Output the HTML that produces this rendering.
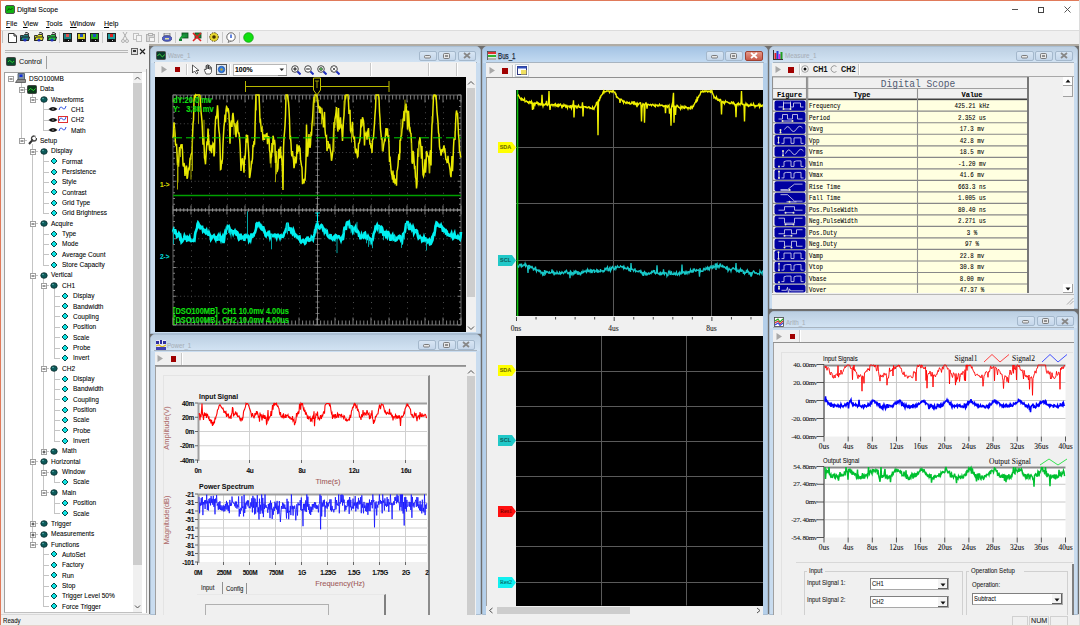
<!DOCTYPE html><html><head><meta charset="utf-8"><style>
html,body{margin:0;padding:0;width:1080px;height:626px;overflow:hidden;background:#f0f0f0}
body{position:relative;font-family:"Liberation Sans",sans-serif}
div{position:absolute}
.t{white-space:nowrap;-webkit-text-stroke:0.08px currentColor}
</style></head><body>
<div style="left:0px;top:0px;width:1080px;height:626px;background:#f0f0f0"></div>
<div style="left:0px;top:0px;width:1080px;height:30px;background:#ffffff"></div>
<div style="left:0px;top:0px;width:1080px;height:1px;background:#e07a5a"></div>
<div style="left:0px;top:0px;width:1px;height:626px;background:#e07a5a"></div>
<div style="left:1079px;top:0px;width:1px;height:626px;background:#dcdcdc"></div>
<div style="left:0px;top:625px;width:1080px;height:1px;background:#e8cfc8"></div>
<svg style="position:absolute;left:5px;top:4.5px;" width="10" height="9" viewBox="0 0 10 9"><rect x="0.5" y="0.5" width="9" height="8" rx="1.5" fill="#10b010" stroke="#505050" stroke-width="1"/><path d="M2.5 5.5L4 3.5L5.5 5L7.5 3" fill="none" stroke="#0a3a0a" stroke-width="0.9"/></svg>
<div class="t" style="left:17px;top:1.50px;height:16px;line-height:16px;font-size:8px;transform:scaleX(0.87);transform-origin:0 50%;color:#000">Digital Scope</div>
<div style="left:1011.5px;top:9px;width:6px;height:1px;background:#555"></div>
<div style="left:1037.5px;top:6.5px;width:6px;height:6px;border:1px solid #444;box-sizing:border-box"></div>
<svg style="position:absolute;left:1063.5px;top:6px;" width="7" height="7" viewBox="0 0 7 7"><path d="M0.5 0.5L6.5 6.5M6.5 0.5L0.5 6.5" stroke="#444" stroke-width="0.9"/></svg>
<div class="t" style="left:6px;top:16.00px;height:16px;line-height:16px;font-size:8px;transform:scaleX(0.88);transform-origin:0 50%;color:#000"><u>F</u>ile</div>
<div class="t" style="left:23px;top:16.00px;height:16px;line-height:16px;font-size:8px;transform:scaleX(0.88);transform-origin:0 50%;color:#000"><u>V</u>iew</div>
<div class="t" style="left:46px;top:16.00px;height:16px;line-height:16px;font-size:8px;transform:scaleX(0.88);transform-origin:0 50%;color:#000"><u>T</u>ools</div>
<div class="t" style="left:70px;top:16.00px;height:16px;line-height:16px;font-size:8px;transform:scaleX(0.88);transform-origin:0 50%;color:#000"><u>W</u>indow</div>
<div class="t" style="left:104px;top:16.00px;height:16px;line-height:16px;font-size:8px;transform:scaleX(0.88);transform-origin:0 50%;color:#000"><u>H</u>elp</div>
<div style="left:1px;top:30px;width:1078px;height:14px;background:#f0f0f0;border-top:1px solid #dcdcdc;box-sizing:border-box"></div>
<div style="left:149px;top:44px;width:930px;height:571px;background:#6e6e6e"></div>
<div style="left:149px;top:44px;width:930px;height:1.5px;background:#b0aca4"></div>
<div style="left:1px;top:44px;width:148px;height:570px;background:#f0f0f0"></div>
<div style="left:1px;top:614px;width:1078px;height:11px;background:#f0f0f0;border-top:1px solid #d8d8d8;box-sizing:border-box"></div>
<div class="t" style="left:3px;top:612.90px;height:15.2px;line-height:15.2px;font-size:7.6px;transform:scaleX(0.8);transform-origin:0 50%;color:#111">Ready</div>
<div style="left:150px;top:46px;width:331px;height:288px;background:#c9dcef;border:1px solid #aabed2;box-sizing:border-box;border-radius:5px 5px 0 0"></div>
<div style="left:151px;top:47px;width:329px;height:15.5px;background:linear-gradient(#bccfe2,#d3e4f4);border-radius:4px 4px 0 0"></div>
<div style="left:154px;top:62.2px;width:323px;height:0.8px;background:#a8b4c0"></div>
<div style="left:150px;top:334px;width:331px;height:281px;background:#c9dcef;border:1px solid #aabed2;box-sizing:border-box;border-radius:5px 5px 0 0"></div>
<div style="left:151px;top:335px;width:329px;height:15.5px;background:linear-gradient(#bccfe2,#d3e4f4);border-radius:4px 4px 0 0"></div>
<div style="left:154px;top:350.2px;width:323px;height:0.8px;background:#a8b4c0"></div>
<div style="left:482px;top:46px;width:286px;height:569px;background:#b4cfea;border:1px solid #aabed2;box-sizing:border-box;border-radius:5px 5px 0 0"></div>
<div style="left:483px;top:47px;width:284px;height:15.5px;background:linear-gradient(#a4c3e4,#c4dbf2);border-radius:4px 4px 0 0"></div>
<div style="left:486px;top:62.2px;width:278px;height:0.8px;background:#a8b4c0"></div>
<div style="left:769px;top:46px;width:309px;height:263px;background:#c9dcef;border:1px solid #aabed2;box-sizing:border-box;border-radius:5px 5px 0 0"></div>
<div style="left:770px;top:47px;width:307px;height:15.5px;background:linear-gradient(#bccfe2,#d3e4f4);border-radius:4px 4px 0 0"></div>
<div style="left:773px;top:62.2px;width:301px;height:0.8px;background:#a8b4c0"></div>
<div style="left:769px;top:311px;width:309px;height:304px;background:#c9dcef;border:1px solid #aabed2;box-sizing:border-box;border-radius:5px 5px 0 0"></div>
<div style="left:770px;top:312px;width:307px;height:15.5px;background:linear-gradient(#bccfe2,#d3e4f4);border-radius:4px 4px 0 0"></div>
<div style="left:773px;top:327.2px;width:301px;height:0.8px;background:#a8b4c0"></div>
<div style="left:155px;top:62px;width:321px;height:15px;background:#f0f0f0"></div>
<div style="left:155px;top:77px;width:311px;height:255px;background:#000"></div>
<div style="left:466px;top:77px;width:10px;height:255px;background:#f0f0f0"></div>
<div style="left:155px;top:352px;width:321px;height:14px;background:#f0f0f0"></div>
<div style="left:155px;top:366px;width:321px;height:249px;background:#f0f0f0;border-top:1px solid #a0a0a0;border-left:1px solid #a0a0a0;box-sizing:border-box"></div>
<div style="left:486px;top:63px;width:277px;height:14px;background:#f0f0f0"></div>
<div style="left:486px;top:77px;width:277px;height:538px;background:#f0f0f0;border-top:1px solid #a0a0a0;border-left:1px solid #a0a0a0;box-sizing:border-box"></div>
<div style="left:516px;top:90px;width:247px;height:226px;background:#000"></div>
<div style="left:516px;top:336px;width:247px;height:270px;background:#000"></div>
<div style="left:772px;top:63px;width:302px;height:13px;background:#f0f0f0"></div>
<div style="left:772px;top:76px;width:302px;height:233px;background:#f0f0f0"></div>
<div style="left:773px;top:330px;width:301px;height:12px;background:#f0f0f0"></div>
<div style="left:773px;top:342px;width:301px;height:273px;background:#f0f0f0;border-top:1px solid #a0a0a0;border-left:1px solid #a0a0a0;box-sizing:border-box"></div>
<svg style="position:absolute;left:8px;top:33px;" width="9" height="10" viewBox="0 0 9 10"><path d="M0.5 0.5H6L8.5 3V9.5H0.5Z" fill="#fff" stroke="#333" stroke-width="1"/><path d="M6 0.5V3H8.5" fill="none" stroke="#333"/></svg>
<svg style="position:absolute;left:20px;top:32px;" width="10" height="10" viewBox="0 0 10 10"><path d="M0.5 3.5H3.5L4.5 2.5H8.5V8.5H0.5Z" fill="#208080" stroke="#333"/><path d="M0.5 8.5L2 5H9.5L8.5 8.5Z" fill="#208080" stroke="#222"/><path d="M5 1Q7 -0.5 9 2" fill="none" stroke="#222"/><circle cx="5" cy="8" r="1.6" fill="#2030c0"/></svg>
<svg style="position:absolute;left:34px;top:32px;" width="10" height="10" viewBox="0 0 10 10"><path d="M0.5 3.5H3.5L4.5 2.5H8.5V8.5H0.5Z" fill="#e0e020" stroke="#333"/><path d="M0.5 8.5L2 5H9.5L8.5 8.5Z" fill="#e0e020" stroke="#222"/><path d="M5 1Q7 -0.5 9 2" fill="none" stroke="#222"/><circle cx="5" cy="8" r="1.6" fill="#2030c0"/></svg>
<svg style="position:absolute;left:47px;top:32px;" width="10" height="10" viewBox="0 0 10 10"><path d="M0.5 3.5H3.5L4.5 2.5H8.5V8.5H0.5Z" fill="#20c040" stroke="#333"/><path d="M0.5 8.5L2 5H9.5L8.5 8.5Z" fill="#20c040" stroke="#222"/><path d="M5 1Q7 -0.5 9 2" fill="none" stroke="#222"/><circle cx="5" cy="8" r="1.6" fill="#2030c0"/></svg>
<div style="left:59px;top:32px;width:1px;height:11px;background:#c8c8c8"></div>
<svg style="position:absolute;left:63px;top:33px;" width="9" height="9" viewBox="0 0 9 9"><rect x="0" y="0" width="9" height="9" fill="#222"/><rect x="1" y="1" width="7" height="5" fill="#208080"/><rect x="3" y="1" width="3" height="3" fill="#e05050"/><rect x="2" y="6" width="5" height="3" fill="#111"/><rect x="5" y="7" width="1" height="1" fill="#ddd"/></svg>
<svg style="position:absolute;left:77px;top:33px;" width="9" height="9" viewBox="0 0 9 9"><rect x="0" y="0" width="9" height="9" fill="#222"/><rect x="1" y="1" width="7" height="5" fill="#d0d020"/><rect x="3" y="1" width="3" height="3" fill="#2050c0"/><rect x="2" y="6" width="5" height="3" fill="#111"/><rect x="5" y="7" width="1" height="1" fill="#ddd"/></svg>
<svg style="position:absolute;left:90px;top:33px;" width="9" height="9" viewBox="0 0 9 9"><rect x="0" y="0" width="9" height="9" fill="#222"/><rect x="1" y="1" width="7" height="5" fill="#20b020"/><rect x="3" y="1" width="3" height="3" fill="#2050c0"/><rect x="2" y="6" width="5" height="3" fill="#111"/><rect x="5" y="7" width="1" height="1" fill="#ddd"/></svg>
<div style="left:102px;top:32px;width:1px;height:11px;background:#c8c8c8"></div>
<svg style="position:absolute;left:107px;top:33px;" width="9" height="9" viewBox="0 0 9 9"><rect x="0" y="0" width="9" height="9" fill="#222"/><rect x="1" y="1" width="7" height="5" fill="#20a0a0"/><rect x="3" y="1" width="3" height="3" fill="#e02020"/><rect x="2" y="6" width="5" height="3" fill="#111"/><rect x="5" y="7" width="1" height="1" fill="#ddd"/></svg>
<svg style="position:absolute;left:121px;top:32px;" width="8" height="11" viewBox="0 0 8 11"><path d="M2 0L6 7M6 0L2 7" stroke="#b0b0b0" stroke-width="1"/><circle cx="2" cy="9" r="1.5" fill="none" stroke="#b0b0b0"/><circle cx="6" cy="9" r="1.5" fill="none" stroke="#b0b0b0"/></svg>
<svg style="position:absolute;left:133px;top:33px;" width="10" height="9" viewBox="0 0 10 9"><rect x="0.5" y="0.5" width="5" height="6" fill="#f4f4f4" stroke="#c0c0c0"/><rect x="3.5" y="2.5" width="5" height="6" fill="#f4f4f4" stroke="#c0c0c0"/></svg>
<svg style="position:absolute;left:146px;top:33px;" width="10" height="9" viewBox="0 0 10 9"><rect x="0.5" y="1.5" width="8" height="7" fill="#d8d8d8" stroke="#b0b0b0"/><rect x="2.5" y="0.5" width="4" height="2" fill="#eee" stroke="#b0b0b0"/><rect x="3.5" y="4.5" width="5" height="4" fill="#f4f4f4" stroke="#b8b8b8"/></svg>
<div style="left:158px;top:32px;width:1px;height:11px;background:#c8c8c8"></div>
<svg style="position:absolute;left:162px;top:33px;" width="10" height="9" viewBox="0 0 10 9"><rect x="2" y="0" width="6" height="3" fill="#ddd" stroke="#555" stroke-width="0.6"/><ellipse cx="5" cy="5.5" rx="4.7" ry="2.8" fill="#5060c8" stroke="#303880" stroke-width="0.8"/><rect x="3" y="5" width="4" height="1.5" fill="#e0e0a0"/></svg>
<div style="left:175px;top:32px;width:1px;height:11px;background:#c8c8c8"></div>
<svg style="position:absolute;left:179px;top:32px;" width="10" height="10" viewBox="0 0 10 10"><rect x="3" y="1" width="6" height="5" fill="#1a8a3a" stroke="#0a4a1a" stroke-width="0.8"/><path d="M1 8Q2 4 6 4" fill="none" stroke="#1aa03a" stroke-width="2"/><rect x="0" y="7" width="3" height="2" fill="#108030"/></svg>
<svg style="position:absolute;left:192px;top:32px;" width="10" height="10" viewBox="0 0 10 10"><rect x="3" y="1" width="6" height="5" fill="#1a8a3a" stroke="#0a4a1a" stroke-width="0.8"/><path d="M1 1L9 9M9 1L1 9" stroke="#e02020" stroke-width="1.6"/></svg>
<div style="left:207px;top:32px;width:1px;height:11px;background:#c8c8c8"></div>
<svg style="position:absolute;left:209px;top:32px;" width="10" height="10" viewBox="0 0 10 10"><circle cx="5" cy="5" r="4.3" fill="#e8d830" stroke="#403000" stroke-width="0.9" stroke-dasharray="1.5 1"/><circle cx="5" cy="5" r="1.8" fill="#403000"/></svg>
<div style="left:222px;top:32px;width:1px;height:11px;background:#c8c8c8"></div>
<svg style="position:absolute;left:226px;top:32px;" width="10" height="11" viewBox="0 0 10 11"><circle cx="5" cy="5" r="4.2" fill="#fff" stroke="#444" stroke-width="0.8"/><path d="M5 2.5V6" stroke="#2050d0" stroke-width="1.4"/><path d="M3 8.5L2 10.5L5 9" fill="#fff" stroke="#444" stroke-width="0.6"/></svg>
<div style="left:239px;top:32px;width:1px;height:11px;background:#c8c8c8"></div>
<svg style="position:absolute;left:243px;top:32px;" width="11" height="11" viewBox="0 0 11 11"><circle cx="5.5" cy="5.5" r="4.8" fill="#10e010" stroke="#10a010" stroke-width="0.8"/></svg>
<div style="left:2px;top:31px;width:1px;height:12px;background:#c0c0c0"></div>
<div style="left:5px;top:50px;width:123px;height:1px;background:#b8b8b8"></div>
<div style="left:5px;top:52px;width:123px;height:1px;background:#b8b8b8"></div>
<svg style="position:absolute;left:131px;top:48px;" width="7" height="7" viewBox="0 0 7 7"><rect x="0.5" y="0.5" width="6" height="6" fill="#ddd" stroke="#666"/><rect x="2" y="2" width="3" height="2" fill="#333"/></svg>
<svg style="position:absolute;left:139px;top:48px;" width="7" height="7" viewBox="0 0 7 7"><path d="M1 1L6 6M6 1L1 6" stroke="#222" stroke-width="1.2"/></svg>
<div style="left:5px;top:56px;width:41px;height:14px;background:#f0f0f0"></div>
<div style="left:46px;top:56px;width:1px;height:13px;background:#a0a0a0"></div>
<svg style="position:absolute;left:6px;top:57px;" width="10" height="9" viewBox="0 0 10 9"><rect x="0.5" y="0.5" width="9" height="8" rx="1" fill="#0a4a2a" stroke="#444"/><path d="M2 5Q3.5 2 5 4.5T8 4" fill="none" stroke="#2fe02f" stroke-width="0.9"/></svg>
<div class="t" style="left:19px;top:54.00px;height:16px;line-height:16px;font-size:8px;transform:scaleX(0.89);transform-origin:0 50%;color:#222">Control</div>
<div style="left:4px;top:72px;width:142px;height:541px;background:#fff;border-top:1px solid #a0a0a0;border-left:1px solid #a0a0a0;border-bottom:1px solid #c0c0c0;box-sizing:border-box"></div>
<div style="left:133px;top:73px;width:9px;height:539px;background:#f0f0f0"></div>
<div style="left:133px;top:83px;width:9px;height:482px;background:#cdcdcd"></div>
<svg style="position:absolute;left:134px;top:75px;" width="7" height="6" viewBox="0 0 7 6"><path d="M1 4.5L3.5 2L6 4.5" fill="none" stroke="#505050" stroke-width="1"/></svg>
<svg style="position:absolute;left:134px;top:604px;" width="7" height="6" viewBox="0 0 7 6"><path d="M1 1.5L3.5 4L6 1.5" fill="none" stroke="#505050" stroke-width="1"/></svg>
<div style="left:142px;top:72px;width:4px;height:541px;background:#fff"></div>
<div style="left:146px;top:69px;width:1px;height:544px;background:#a8a8a8"></div>
<div style="left:21px;top:81.4px;width:1px;height:59.099999999999994px;background:#c4c4c4"></div>
<div style="left:32px;top:91.75px;width:1px;height:7.3500000000000085px;background:#c4c4c4"></div>
<div style="left:43px;top:102.10000000000001px;width:1px;height:28.049999999999997px;background:#c4c4c4"></div>
<div style="left:32px;top:143.5px;width:1px;height:400.65px;background:#c4c4c4"></div>
<div style="left:43px;top:153.85000000000002px;width:1px;height:59.099999999999966px;background:#c4c4c4"></div>
<div style="left:43px;top:226.3px;width:1px;height:38.39999999999998px;background:#c4c4c4"></div>
<div style="left:43px;top:278.05px;width:1px;height:172.95px;background:#c4c4c4"></div>
<div style="left:54px;top:288.4px;width:1px;height:69.45000000000005px;background:#c4c4c4"></div>
<div style="left:54px;top:371.20000000000005px;width:1px;height:69.44999999999993px;background:#c4c4c4"></div>
<div style="left:43px;top:464.35px;width:1px;height:28.049999999999955px;background:#c4c4c4"></div>
<div style="left:54px;top:474.70000000000005px;width:1px;height:7.349999999999909px;background:#c4c4c4"></div>
<div style="left:54px;top:495.4px;width:1px;height:17.700000000000045px;background:#c4c4c4"></div>
<div style="left:43px;top:547.15px;width:1px;height:59.10000000000002px;background:#c4c4c4"></div>
<svg style="position:absolute;left:8px;top:76px;" width="6" height="6" viewBox="0 0 6 6"><rect x="0.5" y="0.5" width="5" height="5" fill="#fff" stroke="#a0a0a0"/><path d="M1.5 3H4.5" stroke="#333" stroke-width="1"/></svg>
<svg style="position:absolute;left:15px;top:73px;" width="11" height="10" viewBox="0 0 11 10"><path d="M3 0.5H9.5V7.5H3Z" fill="#8090a0" stroke="#405060" stroke-width="0.8"/><rect x="4.5" y="1.5" width="3" height="2.5" fill="#1030e0"/><path d="M0.5 9.5L2.5 6.5H10.5V9.5Z" fill="#909090" stroke="#505050" stroke-width="0.8"/></svg>
<div class="t" style="left:29.0px;top:70.80px;height:15.2px;line-height:15.2px;font-size:7.6px;transform:scaleX(0.86);transform-origin:0 50%;color:#000">DSO100MB</div>
<div style="left:21px;top:89px;width:6px;height:1px;background:#c4c4c4"></div>
<svg style="position:absolute;left:19px;top:87px;" width="6" height="6" viewBox="0 0 6 6"><rect x="0.5" y="0.5" width="5" height="5" fill="#fff" stroke="#a0a0a0"/><path d="M1.5 3H4.5" stroke="#333" stroke-width="1"/></svg>
<svg style="position:absolute;left:27px;top:84.5px;" width="10" height="9" viewBox="0 0 10 9"><rect x="0.5" y="0.5" width="9" height="8" rx="1" fill="#0a3a1a" stroke="#444"/><path d="M1.5 5.5Q3.5 2 5 4.5T8.5 3.5" fill="none" stroke="#30e030" stroke-width="0.9"/></svg>
<div class="t" style="left:39.9px;top:81.15px;height:15.2px;line-height:15.2px;font-size:7.6px;transform:scaleX(0.86);transform-origin:0 50%;color:#000">Data</div>
<div style="left:32px;top:99px;width:6px;height:1px;background:#c4c4c4"></div>
<svg style="position:absolute;left:30px;top:97px;" width="6" height="6" viewBox="0 0 6 6"><rect x="0.5" y="0.5" width="5" height="5" fill="#fff" stroke="#a0a0a0"/><path d="M1.5 3H4.5" stroke="#333" stroke-width="1"/></svg>
<svg style="position:absolute;left:40px;top:96px;" width="8" height="7" viewBox="0 0 8 7"><ellipse cx="4" cy="3.5" rx="3.2" ry="2.8" fill="#0d5a5a" stroke="#082a2a" stroke-width="0.8"/><circle cx="3" cy="2.5" r="0.8" fill="#5fb0b0"/></svg>
<div class="t" style="left:50.8px;top:91.50px;height:15.2px;line-height:15.2px;font-size:7.6px;transform:scaleX(0.86);transform-origin:0 50%;color:#000">Waveforms</div>
<div style="left:43px;top:109px;width:6px;height:1px;background:#c4c4c4"></div>
<svg style="position:absolute;left:48px;top:106px;" width="10" height="6" viewBox="0 0 10 6"><path d="M0.5 3Q5 -1 9.5 3Q5 7 0.5 3Z" fill="#111"/><circle cx="5" cy="3" r="1.2" fill="#555"/></svg>
<svg style="position:absolute;left:58px;top:105px;" width="10" height="7" viewBox="0 0 10 7"><path d="M1 5Q2.5 0 4.5 3T8 1" fill="none" stroke="#3050e0" stroke-width="1"/></svg>
<div class="t" style="left:71px;top:101.85px;height:15.2px;line-height:15.2px;font-size:7.6px;transform:scaleX(0.86);transform-origin:0 50%;color:#000">CH1</div>
<div style="left:43px;top:120px;width:6px;height:1px;background:#c4c4c4"></div>
<svg style="position:absolute;left:48px;top:117px;" width="10" height="6" viewBox="0 0 10 6"><path d="M0.5 3Q5 -1 9.5 3Q5 7 0.5 3Z" fill="#111"/><circle cx="5" cy="3" r="1.2" fill="#555"/></svg>
<svg style="position:absolute;left:58px;top:116px;" width="10" height="7" viewBox="0 0 10 7"><rect x="0.5" y="0.5" width="9" height="6" fill="#fff" stroke="#e03030"/><path d="M1 5Q2.5 0 4.5 3T8 1" fill="none" stroke="#3050e0" stroke-width="1"/></svg>
<div class="t" style="left:71px;top:112.20px;height:15.2px;line-height:15.2px;font-size:7.6px;transform:scaleX(0.86);transform-origin:0 50%;color:#000">CH2</div>
<div style="left:43px;top:130px;width:6px;height:1px;background:#c4c4c4"></div>
<svg style="position:absolute;left:48px;top:127px;" width="10" height="6" viewBox="0 0 10 6"><path d="M0.5 3Q5 -1 9.5 3Q5 7 0.5 3Z" fill="#111"/><circle cx="5" cy="3" r="1.2" fill="#555"/></svg>
<svg style="position:absolute;left:58px;top:126px;" width="10" height="7" viewBox="0 0 10 7"><path d="M1 5Q2.5 0 4.5 3T8 1" fill="none" stroke="#3050e0" stroke-width="1"/></svg>
<div class="t" style="left:71px;top:122.55px;height:15.2px;line-height:15.2px;font-size:7.6px;transform:scaleX(0.86);transform-origin:0 50%;color:#000">Math</div>
<div style="left:21px;top:140px;width:6px;height:1px;background:#c4c4c4"></div>
<svg style="position:absolute;left:19px;top:138px;" width="6" height="6" viewBox="0 0 6 6"><rect x="0.5" y="0.5" width="5" height="5" fill="#fff" stroke="#a0a0a0"/><path d="M1.5 3H4.5" stroke="#333" stroke-width="1"/></svg>
<svg style="position:absolute;left:27px;top:135px;" width="10" height="11" viewBox="0 0 10 11"><path d="M2 9L6 4.5" stroke="#333" stroke-width="2"/><circle cx="7" cy="3.5" r="2.5" fill="none" stroke="#444" stroke-width="1.3"/><path d="M7.5 1L9.5 1L9.5 3" stroke="#fff" stroke-width="1.2" fill="none"/></svg>
<div class="t" style="left:39.9px;top:132.90px;height:15.2px;line-height:15.2px;font-size:7.6px;transform:scaleX(0.86);transform-origin:0 50%;color:#000">Setup</div>
<div style="left:32px;top:151px;width:6px;height:1px;background:#c4c4c4"></div>
<svg style="position:absolute;left:30px;top:149px;" width="6" height="6" viewBox="0 0 6 6"><rect x="0.5" y="0.5" width="5" height="5" fill="#fff" stroke="#a0a0a0"/><path d="M1.5 3H4.5" stroke="#333" stroke-width="1"/></svg>
<svg style="position:absolute;left:40px;top:148px;" width="8" height="7" viewBox="0 0 8 7"><ellipse cx="4" cy="3.5" rx="3.2" ry="2.8" fill="#0d5a5a" stroke="#082a2a" stroke-width="0.8"/><circle cx="3" cy="2.5" r="0.8" fill="#5fb0b0"/></svg>
<div class="t" style="left:50.8px;top:143.25px;height:15.2px;line-height:15.2px;font-size:7.6px;transform:scaleX(0.86);transform-origin:0 50%;color:#000">Display</div>
<div style="left:43px;top:161px;width:6px;height:1px;background:#c4c4c4"></div>
<svg style="position:absolute;left:50px;top:157px;" width="8" height="8" viewBox="0 0 8 8"><path d="M4 1L7 4L4 7L1 4Z" fill="#10e0e0" stroke="#0a4a4a" stroke-width="1"/></svg>
<div class="t" style="left:61.7px;top:153.60px;height:15.2px;line-height:15.2px;font-size:7.6px;transform:scaleX(0.86);transform-origin:0 50%;color:#000">Format</div>
<div style="left:43px;top:172px;width:6px;height:1px;background:#c4c4c4"></div>
<svg style="position:absolute;left:50px;top:168px;" width="8" height="8" viewBox="0 0 8 8"><path d="M4 1L7 4L4 7L1 4Z" fill="#10e0e0" stroke="#0a4a4a" stroke-width="1"/></svg>
<div class="t" style="left:61.7px;top:163.95px;height:15.2px;line-height:15.2px;font-size:7.6px;transform:scaleX(0.86);transform-origin:0 50%;color:#000">Persistence</div>
<div style="left:43px;top:182px;width:6px;height:1px;background:#c4c4c4"></div>
<svg style="position:absolute;left:50px;top:178px;" width="8" height="8" viewBox="0 0 8 8"><path d="M4 1L7 4L4 7L1 4Z" fill="#10e0e0" stroke="#0a4a4a" stroke-width="1"/></svg>
<div class="t" style="left:61.7px;top:174.30px;height:15.2px;line-height:15.2px;font-size:7.6px;transform:scaleX(0.86);transform-origin:0 50%;color:#000">Style</div>
<div style="left:43px;top:192px;width:6px;height:1px;background:#c4c4c4"></div>
<svg style="position:absolute;left:50px;top:188px;" width="8" height="8" viewBox="0 0 8 8"><path d="M4 1L7 4L4 7L1 4Z" fill="#10e0e0" stroke="#0a4a4a" stroke-width="1"/></svg>
<div class="t" style="left:61.7px;top:184.65px;height:15.2px;line-height:15.2px;font-size:7.6px;transform:scaleX(0.86);transform-origin:0 50%;color:#000">Contrast</div>
<div style="left:43px;top:203px;width:6px;height:1px;background:#c4c4c4"></div>
<svg style="position:absolute;left:50px;top:199px;" width="8" height="8" viewBox="0 0 8 8"><path d="M4 1L7 4L4 7L1 4Z" fill="#10e0e0" stroke="#0a4a4a" stroke-width="1"/></svg>
<div class="t" style="left:61.7px;top:195.00px;height:15.2px;line-height:15.2px;font-size:7.6px;transform:scaleX(0.86);transform-origin:0 50%;color:#000">Grid Type</div>
<div style="left:43px;top:213px;width:6px;height:1px;background:#c4c4c4"></div>
<svg style="position:absolute;left:50px;top:209px;" width="8" height="8" viewBox="0 0 8 8"><path d="M4 1L7 4L4 7L1 4Z" fill="#10e0e0" stroke="#0a4a4a" stroke-width="1"/></svg>
<div class="t" style="left:61.7px;top:205.35px;height:15.2px;line-height:15.2px;font-size:7.6px;transform:scaleX(0.86);transform-origin:0 50%;color:#000">Grid Brightness</div>
<div style="left:32px;top:223px;width:6px;height:1px;background:#c4c4c4"></div>
<svg style="position:absolute;left:30px;top:221px;" width="6" height="6" viewBox="0 0 6 6"><rect x="0.5" y="0.5" width="5" height="5" fill="#fff" stroke="#a0a0a0"/><path d="M1.5 3H4.5" stroke="#333" stroke-width="1"/></svg>
<svg style="position:absolute;left:40px;top:220px;" width="8" height="7" viewBox="0 0 8 7"><ellipse cx="4" cy="3.5" rx="3.2" ry="2.8" fill="#0d5a5a" stroke="#082a2a" stroke-width="0.8"/><circle cx="3" cy="2.5" r="0.8" fill="#5fb0b0"/></svg>
<div class="t" style="left:50.8px;top:215.70px;height:15.2px;line-height:15.2px;font-size:7.6px;transform:scaleX(0.86);transform-origin:0 50%;color:#000">Acquire</div>
<div style="left:43px;top:234px;width:6px;height:1px;background:#c4c4c4"></div>
<svg style="position:absolute;left:50px;top:230px;" width="8" height="8" viewBox="0 0 8 8"><path d="M4 1L7 4L4 7L1 4Z" fill="#10e0e0" stroke="#0a4a4a" stroke-width="1"/></svg>
<div class="t" style="left:61.7px;top:226.05px;height:15.2px;line-height:15.2px;font-size:7.6px;transform:scaleX(0.86);transform-origin:0 50%;color:#000">Type</div>
<div style="left:43px;top:244px;width:6px;height:1px;background:#c4c4c4"></div>
<svg style="position:absolute;left:50px;top:240px;" width="8" height="8" viewBox="0 0 8 8"><path d="M4 1L7 4L4 7L1 4Z" fill="#10e0e0" stroke="#0a4a4a" stroke-width="1"/></svg>
<div class="t" style="left:61.7px;top:236.40px;height:15.2px;line-height:15.2px;font-size:7.6px;transform:scaleX(0.86);transform-origin:0 50%;color:#000">Mode</div>
<div style="left:43px;top:254px;width:6px;height:1px;background:#c4c4c4"></div>
<svg style="position:absolute;left:50px;top:250px;" width="8" height="8" viewBox="0 0 8 8"><path d="M4 1L7 4L4 7L1 4Z" fill="#10e0e0" stroke="#0a4a4a" stroke-width="1"/></svg>
<div class="t" style="left:61.7px;top:246.75px;height:15.2px;line-height:15.2px;font-size:7.6px;transform:scaleX(0.86);transform-origin:0 50%;color:#000">Average Count</div>
<div style="left:43px;top:265px;width:6px;height:1px;background:#c4c4c4"></div>
<svg style="position:absolute;left:50px;top:261px;" width="8" height="8" viewBox="0 0 8 8"><path d="M4 1L7 4L4 7L1 4Z" fill="#10e0e0" stroke="#0a4a4a" stroke-width="1"/></svg>
<div class="t" style="left:61.7px;top:257.10px;height:15.2px;line-height:15.2px;font-size:7.6px;transform:scaleX(0.86);transform-origin:0 50%;color:#000">Store Capacity</div>
<div style="left:32px;top:275px;width:6px;height:1px;background:#c4c4c4"></div>
<svg style="position:absolute;left:30px;top:273px;" width="6" height="6" viewBox="0 0 6 6"><rect x="0.5" y="0.5" width="5" height="5" fill="#fff" stroke="#a0a0a0"/><path d="M1.5 3H4.5" stroke="#333" stroke-width="1"/></svg>
<svg style="position:absolute;left:40px;top:272px;" width="8" height="7" viewBox="0 0 8 7"><ellipse cx="4" cy="3.5" rx="3.2" ry="2.8" fill="#0d5a5a" stroke="#082a2a" stroke-width="0.8"/><circle cx="3" cy="2.5" r="0.8" fill="#5fb0b0"/></svg>
<div class="t" style="left:50.8px;top:267.45px;height:15.2px;line-height:15.2px;font-size:7.6px;transform:scaleX(0.86);transform-origin:0 50%;color:#000">Vertical</div>
<div style="left:43px;top:285px;width:6px;height:1px;background:#c4c4c4"></div>
<svg style="position:absolute;left:41px;top:283px;" width="6" height="6" viewBox="0 0 6 6"><rect x="0.5" y="0.5" width="5" height="5" fill="#fff" stroke="#a0a0a0"/><path d="M1.5 3H4.5" stroke="#333" stroke-width="1"/></svg>
<svg style="position:absolute;left:50px;top:282px;" width="8" height="7" viewBox="0 0 8 7"><ellipse cx="4" cy="3.5" rx="3.2" ry="2.8" fill="#0d5a5a" stroke="#082a2a" stroke-width="0.8"/><circle cx="3" cy="2.5" r="0.8" fill="#5fb0b0"/></svg>
<div class="t" style="left:61.7px;top:277.80px;height:15.2px;line-height:15.2px;font-size:7.6px;transform:scaleX(0.86);transform-origin:0 50%;color:#000">CH1</div>
<div style="left:54px;top:296px;width:6px;height:1px;background:#c4c4c4"></div>
<svg style="position:absolute;left:61px;top:292px;" width="8" height="8" viewBox="0 0 8 8"><path d="M4 1L7 4L4 7L1 4Z" fill="#10e0e0" stroke="#0a4a4a" stroke-width="1"/></svg>
<div class="t" style="left:72.6px;top:288.15px;height:15.2px;line-height:15.2px;font-size:7.6px;transform:scaleX(0.86);transform-origin:0 50%;color:#000">Display</div>
<div style="left:54px;top:306px;width:6px;height:1px;background:#c4c4c4"></div>
<svg style="position:absolute;left:61px;top:302px;" width="8" height="8" viewBox="0 0 8 8"><path d="M4 1L7 4L4 7L1 4Z" fill="#10e0e0" stroke="#0a4a4a" stroke-width="1"/></svg>
<div class="t" style="left:72.6px;top:298.50px;height:15.2px;line-height:15.2px;font-size:7.6px;transform:scaleX(0.86);transform-origin:0 50%;color:#000">Bandwidth</div>
<div style="left:54px;top:316px;width:6px;height:1px;background:#c4c4c4"></div>
<svg style="position:absolute;left:61px;top:312px;" width="8" height="8" viewBox="0 0 8 8"><path d="M4 1L7 4L4 7L1 4Z" fill="#10e0e0" stroke="#0a4a4a" stroke-width="1"/></svg>
<div class="t" style="left:72.6px;top:308.85px;height:15.2px;line-height:15.2px;font-size:7.6px;transform:scaleX(0.86);transform-origin:0 50%;color:#000">Coupling</div>
<div style="left:54px;top:327px;width:6px;height:1px;background:#c4c4c4"></div>
<svg style="position:absolute;left:61px;top:323px;" width="8" height="8" viewBox="0 0 8 8"><path d="M4 1L7 4L4 7L1 4Z" fill="#10e0e0" stroke="#0a4a4a" stroke-width="1"/></svg>
<div class="t" style="left:72.6px;top:319.20px;height:15.2px;line-height:15.2px;font-size:7.6px;transform:scaleX(0.86);transform-origin:0 50%;color:#000">Position</div>
<div style="left:54px;top:337px;width:6px;height:1px;background:#c4c4c4"></div>
<svg style="position:absolute;left:61px;top:333px;" width="8" height="8" viewBox="0 0 8 8"><path d="M4 1L7 4L4 7L1 4Z" fill="#10e0e0" stroke="#0a4a4a" stroke-width="1"/></svg>
<div class="t" style="left:72.6px;top:329.55px;height:15.2px;line-height:15.2px;font-size:7.6px;transform:scaleX(0.86);transform-origin:0 50%;color:#000">Scale</div>
<div style="left:54px;top:348px;width:6px;height:1px;background:#c4c4c4"></div>
<svg style="position:absolute;left:61px;top:344px;" width="8" height="8" viewBox="0 0 8 8"><path d="M4 1L7 4L4 7L1 4Z" fill="#10e0e0" stroke="#0a4a4a" stroke-width="1"/></svg>
<div class="t" style="left:72.6px;top:339.90px;height:15.2px;line-height:15.2px;font-size:7.6px;transform:scaleX(0.86);transform-origin:0 50%;color:#000">Probe</div>
<div style="left:54px;top:358px;width:6px;height:1px;background:#c4c4c4"></div>
<svg style="position:absolute;left:61px;top:354px;" width="8" height="8" viewBox="0 0 8 8"><path d="M4 1L7 4L4 7L1 4Z" fill="#10e0e0" stroke="#0a4a4a" stroke-width="1"/></svg>
<div class="t" style="left:72.6px;top:350.25px;height:15.2px;line-height:15.2px;font-size:7.6px;transform:scaleX(0.86);transform-origin:0 50%;color:#000">Invert</div>
<div style="left:43px;top:368px;width:6px;height:1px;background:#c4c4c4"></div>
<svg style="position:absolute;left:41px;top:366px;" width="6" height="6" viewBox="0 0 6 6"><rect x="0.5" y="0.5" width="5" height="5" fill="#fff" stroke="#a0a0a0"/><path d="M1.5 3H4.5" stroke="#333" stroke-width="1"/></svg>
<svg style="position:absolute;left:50px;top:365px;" width="8" height="7" viewBox="0 0 8 7"><ellipse cx="4" cy="3.5" rx="3.2" ry="2.8" fill="#0d5a5a" stroke="#082a2a" stroke-width="0.8"/><circle cx="3" cy="2.5" r="0.8" fill="#5fb0b0"/></svg>
<div class="t" style="left:61.7px;top:360.60px;height:15.2px;line-height:15.2px;font-size:7.6px;transform:scaleX(0.86);transform-origin:0 50%;color:#000">CH2</div>
<div style="left:54px;top:379px;width:6px;height:1px;background:#c4c4c4"></div>
<svg style="position:absolute;left:61px;top:375px;" width="8" height="8" viewBox="0 0 8 8"><path d="M4 1L7 4L4 7L1 4Z" fill="#10e0e0" stroke="#0a4a4a" stroke-width="1"/></svg>
<div class="t" style="left:72.6px;top:370.95px;height:15.2px;line-height:15.2px;font-size:7.6px;transform:scaleX(0.86);transform-origin:0 50%;color:#000">Display</div>
<div style="left:54px;top:389px;width:6px;height:1px;background:#c4c4c4"></div>
<svg style="position:absolute;left:61px;top:385px;" width="8" height="8" viewBox="0 0 8 8"><path d="M4 1L7 4L4 7L1 4Z" fill="#10e0e0" stroke="#0a4a4a" stroke-width="1"/></svg>
<div class="t" style="left:72.6px;top:381.30px;height:15.2px;line-height:15.2px;font-size:7.6px;transform:scaleX(0.86);transform-origin:0 50%;color:#000">Bandwidth</div>
<div style="left:54px;top:399px;width:6px;height:1px;background:#c4c4c4"></div>
<svg style="position:absolute;left:61px;top:395px;" width="8" height="8" viewBox="0 0 8 8"><path d="M4 1L7 4L4 7L1 4Z" fill="#10e0e0" stroke="#0a4a4a" stroke-width="1"/></svg>
<div class="t" style="left:72.6px;top:391.65px;height:15.2px;line-height:15.2px;font-size:7.6px;transform:scaleX(0.86);transform-origin:0 50%;color:#000">Coupling</div>
<div style="left:54px;top:410px;width:6px;height:1px;background:#c4c4c4"></div>
<svg style="position:absolute;left:61px;top:406px;" width="8" height="8" viewBox="0 0 8 8"><path d="M4 1L7 4L4 7L1 4Z" fill="#10e0e0" stroke="#0a4a4a" stroke-width="1"/></svg>
<div class="t" style="left:72.6px;top:402.00px;height:15.2px;line-height:15.2px;font-size:7.6px;transform:scaleX(0.86);transform-origin:0 50%;color:#000">Position</div>
<div style="left:54px;top:420px;width:6px;height:1px;background:#c4c4c4"></div>
<svg style="position:absolute;left:61px;top:416px;" width="8" height="8" viewBox="0 0 8 8"><path d="M4 1L7 4L4 7L1 4Z" fill="#10e0e0" stroke="#0a4a4a" stroke-width="1"/></svg>
<div class="t" style="left:72.6px;top:412.35px;height:15.2px;line-height:15.2px;font-size:7.6px;transform:scaleX(0.86);transform-origin:0 50%;color:#000">Scale</div>
<div style="left:54px;top:430px;width:6px;height:1px;background:#c4c4c4"></div>
<svg style="position:absolute;left:61px;top:426px;" width="8" height="8" viewBox="0 0 8 8"><path d="M4 1L7 4L4 7L1 4Z" fill="#10e0e0" stroke="#0a4a4a" stroke-width="1"/></svg>
<div class="t" style="left:72.6px;top:422.70px;height:15.2px;line-height:15.2px;font-size:7.6px;transform:scaleX(0.86);transform-origin:0 50%;color:#000">Probe</div>
<div style="left:54px;top:441px;width:6px;height:1px;background:#c4c4c4"></div>
<svg style="position:absolute;left:61px;top:437px;" width="8" height="8" viewBox="0 0 8 8"><path d="M4 1L7 4L4 7L1 4Z" fill="#10e0e0" stroke="#0a4a4a" stroke-width="1"/></svg>
<div class="t" style="left:72.6px;top:433.05px;height:15.2px;line-height:15.2px;font-size:7.6px;transform:scaleX(0.86);transform-origin:0 50%;color:#000">Invert</div>
<div style="left:43px;top:451px;width:6px;height:1px;background:#c4c4c4"></div>
<svg style="position:absolute;left:41px;top:449px;" width="6" height="6" viewBox="0 0 6 6"><rect x="0.5" y="0.5" width="5" height="5" fill="#fff" stroke="#a0a0a0"/><path d="M1.5 3H4.5" stroke="#333" stroke-width="1"/><path d="M3 1.5V4.5" stroke="#333" stroke-width="1"/></svg>
<svg style="position:absolute;left:50px;top:448px;" width="8" height="7" viewBox="0 0 8 7"><ellipse cx="4" cy="3.5" rx="3.2" ry="2.8" fill="#0d5a5a" stroke="#082a2a" stroke-width="0.8"/><circle cx="3" cy="2.5" r="0.8" fill="#5fb0b0"/></svg>
<div class="t" style="left:61.7px;top:443.40px;height:15.2px;line-height:15.2px;font-size:7.6px;transform:scaleX(0.86);transform-origin:0 50%;color:#000">Math</div>
<div style="left:32px;top:461px;width:6px;height:1px;background:#c4c4c4"></div>
<svg style="position:absolute;left:30px;top:459px;" width="6" height="6" viewBox="0 0 6 6"><rect x="0.5" y="0.5" width="5" height="5" fill="#fff" stroke="#a0a0a0"/><path d="M1.5 3H4.5" stroke="#333" stroke-width="1"/></svg>
<svg style="position:absolute;left:40px;top:458px;" width="8" height="7" viewBox="0 0 8 7"><ellipse cx="4" cy="3.5" rx="3.2" ry="2.8" fill="#0d5a5a" stroke="#082a2a" stroke-width="0.8"/><circle cx="3" cy="2.5" r="0.8" fill="#5fb0b0"/></svg>
<div class="t" style="left:50.8px;top:453.75px;height:15.2px;line-height:15.2px;font-size:7.6px;transform:scaleX(0.86);transform-origin:0 50%;color:#000">Horizontal</div>
<div style="left:43px;top:472px;width:6px;height:1px;background:#c4c4c4"></div>
<svg style="position:absolute;left:41px;top:470px;" width="6" height="6" viewBox="0 0 6 6"><rect x="0.5" y="0.5" width="5" height="5" fill="#fff" stroke="#a0a0a0"/><path d="M1.5 3H4.5" stroke="#333" stroke-width="1"/></svg>
<svg style="position:absolute;left:50px;top:469px;" width="8" height="7" viewBox="0 0 8 7"><ellipse cx="4" cy="3.5" rx="3.2" ry="2.8" fill="#0d5a5a" stroke="#082a2a" stroke-width="0.8"/><circle cx="3" cy="2.5" r="0.8" fill="#5fb0b0"/></svg>
<div class="t" style="left:61.7px;top:464.10px;height:15.2px;line-height:15.2px;font-size:7.6px;transform:scaleX(0.86);transform-origin:0 50%;color:#000">Window</div>
<div style="left:54px;top:482px;width:6px;height:1px;background:#c4c4c4"></div>
<svg style="position:absolute;left:61px;top:478px;" width="8" height="8" viewBox="0 0 8 8"><path d="M4 1L7 4L4 7L1 4Z" fill="#10e0e0" stroke="#0a4a4a" stroke-width="1"/></svg>
<div class="t" style="left:72.6px;top:474.45px;height:15.2px;line-height:15.2px;font-size:7.6px;transform:scaleX(0.86);transform-origin:0 50%;color:#000">Scale</div>
<div style="left:43px;top:492px;width:6px;height:1px;background:#c4c4c4"></div>
<svg style="position:absolute;left:41px;top:490px;" width="6" height="6" viewBox="0 0 6 6"><rect x="0.5" y="0.5" width="5" height="5" fill="#fff" stroke="#a0a0a0"/><path d="M1.5 3H4.5" stroke="#333" stroke-width="1"/></svg>
<svg style="position:absolute;left:50px;top:489px;" width="8" height="7" viewBox="0 0 8 7"><ellipse cx="4" cy="3.5" rx="3.2" ry="2.8" fill="#0d5a5a" stroke="#082a2a" stroke-width="0.8"/><circle cx="3" cy="2.5" r="0.8" fill="#5fb0b0"/></svg>
<div class="t" style="left:61.7px;top:484.80px;height:15.2px;line-height:15.2px;font-size:7.6px;transform:scaleX(0.86);transform-origin:0 50%;color:#000">Main</div>
<div style="left:54px;top:503px;width:6px;height:1px;background:#c4c4c4"></div>
<svg style="position:absolute;left:61px;top:499px;" width="8" height="8" viewBox="0 0 8 8"><path d="M4 1L7 4L4 7L1 4Z" fill="#10e0e0" stroke="#0a4a4a" stroke-width="1"/></svg>
<div class="t" style="left:72.6px;top:495.15px;height:15.2px;line-height:15.2px;font-size:7.6px;transform:scaleX(0.86);transform-origin:0 50%;color:#000">Position</div>
<div style="left:54px;top:513px;width:6px;height:1px;background:#c4c4c4"></div>
<svg style="position:absolute;left:61px;top:509px;" width="8" height="8" viewBox="0 0 8 8"><path d="M4 1L7 4L4 7L1 4Z" fill="#10e0e0" stroke="#0a4a4a" stroke-width="1"/></svg>
<div class="t" style="left:72.6px;top:505.50px;height:15.2px;line-height:15.2px;font-size:7.6px;transform:scaleX(0.86);transform-origin:0 50%;color:#000">Scale</div>
<div style="left:32px;top:523px;width:6px;height:1px;background:#c4c4c4"></div>
<svg style="position:absolute;left:30px;top:521px;" width="6" height="6" viewBox="0 0 6 6"><rect x="0.5" y="0.5" width="5" height="5" fill="#fff" stroke="#a0a0a0"/><path d="M1.5 3H4.5" stroke="#333" stroke-width="1"/><path d="M3 1.5V4.5" stroke="#333" stroke-width="1"/></svg>
<svg style="position:absolute;left:40px;top:520px;" width="8" height="7" viewBox="0 0 8 7"><ellipse cx="4" cy="3.5" rx="3.2" ry="2.8" fill="#0d5a5a" stroke="#082a2a" stroke-width="0.8"/><circle cx="3" cy="2.5" r="0.8" fill="#5fb0b0"/></svg>
<div class="t" style="left:50.8px;top:515.85px;height:15.2px;line-height:15.2px;font-size:7.6px;transform:scaleX(0.86);transform-origin:0 50%;color:#000">Trigger</div>
<div style="left:32px;top:534px;width:6px;height:1px;background:#c4c4c4"></div>
<svg style="position:absolute;left:30px;top:532px;" width="6" height="6" viewBox="0 0 6 6"><rect x="0.5" y="0.5" width="5" height="5" fill="#fff" stroke="#a0a0a0"/><path d="M1.5 3H4.5" stroke="#333" stroke-width="1"/><path d="M3 1.5V4.5" stroke="#333" stroke-width="1"/></svg>
<svg style="position:absolute;left:40px;top:531px;" width="8" height="7" viewBox="0 0 8 7"><ellipse cx="4" cy="3.5" rx="3.2" ry="2.8" fill="#0d5a5a" stroke="#082a2a" stroke-width="0.8"/><circle cx="3" cy="2.5" r="0.8" fill="#5fb0b0"/></svg>
<div class="t" style="left:50.8px;top:526.20px;height:15.2px;line-height:15.2px;font-size:7.6px;transform:scaleX(0.86);transform-origin:0 50%;color:#000">Measurements</div>
<div style="left:32px;top:544px;width:6px;height:1px;background:#c4c4c4"></div>
<svg style="position:absolute;left:30px;top:542px;" width="6" height="6" viewBox="0 0 6 6"><rect x="0.5" y="0.5" width="5" height="5" fill="#fff" stroke="#a0a0a0"/><path d="M1.5 3H4.5" stroke="#333" stroke-width="1"/></svg>
<svg style="position:absolute;left:40px;top:541px;" width="8" height="7" viewBox="0 0 8 7"><ellipse cx="4" cy="3.5" rx="3.2" ry="2.8" fill="#0d5a5a" stroke="#082a2a" stroke-width="0.8"/><circle cx="3" cy="2.5" r="0.8" fill="#5fb0b0"/></svg>
<div class="t" style="left:50.8px;top:536.55px;height:15.2px;line-height:15.2px;font-size:7.6px;transform:scaleX(0.86);transform-origin:0 50%;color:#000">Functions</div>
<div style="left:43px;top:554px;width:6px;height:1px;background:#c4c4c4"></div>
<svg style="position:absolute;left:50px;top:550px;" width="8" height="8" viewBox="0 0 8 8"><path d="M4 1L7 4L4 7L1 4Z" fill="#10e0e0" stroke="#0a4a4a" stroke-width="1"/></svg>
<div class="t" style="left:61.7px;top:546.90px;height:15.2px;line-height:15.2px;font-size:7.6px;transform:scaleX(0.86);transform-origin:0 50%;color:#000">AutoSet</div>
<div style="left:43px;top:565px;width:6px;height:1px;background:#c4c4c4"></div>
<svg style="position:absolute;left:50px;top:561px;" width="8" height="8" viewBox="0 0 8 8"><path d="M4 1L7 4L4 7L1 4Z" fill="#10e0e0" stroke="#0a4a4a" stroke-width="1"/></svg>
<div class="t" style="left:61.7px;top:557.25px;height:15.2px;line-height:15.2px;font-size:7.6px;transform:scaleX(0.86);transform-origin:0 50%;color:#000">Factory</div>
<div style="left:43px;top:575px;width:6px;height:1px;background:#c4c4c4"></div>
<svg style="position:absolute;left:50px;top:571px;" width="8" height="8" viewBox="0 0 8 8"><path d="M4 1L7 4L4 7L1 4Z" fill="#10e0e0" stroke="#0a4a4a" stroke-width="1"/></svg>
<div class="t" style="left:61.7px;top:567.60px;height:15.2px;line-height:15.2px;font-size:7.6px;transform:scaleX(0.86);transform-origin:0 50%;color:#000">Run</div>
<div style="left:43px;top:586px;width:6px;height:1px;background:#c4c4c4"></div>
<svg style="position:absolute;left:50px;top:582px;" width="8" height="8" viewBox="0 0 8 8"><path d="M4 1L7 4L4 7L1 4Z" fill="#10e0e0" stroke="#0a4a4a" stroke-width="1"/></svg>
<div class="t" style="left:61.7px;top:577.95px;height:15.2px;line-height:15.2px;font-size:7.6px;transform:scaleX(0.86);transform-origin:0 50%;color:#000">Stop</div>
<div style="left:43px;top:596px;width:6px;height:1px;background:#c4c4c4"></div>
<svg style="position:absolute;left:50px;top:592px;" width="8" height="8" viewBox="0 0 8 8"><path d="M4 1L7 4L4 7L1 4Z" fill="#10e0e0" stroke="#0a4a4a" stroke-width="1"/></svg>
<div class="t" style="left:61.7px;top:588.30px;height:15.2px;line-height:15.2px;font-size:7.6px;transform:scaleX(0.86);transform-origin:0 50%;color:#000">Trigger Level 50%</div>
<div style="left:43px;top:606px;width:6px;height:1px;background:#c4c4c4"></div>
<svg style="position:absolute;left:50px;top:602px;" width="8" height="8" viewBox="0 0 8 8"><path d="M4 1L7 4L4 7L1 4Z" fill="#10e0e0" stroke="#0a4a4a" stroke-width="1"/></svg>
<div class="t" style="left:61.7px;top:598.65px;height:15.2px;line-height:15.2px;font-size:7.6px;transform:scaleX(0.86);transform-origin:0 50%;color:#000">Force Trigger</div>
<svg style="position:absolute;left:156px;top:51px;" width="10" height="9" viewBox="0 0 10 9"><rect x="0.5" y="0.5" width="9" height="8" rx="1" fill="#0a3a2a" stroke="#555"/><path d="M1.5 5Q3.5 1.5 5 4.5T8.5 3.5" fill="none" stroke="#40e040" stroke-width="0.9"/></svg>
<div style="left:418.5px;top:50.5px;width:18px;height:10px;background:linear-gradient(#d8e6f4,#c4d6ea);border:1px solid #a4b8cc;border-radius:2px;box-sizing:border-box"></div>
<div style="left:438.0px;top:50.5px;width:18px;height:10px;background:linear-gradient(#d8e6f4,#c4d6ea);border:1px solid #a4b8cc;border-radius:2px;box-sizing:border-box"></div>
<div style="left:457.5px;top:50.5px;width:18px;height:10px;background:linear-gradient(#d8e6f4,#c4d6ea);border:1px solid #a4b8cc;border-radius:2px;box-sizing:border-box"></div>
<svg style="position:absolute;left:423.5px;top:54.5px;" width="8" height="4" viewBox="0 0 8 4"><rect x="0.5" y="0.5" width="6" height="2.5" rx="1" fill="#e8e8e8" stroke="#707070" stroke-width="0.9"/></svg>
<svg style="position:absolute;left:443.0px;top:52.5px;" width="8" height="6" viewBox="0 0 8 6"><rect x="0.5" y="0.5" width="6" height="5" rx="1" fill="#e8e8e8" stroke="#707070" stroke-width="0.9"/><rect x="2" y="2" width="3" height="2" fill="#909090"/></svg>
<svg style="position:absolute;left:462.5px;top:52.0px;" width="8" height="7" viewBox="0 0 8 7"><path d="M1 1L7 6M7 1L1 6" stroke="#888" stroke-width="1.8"/></svg>
<svg style="position:absolute;left:160px;top:64.5px;" width="8" height="9" viewBox="0 0 8 9"><path d="M1.5 1L7 4.5L1.5 8Z" fill="#a8a8a8"/></svg>
<div style="left:174.5px;top:66.5px;width:5.5px;height:5.5px;background:#a00000"></div>
<div style="left:186px;top:64px;width:1px;height:11px;background:#c8c8c8"></div>
<div style="left:187px;top:64px;width:1px;height:11px;background:#fff"></div>
<svg style="position:absolute;left:191px;top:64px;" width="9" height="11" viewBox="0 0 9 11"><path d="M1.5 1L1.5 9L3.5 7L5.5 10L7 9L5 6.5L8 6.5Z" fill="#fff" stroke="#333" stroke-width="0.8"/></svg>
<svg style="position:absolute;left:203px;top:64px;" width="11" height="11" viewBox="0 0 11 11"><path d="M3 10L1.5 6.5Q1 5 2 5L3 6V2Q3 1 4 1.5V5V1Q5 0.5 5.5 1V5V1.5Q6.5 1 7 2V5.5V3Q8 2.5 8.5 3.5V7Q8.5 9 7 10Z" fill="#fff" stroke="#222" stroke-width="0.7"/></svg>
<svg style="position:absolute;left:216px;top:64px;" width="11" height="11" viewBox="0 0 11 11"><rect x="0.5" y="0.5" width="10" height="10" fill="#e0e8f0" stroke="#555"/><circle cx="5.5" cy="5.5" r="3.2" fill="#3080e0" stroke="#1040a0" stroke-width="0.7"/><circle cx="5.5" cy="5.5" r="1.2" fill="#c0a030"/></svg>
<div style="left:229px;top:64px;width:1px;height:11px;background:#c8c8c8"></div>
<div style="left:230px;top:64px;width:1px;height:11px;background:#fff"></div>
<div style="left:233px;top:64px;width:54px;height:12px;background:#fff;border:1px solid #b8b8b8;box-sizing:border-box"></div>
<div class="t" style="left:235px;top:62.00px;height:16px;line-height:16px;font-size:8px;transform:scaleX(0.86);transform-origin:0 50%;color:#000;font-weight:bold">100%</div>
<svg style="position:absolute;left:279px;top:68px;" width="6" height="4" viewBox="0 0 6 4"><path d="M0.5 0.5H5L2.75 3Z" fill="#222"/></svg>
<div style="left:278px;top:75px;width:9px;height:1px;background:#888"></div>
<svg style="position:absolute;left:291px;top:65px;" width="10" height="10" viewBox="0 0 10 10"><circle cx="4" cy="4" r="3.3" fill="#fff" stroke="#333" stroke-width="0.9"/><path d="M6.5 6.5L9.5 9.5" stroke="#2030c0" stroke-width="2"/><path d="M2.2 4H5.8" stroke="#111" stroke-width="1"/><path d="M4 2.2V5.8" stroke="#111" stroke-width="1"/></svg>
<svg style="position:absolute;left:304px;top:65px;" width="10" height="10" viewBox="0 0 10 10"><circle cx="4" cy="4" r="3.3" fill="#fff" stroke="#333" stroke-width="0.9"/><path d="M6.5 6.5L9.5 9.5" stroke="#2030c0" stroke-width="2"/><path d="M2.2 4H5.8" stroke="#111" stroke-width="1"/></svg>
<svg style="position:absolute;left:317px;top:65px;" width="10" height="10" viewBox="0 0 10 10"><circle cx="4" cy="4" r="3.3" fill="#fff" stroke="#333" stroke-width="0.9"/><path d="M6.5 6.5L9.5 9.5" stroke="#2030c0" stroke-width="2"/><circle cx="4" cy="4" r="1.6" fill="#5a5" stroke="#222" stroke-width="0.5"/></svg>
<svg style="position:absolute;left:330px;top:65px;" width="10" height="10" viewBox="0 0 10 10"><circle cx="4" cy="4" r="3.3" fill="#fff" stroke="#333" stroke-width="0.9"/><path d="M6.5 6.5L9.5 9.5" stroke="#2030c0" stroke-width="2"/><path d="M2.5 2.5L5.5 5.5M5.5 2.5L2.5 5.5" stroke="#555" stroke-width="0.9"/></svg>
<div style="left:370px;top:63px;width:1px;height:13px;background:#c8c8c8"></div>
<div style="left:371px;top:63px;width:1px;height:13px;background:#fff"></div>
<div style="left:428px;top:63px;width:1px;height:13px;background:#c8c8c8"></div>
<div style="left:429px;top:63px;width:1px;height:13px;background:#fff"></div>
<div style="left:456px;top:63px;width:1px;height:13px;background:#c8c8c8"></div>
<div style="left:457px;top:63px;width:1px;height:13px;background:#fff"></div>
<div style="left:466px;top:77px;width:10px;height:255px;background:#f0f0f0"></div>
<div style="left:467px;top:88px;width:8px;height:209px;background:#cdcdcd"></div>
<svg style="position:absolute;left:467px;top:80px;" width="8" height="6" viewBox="0 0 8 6"><path d="M1 4.5L4 1.5L7 4.5" fill="none" stroke="#505050" stroke-width="1"/></svg>
<svg style="position:absolute;left:467px;top:325px;" width="8" height="6" viewBox="0 0 8 6"><path d="M1 1.5L4 4.5L7 1.5" fill="none" stroke="#505050" stroke-width="1"/></svg>
<svg style="position:absolute;left:155px;top:77px;" width="311" height="255" viewBox="0 0 311 255"><g transform="translate(-155,-77)"><path d="M191.5 95 V325" stroke="#4a4a4a" stroke-width="1" stroke-dasharray="1 4.75"/><path d="M209.5 95 V325" stroke="#4a4a4a" stroke-width="1" stroke-dasharray="1 4.75"/><path d="M227.5 95 V325" stroke="#4a4a4a" stroke-width="1" stroke-dasharray="1 4.75"/><path d="M245.5 95 V325" stroke="#4a4a4a" stroke-width="1" stroke-dasharray="1 4.75"/><path d="M263.5 95 V325" stroke="#4a4a4a" stroke-width="1" stroke-dasharray="1 4.75"/><path d="M281.5 95 V325" stroke="#4a4a4a" stroke-width="1" stroke-dasharray="1 4.75"/><path d="M299.5 95 V325" stroke="#4a4a4a" stroke-width="1" stroke-dasharray="1 4.75"/><path d="M335.5 95 V325" stroke="#4a4a4a" stroke-width="1" stroke-dasharray="1 4.75"/><path d="M353.5 95 V325" stroke="#4a4a4a" stroke-width="1" stroke-dasharray="1 4.75"/><path d="M371.5 95 V325" stroke="#4a4a4a" stroke-width="1" stroke-dasharray="1 4.75"/><path d="M389.5 95 V325" stroke="#4a4a4a" stroke-width="1" stroke-dasharray="1 4.75"/><path d="M407.5 95 V325" stroke="#4a4a4a" stroke-width="1" stroke-dasharray="1 4.75"/><path d="M425.5 95 V325" stroke="#4a4a4a" stroke-width="1" stroke-dasharray="1 4.75"/><path d="M443.5 95 V325" stroke="#4a4a4a" stroke-width="1" stroke-dasharray="1 4.75"/><path d="M173 123.75 H461" stroke="#4a4a4a" stroke-width="1" stroke-dasharray="1 2.6"/><path d="M173 152.50 H461" stroke="#4a4a4a" stroke-width="1" stroke-dasharray="1 2.6"/><path d="M173 181.25 H461" stroke="#4a4a4a" stroke-width="1" stroke-dasharray="1 2.6"/><path d="M173 238.75 H461" stroke="#4a4a4a" stroke-width="1" stroke-dasharray="1 2.6"/><path d="M173 267.50 H461" stroke="#4a4a4a" stroke-width="1" stroke-dasharray="1 2.6"/><path d="M173 296.25 H461" stroke="#4a4a4a" stroke-width="1" stroke-dasharray="1 2.6"/><path d="M173 210 H461" stroke="#a8a8a8" stroke-width="1"/><path d="M317.5 95 V325" stroke="#8a8a8a" stroke-width="0.9"/><path d="M173.00 205.5 V214.5" stroke="#a8a8a8" stroke-width="0.8"/><path d="M173.00 95 V102.5" stroke="#a0a0a0" stroke-width="0.8"/><path d="M173.00 325 V317.5" stroke="#a0a0a0" stroke-width="0.8"/><path d="M176.60 208.2 V211.8" stroke="#a8a8a8" stroke-width="0.8"/><path d="M176.60 95 V99.5" stroke="#a0a0a0" stroke-width="0.8"/><path d="M176.60 325 V320.5" stroke="#a0a0a0" stroke-width="0.8"/><path d="M180.20 208.2 V211.8" stroke="#a8a8a8" stroke-width="0.8"/><path d="M180.20 95 V99.5" stroke="#a0a0a0" stroke-width="0.8"/><path d="M180.20 325 V320.5" stroke="#a0a0a0" stroke-width="0.8"/><path d="M183.80 208.2 V211.8" stroke="#a8a8a8" stroke-width="0.8"/><path d="M183.80 95 V99.5" stroke="#a0a0a0" stroke-width="0.8"/><path d="M183.80 325 V320.5" stroke="#a0a0a0" stroke-width="0.8"/><path d="M187.40 208.2 V211.8" stroke="#a8a8a8" stroke-width="0.8"/><path d="M187.40 95 V99.5" stroke="#a0a0a0" stroke-width="0.8"/><path d="M187.40 325 V320.5" stroke="#a0a0a0" stroke-width="0.8"/><path d="M191.00 205.5 V214.5" stroke="#a8a8a8" stroke-width="0.8"/><path d="M191.00 95 V102.5" stroke="#a0a0a0" stroke-width="0.8"/><path d="M191.00 325 V317.5" stroke="#a0a0a0" stroke-width="0.8"/><path d="M194.60 208.2 V211.8" stroke="#a8a8a8" stroke-width="0.8"/><path d="M194.60 95 V99.5" stroke="#a0a0a0" stroke-width="0.8"/><path d="M194.60 325 V320.5" stroke="#a0a0a0" stroke-width="0.8"/><path d="M198.20 208.2 V211.8" stroke="#a8a8a8" stroke-width="0.8"/><path d="M198.20 95 V99.5" stroke="#a0a0a0" stroke-width="0.8"/><path d="M198.20 325 V320.5" stroke="#a0a0a0" stroke-width="0.8"/><path d="M201.80 208.2 V211.8" stroke="#a8a8a8" stroke-width="0.8"/><path d="M201.80 95 V99.5" stroke="#a0a0a0" stroke-width="0.8"/><path d="M201.80 325 V320.5" stroke="#a0a0a0" stroke-width="0.8"/><path d="M205.40 208.2 V211.8" stroke="#a8a8a8" stroke-width="0.8"/><path d="M205.40 95 V99.5" stroke="#a0a0a0" stroke-width="0.8"/><path d="M205.40 325 V320.5" stroke="#a0a0a0" stroke-width="0.8"/><path d="M209.00 205.5 V214.5" stroke="#a8a8a8" stroke-width="0.8"/><path d="M209.00 95 V102.5" stroke="#a0a0a0" stroke-width="0.8"/><path d="M209.00 325 V317.5" stroke="#a0a0a0" stroke-width="0.8"/><path d="M212.60 208.2 V211.8" stroke="#a8a8a8" stroke-width="0.8"/><path d="M212.60 95 V99.5" stroke="#a0a0a0" stroke-width="0.8"/><path d="M212.60 325 V320.5" stroke="#a0a0a0" stroke-width="0.8"/><path d="M216.20 208.2 V211.8" stroke="#a8a8a8" stroke-width="0.8"/><path d="M216.20 95 V99.5" stroke="#a0a0a0" stroke-width="0.8"/><path d="M216.20 325 V320.5" stroke="#a0a0a0" stroke-width="0.8"/><path d="M219.80 208.2 V211.8" stroke="#a8a8a8" stroke-width="0.8"/><path d="M219.80 95 V99.5" stroke="#a0a0a0" stroke-width="0.8"/><path d="M219.80 325 V320.5" stroke="#a0a0a0" stroke-width="0.8"/><path d="M223.40 208.2 V211.8" stroke="#a8a8a8" stroke-width="0.8"/><path d="M223.40 95 V99.5" stroke="#a0a0a0" stroke-width="0.8"/><path d="M223.40 325 V320.5" stroke="#a0a0a0" stroke-width="0.8"/><path d="M227.00 205.5 V214.5" stroke="#a8a8a8" stroke-width="0.8"/><path d="M227.00 95 V102.5" stroke="#a0a0a0" stroke-width="0.8"/><path d="M227.00 325 V317.5" stroke="#a0a0a0" stroke-width="0.8"/><path d="M230.60 208.2 V211.8" stroke="#a8a8a8" stroke-width="0.8"/><path d="M230.60 95 V99.5" stroke="#a0a0a0" stroke-width="0.8"/><path d="M230.60 325 V320.5" stroke="#a0a0a0" stroke-width="0.8"/><path d="M234.20 208.2 V211.8" stroke="#a8a8a8" stroke-width="0.8"/><path d="M234.20 95 V99.5" stroke="#a0a0a0" stroke-width="0.8"/><path d="M234.20 325 V320.5" stroke="#a0a0a0" stroke-width="0.8"/><path d="M237.80 208.2 V211.8" stroke="#a8a8a8" stroke-width="0.8"/><path d="M237.80 95 V99.5" stroke="#a0a0a0" stroke-width="0.8"/><path d="M237.80 325 V320.5" stroke="#a0a0a0" stroke-width="0.8"/><path d="M241.40 208.2 V211.8" stroke="#a8a8a8" stroke-width="0.8"/><path d="M241.40 95 V99.5" stroke="#a0a0a0" stroke-width="0.8"/><path d="M241.40 325 V320.5" stroke="#a0a0a0" stroke-width="0.8"/><path d="M245.00 205.5 V214.5" stroke="#a8a8a8" stroke-width="0.8"/><path d="M245.00 95 V102.5" stroke="#a0a0a0" stroke-width="0.8"/><path d="M245.00 325 V317.5" stroke="#a0a0a0" stroke-width="0.8"/><path d="M248.60 208.2 V211.8" stroke="#a8a8a8" stroke-width="0.8"/><path d="M248.60 95 V99.5" stroke="#a0a0a0" stroke-width="0.8"/><path d="M248.60 325 V320.5" stroke="#a0a0a0" stroke-width="0.8"/><path d="M252.20 208.2 V211.8" stroke="#a8a8a8" stroke-width="0.8"/><path d="M252.20 95 V99.5" stroke="#a0a0a0" stroke-width="0.8"/><path d="M252.20 325 V320.5" stroke="#a0a0a0" stroke-width="0.8"/><path d="M255.80 208.2 V211.8" stroke="#a8a8a8" stroke-width="0.8"/><path d="M255.80 95 V99.5" stroke="#a0a0a0" stroke-width="0.8"/><path d="M255.80 325 V320.5" stroke="#a0a0a0" stroke-width="0.8"/><path d="M259.40 208.2 V211.8" stroke="#a8a8a8" stroke-width="0.8"/><path d="M259.40 95 V99.5" stroke="#a0a0a0" stroke-width="0.8"/><path d="M259.40 325 V320.5" stroke="#a0a0a0" stroke-width="0.8"/><path d="M263.00 205.5 V214.5" stroke="#a8a8a8" stroke-width="0.8"/><path d="M263.00 95 V102.5" stroke="#a0a0a0" stroke-width="0.8"/><path d="M263.00 325 V317.5" stroke="#a0a0a0" stroke-width="0.8"/><path d="M266.60 208.2 V211.8" stroke="#a8a8a8" stroke-width="0.8"/><path d="M266.60 95 V99.5" stroke="#a0a0a0" stroke-width="0.8"/><path d="M266.60 325 V320.5" stroke="#a0a0a0" stroke-width="0.8"/><path d="M270.20 208.2 V211.8" stroke="#a8a8a8" stroke-width="0.8"/><path d="M270.20 95 V99.5" stroke="#a0a0a0" stroke-width="0.8"/><path d="M270.20 325 V320.5" stroke="#a0a0a0" stroke-width="0.8"/><path d="M273.80 208.2 V211.8" stroke="#a8a8a8" stroke-width="0.8"/><path d="M273.80 95 V99.5" stroke="#a0a0a0" stroke-width="0.8"/><path d="M273.80 325 V320.5" stroke="#a0a0a0" stroke-width="0.8"/><path d="M277.40 208.2 V211.8" stroke="#a8a8a8" stroke-width="0.8"/><path d="M277.40 95 V99.5" stroke="#a0a0a0" stroke-width="0.8"/><path d="M277.40 325 V320.5" stroke="#a0a0a0" stroke-width="0.8"/><path d="M281.00 205.5 V214.5" stroke="#a8a8a8" stroke-width="0.8"/><path d="M281.00 95 V102.5" stroke="#a0a0a0" stroke-width="0.8"/><path d="M281.00 325 V317.5" stroke="#a0a0a0" stroke-width="0.8"/><path d="M284.60 208.2 V211.8" stroke="#a8a8a8" stroke-width="0.8"/><path d="M284.60 95 V99.5" stroke="#a0a0a0" stroke-width="0.8"/><path d="M284.60 325 V320.5" stroke="#a0a0a0" stroke-width="0.8"/><path d="M288.20 208.2 V211.8" stroke="#a8a8a8" stroke-width="0.8"/><path d="M288.20 95 V99.5" stroke="#a0a0a0" stroke-width="0.8"/><path d="M288.20 325 V320.5" stroke="#a0a0a0" stroke-width="0.8"/><path d="M291.80 208.2 V211.8" stroke="#a8a8a8" stroke-width="0.8"/><path d="M291.80 95 V99.5" stroke="#a0a0a0" stroke-width="0.8"/><path d="M291.80 325 V320.5" stroke="#a0a0a0" stroke-width="0.8"/><path d="M295.40 208.2 V211.8" stroke="#a8a8a8" stroke-width="0.8"/><path d="M295.40 95 V99.5" stroke="#a0a0a0" stroke-width="0.8"/><path d="M295.40 325 V320.5" stroke="#a0a0a0" stroke-width="0.8"/><path d="M299.00 205.5 V214.5" stroke="#a8a8a8" stroke-width="0.8"/><path d="M299.00 95 V102.5" stroke="#a0a0a0" stroke-width="0.8"/><path d="M299.00 325 V317.5" stroke="#a0a0a0" stroke-width="0.8"/><path d="M302.60 208.2 V211.8" stroke="#a8a8a8" stroke-width="0.8"/><path d="M302.60 95 V99.5" stroke="#a0a0a0" stroke-width="0.8"/><path d="M302.60 325 V320.5" stroke="#a0a0a0" stroke-width="0.8"/><path d="M306.20 208.2 V211.8" stroke="#a8a8a8" stroke-width="0.8"/><path d="M306.20 95 V99.5" stroke="#a0a0a0" stroke-width="0.8"/><path d="M306.20 325 V320.5" stroke="#a0a0a0" stroke-width="0.8"/><path d="M309.80 208.2 V211.8" stroke="#a8a8a8" stroke-width="0.8"/><path d="M309.80 95 V99.5" stroke="#a0a0a0" stroke-width="0.8"/><path d="M309.80 325 V320.5" stroke="#a0a0a0" stroke-width="0.8"/><path d="M313.40 208.2 V211.8" stroke="#a8a8a8" stroke-width="0.8"/><path d="M313.40 95 V99.5" stroke="#a0a0a0" stroke-width="0.8"/><path d="M313.40 325 V320.5" stroke="#a0a0a0" stroke-width="0.8"/><path d="M317.00 205.5 V214.5" stroke="#a8a8a8" stroke-width="0.8"/><path d="M317.00 95 V102.5" stroke="#a0a0a0" stroke-width="0.8"/><path d="M317.00 325 V317.5" stroke="#a0a0a0" stroke-width="0.8"/><path d="M320.60 208.2 V211.8" stroke="#a8a8a8" stroke-width="0.8"/><path d="M320.60 95 V99.5" stroke="#a0a0a0" stroke-width="0.8"/><path d="M320.60 325 V320.5" stroke="#a0a0a0" stroke-width="0.8"/><path d="M324.20 208.2 V211.8" stroke="#a8a8a8" stroke-width="0.8"/><path d="M324.20 95 V99.5" stroke="#a0a0a0" stroke-width="0.8"/><path d="M324.20 325 V320.5" stroke="#a0a0a0" stroke-width="0.8"/><path d="M327.80 208.2 V211.8" stroke="#a8a8a8" stroke-width="0.8"/><path d="M327.80 95 V99.5" stroke="#a0a0a0" stroke-width="0.8"/><path d="M327.80 325 V320.5" stroke="#a0a0a0" stroke-width="0.8"/><path d="M331.40 208.2 V211.8" stroke="#a8a8a8" stroke-width="0.8"/><path d="M331.40 95 V99.5" stroke="#a0a0a0" stroke-width="0.8"/><path d="M331.40 325 V320.5" stroke="#a0a0a0" stroke-width="0.8"/><path d="M335.00 205.5 V214.5" stroke="#a8a8a8" stroke-width="0.8"/><path d="M335.00 95 V102.5" stroke="#a0a0a0" stroke-width="0.8"/><path d="M335.00 325 V317.5" stroke="#a0a0a0" stroke-width="0.8"/><path d="M338.60 208.2 V211.8" stroke="#a8a8a8" stroke-width="0.8"/><path d="M338.60 95 V99.5" stroke="#a0a0a0" stroke-width="0.8"/><path d="M338.60 325 V320.5" stroke="#a0a0a0" stroke-width="0.8"/><path d="M342.20 208.2 V211.8" stroke="#a8a8a8" stroke-width="0.8"/><path d="M342.20 95 V99.5" stroke="#a0a0a0" stroke-width="0.8"/><path d="M342.20 325 V320.5" stroke="#a0a0a0" stroke-width="0.8"/><path d="M345.80 208.2 V211.8" stroke="#a8a8a8" stroke-width="0.8"/><path d="M345.80 95 V99.5" stroke="#a0a0a0" stroke-width="0.8"/><path d="M345.80 325 V320.5" stroke="#a0a0a0" stroke-width="0.8"/><path d="M349.40 208.2 V211.8" stroke="#a8a8a8" stroke-width="0.8"/><path d="M349.40 95 V99.5" stroke="#a0a0a0" stroke-width="0.8"/><path d="M349.40 325 V320.5" stroke="#a0a0a0" stroke-width="0.8"/><path d="M353.00 205.5 V214.5" stroke="#a8a8a8" stroke-width="0.8"/><path d="M353.00 95 V102.5" stroke="#a0a0a0" stroke-width="0.8"/><path d="M353.00 325 V317.5" stroke="#a0a0a0" stroke-width="0.8"/><path d="M356.60 208.2 V211.8" stroke="#a8a8a8" stroke-width="0.8"/><path d="M356.60 95 V99.5" stroke="#a0a0a0" stroke-width="0.8"/><path d="M356.60 325 V320.5" stroke="#a0a0a0" stroke-width="0.8"/><path d="M360.20 208.2 V211.8" stroke="#a8a8a8" stroke-width="0.8"/><path d="M360.20 95 V99.5" stroke="#a0a0a0" stroke-width="0.8"/><path d="M360.20 325 V320.5" stroke="#a0a0a0" stroke-width="0.8"/><path d="M363.80 208.2 V211.8" stroke="#a8a8a8" stroke-width="0.8"/><path d="M363.80 95 V99.5" stroke="#a0a0a0" stroke-width="0.8"/><path d="M363.80 325 V320.5" stroke="#a0a0a0" stroke-width="0.8"/><path d="M367.40 208.2 V211.8" stroke="#a8a8a8" stroke-width="0.8"/><path d="M367.40 95 V99.5" stroke="#a0a0a0" stroke-width="0.8"/><path d="M367.40 325 V320.5" stroke="#a0a0a0" stroke-width="0.8"/><path d="M371.00 205.5 V214.5" stroke="#a8a8a8" stroke-width="0.8"/><path d="M371.00 95 V102.5" stroke="#a0a0a0" stroke-width="0.8"/><path d="M371.00 325 V317.5" stroke="#a0a0a0" stroke-width="0.8"/><path d="M374.60 208.2 V211.8" stroke="#a8a8a8" stroke-width="0.8"/><path d="M374.60 95 V99.5" stroke="#a0a0a0" stroke-width="0.8"/><path d="M374.60 325 V320.5" stroke="#a0a0a0" stroke-width="0.8"/><path d="M378.20 208.2 V211.8" stroke="#a8a8a8" stroke-width="0.8"/><path d="M378.20 95 V99.5" stroke="#a0a0a0" stroke-width="0.8"/><path d="M378.20 325 V320.5" stroke="#a0a0a0" stroke-width="0.8"/><path d="M381.80 208.2 V211.8" stroke="#a8a8a8" stroke-width="0.8"/><path d="M381.80 95 V99.5" stroke="#a0a0a0" stroke-width="0.8"/><path d="M381.80 325 V320.5" stroke="#a0a0a0" stroke-width="0.8"/><path d="M385.40 208.2 V211.8" stroke="#a8a8a8" stroke-width="0.8"/><path d="M385.40 95 V99.5" stroke="#a0a0a0" stroke-width="0.8"/><path d="M385.40 325 V320.5" stroke="#a0a0a0" stroke-width="0.8"/><path d="M389.00 205.5 V214.5" stroke="#a8a8a8" stroke-width="0.8"/><path d="M389.00 95 V102.5" stroke="#a0a0a0" stroke-width="0.8"/><path d="M389.00 325 V317.5" stroke="#a0a0a0" stroke-width="0.8"/><path d="M392.60 208.2 V211.8" stroke="#a8a8a8" stroke-width="0.8"/><path d="M392.60 95 V99.5" stroke="#a0a0a0" stroke-width="0.8"/><path d="M392.60 325 V320.5" stroke="#a0a0a0" stroke-width="0.8"/><path d="M396.20 208.2 V211.8" stroke="#a8a8a8" stroke-width="0.8"/><path d="M396.20 95 V99.5" stroke="#a0a0a0" stroke-width="0.8"/><path d="M396.20 325 V320.5" stroke="#a0a0a0" stroke-width="0.8"/><path d="M399.80 208.2 V211.8" stroke="#a8a8a8" stroke-width="0.8"/><path d="M399.80 95 V99.5" stroke="#a0a0a0" stroke-width="0.8"/><path d="M399.80 325 V320.5" stroke="#a0a0a0" stroke-width="0.8"/><path d="M403.40 208.2 V211.8" stroke="#a8a8a8" stroke-width="0.8"/><path d="M403.40 95 V99.5" stroke="#a0a0a0" stroke-width="0.8"/><path d="M403.40 325 V320.5" stroke="#a0a0a0" stroke-width="0.8"/><path d="M407.00 205.5 V214.5" stroke="#a8a8a8" stroke-width="0.8"/><path d="M407.00 95 V102.5" stroke="#a0a0a0" stroke-width="0.8"/><path d="M407.00 325 V317.5" stroke="#a0a0a0" stroke-width="0.8"/><path d="M410.60 208.2 V211.8" stroke="#a8a8a8" stroke-width="0.8"/><path d="M410.60 95 V99.5" stroke="#a0a0a0" stroke-width="0.8"/><path d="M410.60 325 V320.5" stroke="#a0a0a0" stroke-width="0.8"/><path d="M414.20 208.2 V211.8" stroke="#a8a8a8" stroke-width="0.8"/><path d="M414.20 95 V99.5" stroke="#a0a0a0" stroke-width="0.8"/><path d="M414.20 325 V320.5" stroke="#a0a0a0" stroke-width="0.8"/><path d="M417.80 208.2 V211.8" stroke="#a8a8a8" stroke-width="0.8"/><path d="M417.80 95 V99.5" stroke="#a0a0a0" stroke-width="0.8"/><path d="M417.80 325 V320.5" stroke="#a0a0a0" stroke-width="0.8"/><path d="M421.40 208.2 V211.8" stroke="#a8a8a8" stroke-width="0.8"/><path d="M421.40 95 V99.5" stroke="#a0a0a0" stroke-width="0.8"/><path d="M421.40 325 V320.5" stroke="#a0a0a0" stroke-width="0.8"/><path d="M425.00 205.5 V214.5" stroke="#a8a8a8" stroke-width="0.8"/><path d="M425.00 95 V102.5" stroke="#a0a0a0" stroke-width="0.8"/><path d="M425.00 325 V317.5" stroke="#a0a0a0" stroke-width="0.8"/><path d="M428.60 208.2 V211.8" stroke="#a8a8a8" stroke-width="0.8"/><path d="M428.60 95 V99.5" stroke="#a0a0a0" stroke-width="0.8"/><path d="M428.60 325 V320.5" stroke="#a0a0a0" stroke-width="0.8"/><path d="M432.20 208.2 V211.8" stroke="#a8a8a8" stroke-width="0.8"/><path d="M432.20 95 V99.5" stroke="#a0a0a0" stroke-width="0.8"/><path d="M432.20 325 V320.5" stroke="#a0a0a0" stroke-width="0.8"/><path d="M435.80 208.2 V211.8" stroke="#a8a8a8" stroke-width="0.8"/><path d="M435.80 95 V99.5" stroke="#a0a0a0" stroke-width="0.8"/><path d="M435.80 325 V320.5" stroke="#a0a0a0" stroke-width="0.8"/><path d="M439.40 208.2 V211.8" stroke="#a8a8a8" stroke-width="0.8"/><path d="M439.40 95 V99.5" stroke="#a0a0a0" stroke-width="0.8"/><path d="M439.40 325 V320.5" stroke="#a0a0a0" stroke-width="0.8"/><path d="M443.00 205.5 V214.5" stroke="#a8a8a8" stroke-width="0.8"/><path d="M443.00 95 V102.5" stroke="#a0a0a0" stroke-width="0.8"/><path d="M443.00 325 V317.5" stroke="#a0a0a0" stroke-width="0.8"/><path d="M446.60 208.2 V211.8" stroke="#a8a8a8" stroke-width="0.8"/><path d="M446.60 95 V99.5" stroke="#a0a0a0" stroke-width="0.8"/><path d="M446.60 325 V320.5" stroke="#a0a0a0" stroke-width="0.8"/><path d="M450.20 208.2 V211.8" stroke="#a8a8a8" stroke-width="0.8"/><path d="M450.20 95 V99.5" stroke="#a0a0a0" stroke-width="0.8"/><path d="M450.20 325 V320.5" stroke="#a0a0a0" stroke-width="0.8"/><path d="M453.80 208.2 V211.8" stroke="#a8a8a8" stroke-width="0.8"/><path d="M453.80 95 V99.5" stroke="#a0a0a0" stroke-width="0.8"/><path d="M453.80 325 V320.5" stroke="#a0a0a0" stroke-width="0.8"/><path d="M457.40 208.2 V211.8" stroke="#a8a8a8" stroke-width="0.8"/><path d="M457.40 95 V99.5" stroke="#a0a0a0" stroke-width="0.8"/><path d="M457.40 325 V320.5" stroke="#a0a0a0" stroke-width="0.8"/><path d="M461.00 205.5 V214.5" stroke="#a8a8a8" stroke-width="0.8"/><path d="M461.00 95 V102.5" stroke="#a0a0a0" stroke-width="0.8"/><path d="M461.00 325 V317.5" stroke="#a0a0a0" stroke-width="0.8"/><path d="M173 95.00 H176.2" stroke="#a0a0a0" stroke-width="0.8"/><path d="M461 95.00 H457.8" stroke="#a0a0a0" stroke-width="0.8"/><path d="M314.3 95.00 H320.7" stroke="#a0a0a0" stroke-width="0.6"/><path d="M173 100.75 H175" stroke="#a0a0a0" stroke-width="0.8"/><path d="M461 100.75 H459" stroke="#a0a0a0" stroke-width="0.8"/><path d="M315.5 100.75 H319.5" stroke="#a0a0a0" stroke-width="0.6"/><path d="M173 106.50 H175" stroke="#a0a0a0" stroke-width="0.8"/><path d="M461 106.50 H459" stroke="#a0a0a0" stroke-width="0.8"/><path d="M315.5 106.50 H319.5" stroke="#a0a0a0" stroke-width="0.6"/><path d="M173 112.25 H175" stroke="#a0a0a0" stroke-width="0.8"/><path d="M461 112.25 H459" stroke="#a0a0a0" stroke-width="0.8"/><path d="M315.5 112.25 H319.5" stroke="#a0a0a0" stroke-width="0.6"/><path d="M173 118.00 H175" stroke="#a0a0a0" stroke-width="0.8"/><path d="M461 118.00 H459" stroke="#a0a0a0" stroke-width="0.8"/><path d="M315.5 118.00 H319.5" stroke="#a0a0a0" stroke-width="0.6"/><path d="M173 123.75 H176.2" stroke="#a0a0a0" stroke-width="0.8"/><path d="M461 123.75 H457.8" stroke="#a0a0a0" stroke-width="0.8"/><path d="M314.3 123.75 H320.7" stroke="#a0a0a0" stroke-width="0.6"/><path d="M173 129.50 H175" stroke="#a0a0a0" stroke-width="0.8"/><path d="M461 129.50 H459" stroke="#a0a0a0" stroke-width="0.8"/><path d="M315.5 129.50 H319.5" stroke="#a0a0a0" stroke-width="0.6"/><path d="M173 135.25 H175" stroke="#a0a0a0" stroke-width="0.8"/><path d="M461 135.25 H459" stroke="#a0a0a0" stroke-width="0.8"/><path d="M315.5 135.25 H319.5" stroke="#a0a0a0" stroke-width="0.6"/><path d="M173 141.00 H175" stroke="#a0a0a0" stroke-width="0.8"/><path d="M461 141.00 H459" stroke="#a0a0a0" stroke-width="0.8"/><path d="M315.5 141.00 H319.5" stroke="#a0a0a0" stroke-width="0.6"/><path d="M173 146.75 H175" stroke="#a0a0a0" stroke-width="0.8"/><path d="M461 146.75 H459" stroke="#a0a0a0" stroke-width="0.8"/><path d="M315.5 146.75 H319.5" stroke="#a0a0a0" stroke-width="0.6"/><path d="M173 152.50 H176.2" stroke="#a0a0a0" stroke-width="0.8"/><path d="M461 152.50 H457.8" stroke="#a0a0a0" stroke-width="0.8"/><path d="M314.3 152.50 H320.7" stroke="#a0a0a0" stroke-width="0.6"/><path d="M173 158.25 H175" stroke="#a0a0a0" stroke-width="0.8"/><path d="M461 158.25 H459" stroke="#a0a0a0" stroke-width="0.8"/><path d="M315.5 158.25 H319.5" stroke="#a0a0a0" stroke-width="0.6"/><path d="M173 164.00 H175" stroke="#a0a0a0" stroke-width="0.8"/><path d="M461 164.00 H459" stroke="#a0a0a0" stroke-width="0.8"/><path d="M315.5 164.00 H319.5" stroke="#a0a0a0" stroke-width="0.6"/><path d="M173 169.75 H175" stroke="#a0a0a0" stroke-width="0.8"/><path d="M461 169.75 H459" stroke="#a0a0a0" stroke-width="0.8"/><path d="M315.5 169.75 H319.5" stroke="#a0a0a0" stroke-width="0.6"/><path d="M173 175.50 H175" stroke="#a0a0a0" stroke-width="0.8"/><path d="M461 175.50 H459" stroke="#a0a0a0" stroke-width="0.8"/><path d="M315.5 175.50 H319.5" stroke="#a0a0a0" stroke-width="0.6"/><path d="M173 181.25 H176.2" stroke="#a0a0a0" stroke-width="0.8"/><path d="M461 181.25 H457.8" stroke="#a0a0a0" stroke-width="0.8"/><path d="M314.3 181.25 H320.7" stroke="#a0a0a0" stroke-width="0.6"/><path d="M173 187.00 H175" stroke="#a0a0a0" stroke-width="0.8"/><path d="M461 187.00 H459" stroke="#a0a0a0" stroke-width="0.8"/><path d="M315.5 187.00 H319.5" stroke="#a0a0a0" stroke-width="0.6"/><path d="M173 192.75 H175" stroke="#a0a0a0" stroke-width="0.8"/><path d="M461 192.75 H459" stroke="#a0a0a0" stroke-width="0.8"/><path d="M315.5 192.75 H319.5" stroke="#a0a0a0" stroke-width="0.6"/><path d="M173 198.50 H175" stroke="#a0a0a0" stroke-width="0.8"/><path d="M461 198.50 H459" stroke="#a0a0a0" stroke-width="0.8"/><path d="M315.5 198.50 H319.5" stroke="#a0a0a0" stroke-width="0.6"/><path d="M173 204.25 H175" stroke="#a0a0a0" stroke-width="0.8"/><path d="M461 204.25 H459" stroke="#a0a0a0" stroke-width="0.8"/><path d="M315.5 204.25 H319.5" stroke="#a0a0a0" stroke-width="0.6"/><path d="M173 210.00 H176.2" stroke="#a0a0a0" stroke-width="0.8"/><path d="M461 210.00 H457.8" stroke="#a0a0a0" stroke-width="0.8"/><path d="M314.3 210.00 H320.7" stroke="#a0a0a0" stroke-width="0.6"/><path d="M173 215.75 H175" stroke="#a0a0a0" stroke-width="0.8"/><path d="M461 215.75 H459" stroke="#a0a0a0" stroke-width="0.8"/><path d="M315.5 215.75 H319.5" stroke="#a0a0a0" stroke-width="0.6"/><path d="M173 221.50 H175" stroke="#a0a0a0" stroke-width="0.8"/><path d="M461 221.50 H459" stroke="#a0a0a0" stroke-width="0.8"/><path d="M315.5 221.50 H319.5" stroke="#a0a0a0" stroke-width="0.6"/><path d="M173 227.25 H175" stroke="#a0a0a0" stroke-width="0.8"/><path d="M461 227.25 H459" stroke="#a0a0a0" stroke-width="0.8"/><path d="M315.5 227.25 H319.5" stroke="#a0a0a0" stroke-width="0.6"/><path d="M173 233.00 H175" stroke="#a0a0a0" stroke-width="0.8"/><path d="M461 233.00 H459" stroke="#a0a0a0" stroke-width="0.8"/><path d="M315.5 233.00 H319.5" stroke="#a0a0a0" stroke-width="0.6"/><path d="M173 238.75 H176.2" stroke="#a0a0a0" stroke-width="0.8"/><path d="M461 238.75 H457.8" stroke="#a0a0a0" stroke-width="0.8"/><path d="M314.3 238.75 H320.7" stroke="#a0a0a0" stroke-width="0.6"/><path d="M173 244.50 H175" stroke="#a0a0a0" stroke-width="0.8"/><path d="M461 244.50 H459" stroke="#a0a0a0" stroke-width="0.8"/><path d="M315.5 244.50 H319.5" stroke="#a0a0a0" stroke-width="0.6"/><path d="M173 250.25 H175" stroke="#a0a0a0" stroke-width="0.8"/><path d="M461 250.25 H459" stroke="#a0a0a0" stroke-width="0.8"/><path d="M315.5 250.25 H319.5" stroke="#a0a0a0" stroke-width="0.6"/><path d="M173 256.00 H175" stroke="#a0a0a0" stroke-width="0.8"/><path d="M461 256.00 H459" stroke="#a0a0a0" stroke-width="0.8"/><path d="M315.5 256.00 H319.5" stroke="#a0a0a0" stroke-width="0.6"/><path d="M173 261.75 H175" stroke="#a0a0a0" stroke-width="0.8"/><path d="M461 261.75 H459" stroke="#a0a0a0" stroke-width="0.8"/><path d="M315.5 261.75 H319.5" stroke="#a0a0a0" stroke-width="0.6"/><path d="M173 267.50 H176.2" stroke="#a0a0a0" stroke-width="0.8"/><path d="M461 267.50 H457.8" stroke="#a0a0a0" stroke-width="0.8"/><path d="M314.3 267.50 H320.7" stroke="#a0a0a0" stroke-width="0.6"/><path d="M173 273.25 H175" stroke="#a0a0a0" stroke-width="0.8"/><path d="M461 273.25 H459" stroke="#a0a0a0" stroke-width="0.8"/><path d="M315.5 273.25 H319.5" stroke="#a0a0a0" stroke-width="0.6"/><path d="M173 279.00 H175" stroke="#a0a0a0" stroke-width="0.8"/><path d="M461 279.00 H459" stroke="#a0a0a0" stroke-width="0.8"/><path d="M315.5 279.00 H319.5" stroke="#a0a0a0" stroke-width="0.6"/><path d="M173 284.75 H175" stroke="#a0a0a0" stroke-width="0.8"/><path d="M461 284.75 H459" stroke="#a0a0a0" stroke-width="0.8"/><path d="M315.5 284.75 H319.5" stroke="#a0a0a0" stroke-width="0.6"/><path d="M173 290.50 H175" stroke="#a0a0a0" stroke-width="0.8"/><path d="M461 290.50 H459" stroke="#a0a0a0" stroke-width="0.8"/><path d="M315.5 290.50 H319.5" stroke="#a0a0a0" stroke-width="0.6"/><path d="M173 296.25 H176.2" stroke="#a0a0a0" stroke-width="0.8"/><path d="M461 296.25 H457.8" stroke="#a0a0a0" stroke-width="0.8"/><path d="M314.3 296.25 H320.7" stroke="#a0a0a0" stroke-width="0.6"/><path d="M173 302.00 H175" stroke="#a0a0a0" stroke-width="0.8"/><path d="M461 302.00 H459" stroke="#a0a0a0" stroke-width="0.8"/><path d="M315.5 302.00 H319.5" stroke="#a0a0a0" stroke-width="0.6"/><path d="M173 307.75 H175" stroke="#a0a0a0" stroke-width="0.8"/><path d="M461 307.75 H459" stroke="#a0a0a0" stroke-width="0.8"/><path d="M315.5 307.75 H319.5" stroke="#a0a0a0" stroke-width="0.6"/><path d="M173 313.50 H175" stroke="#a0a0a0" stroke-width="0.8"/><path d="M461 313.50 H459" stroke="#a0a0a0" stroke-width="0.8"/><path d="M315.5 313.50 H319.5" stroke="#a0a0a0" stroke-width="0.6"/><path d="M173 319.25 H175" stroke="#a0a0a0" stroke-width="0.8"/><path d="M461 319.25 H459" stroke="#a0a0a0" stroke-width="0.8"/><path d="M315.5 319.25 H319.5" stroke="#a0a0a0" stroke-width="0.6"/><path d="M173 325.00 H176.2" stroke="#a0a0a0" stroke-width="0.8"/><path d="M461 325.00 H457.8" stroke="#a0a0a0" stroke-width="0.8"/><path d="M314.3 325.00 H320.7" stroke="#a0a0a0" stroke-width="0.6"/><rect x="173" y="95" width="288" height="230" fill="none" stroke="#808080" stroke-width="0.8"/><polyline points="173.0,137.9 173.5,133.6 174.0,122.4 174.5,127.9 175.0,133.3 175.5,144.5 176.0,145.4 176.5,143.7 177.0,153.2 177.5,165.2 178.0,162.7 178.5,166.6 179.0,155.8 179.5,147.1 180.0,150.8 180.5,147.9 181.0,144.4 181.5,148.5 182.0,144.0 182.5,150.9 183.0,164.8 183.5,166.6 184.0,163.0 184.5,165.9 185.0,175.9 185.5,171.0 186.0,168.4 186.5,165.6 187.0,178.8 187.5,177.4 188.0,172.8 188.5,167.6 189.0,170.5 189.5,165.9 190.0,158.7 190.5,159.0 191.0,154.9 191.5,153.5 192.0,152.7 192.5,137.1 193.0,123.9 193.5,120.3 194.0,100.5 194.5,95.0 195.0,97.8 195.5,95.0 196.0,95.6 196.5,95.0 197.0,95.0 197.5,95.0 198.0,95.0 198.5,95.0 199.0,95.0 199.5,95.0 200.0,95.5 200.5,103.3 201.0,111.5 201.5,116.1 202.0,121.7 202.5,131.4 203.0,144.7 203.5,136.6 204.0,142.8 204.5,157.8 205.0,159.9 205.5,164.3 206.0,155.7 206.5,147.6 207.0,141.3 207.5,145.2 208.0,128.6 208.5,135.5 209.0,143.3 209.5,149.8 210.0,150.5 210.5,149.7 211.0,144.9 211.5,153.2 212.0,147.3 212.5,147.0 213.0,143.3 213.5,144.2 214.0,156.4 214.5,152.9 215.0,129.7 215.5,120.1 216.0,115.8 216.5,118.6 217.0,112.5 217.5,105.3 218.0,111.5 218.5,125.2 219.0,131.0 219.5,134.3 220.0,145.3 220.5,169.5 221.0,169.1 221.5,161.8 222.0,162.4 222.5,158.6 223.0,143.7 223.5,134.5 224.0,126.3 224.5,122.5 225.0,114.6 225.5,122.3 226.0,110.3 226.5,106.8 227.0,107.6 227.5,111.6 228.0,108.3 228.5,110.1 229.0,114.5 229.5,124.9 230.0,143.8 230.5,125.6 231.0,122.9 231.5,120.5 232.0,126.9 232.5,115.8 233.0,112.8 233.5,118.1 234.0,124.1 234.5,125.3 235.0,123.2 235.5,131.0 236.0,137.2 236.5,129.5 237.0,122.8 237.5,121.9 238.0,131.7 238.5,133.3 239.0,133.2 239.5,137.3 240.0,144.5 240.5,156.6 241.0,170.9 241.5,160.4 242.0,160.0 242.5,158.2 243.0,164.3 243.5,165.9 244.0,172.8 244.5,155.8 245.0,159.4 245.5,151.8 246.0,139.7 246.5,134.6 247.0,142.7 247.5,135.1 248.0,142.1 248.5,150.4 249.0,159.6 249.5,178.0 250.0,176.2 250.5,172.0 251.0,168.2 251.5,160.9 252.0,162.0 252.5,158.7 253.0,144.8 253.5,147.2 254.0,141.0 254.5,144.6 255.0,131.7 255.5,108.1 256.0,95.0 256.5,95.0 257.0,95.0 257.5,95.0 258.0,95.0 258.5,95.0 259.0,95.0 259.5,106.0 260.0,121.1 260.5,120.4 261.0,126.5 261.5,131.9 262.0,127.3 262.5,131.7 263.0,140.4 263.5,136.1 264.0,134.2 264.5,140.0 265.0,134.7 265.5,137.7 266.0,134.6 266.5,133.9 267.0,133.7 267.5,144.1 268.0,137.0 268.5,136.6 269.0,137.0 269.5,149.9 270.0,153.0 270.5,163.5 271.0,158.4 271.5,156.4 272.0,143.0 272.5,152.7 273.0,135.7 273.5,137.8 274.0,144.7 274.5,139.8 275.0,144.3 275.5,163.0 276.0,151.1 276.5,162.6 277.0,172.0 277.5,170.3 278.0,168.3 278.5,151.7 279.0,148.8 279.5,158.7 280.0,150.4 280.5,146.6 281.0,157.9 281.5,155.6 282.0,161.7 282.5,172.7 283.0,190.0 283.5,148.3 284.0,137.6 284.5,132.5 285.0,125.9 285.5,115.3 286.0,95.0 286.5,95.0 287.0,95.0 287.5,95.0 288.0,99.1 288.5,102.4 289.0,109.0 289.5,119.7 290.0,137.7 290.5,137.1 291.0,143.3 291.5,153.8 292.0,156.3 292.5,151.1 293.0,156.7 293.5,159.5 294.0,168.1 294.5,165.0 295.0,157.2 295.5,157.6 296.0,163.5 296.5,158.7 297.0,144.3 297.5,153.7 298.0,146.6 298.5,151.7 299.0,145.4 299.5,147.6 300.0,148.7 300.5,159.4 301.0,162.7 301.5,165.7 302.0,167.5 302.5,184.2 303.0,180.0 303.5,180.8 304.0,183.3 304.5,178.7 305.0,180.7 305.5,171.2 306.0,159.0 306.5,124.6 307.0,148.2 307.5,156.6 308.0,153.0 308.5,140.4 309.0,134.1 309.5,145.0 310.0,148.0 310.5,144.4 311.0,131.8 311.5,135.7 312.0,124.4 312.5,119.5 313.0,111.2 313.5,102.4 314.0,97.1 314.5,102.8 315.0,95.0 315.5,95.0 316.0,95.0 316.5,95.0 317.0,96.5 317.5,98.2 318.0,102.5 318.5,108.5 319.0,105.7 319.5,112.9 320.0,106.7 320.5,108.6 321.0,113.7 321.5,107.9 322.0,109.8 322.5,118.7 323.0,119.0 323.5,127.4 324.0,118.4 324.5,111.9 325.0,129.7 325.5,135.0 326.0,136.6 326.5,136.1 327.0,151.1 327.5,147.3 328.0,141.0 328.5,145.4 329.0,148.4 329.5,143.8 330.0,147.5 330.5,150.6 331.0,154.0 331.5,160.8 332.0,158.0 332.5,153.7 333.0,150.1 333.5,136.3 334.0,122.3 334.5,128.0 335.0,118.6 335.5,116.5 336.0,112.4 336.5,107.0 337.0,120.6 337.5,128.0 338.0,131.6 338.5,108.1 339.0,126.7 339.5,128.5 340.0,127.7 340.5,117.3 341.0,127.5 341.5,124.4 342.0,132.5 342.5,141.0 343.0,129.8 343.5,120.4 344.0,115.5 344.5,107.6 345.0,99.5 345.5,98.0 346.0,95.0 346.5,95.0 347.0,95.0 347.5,95.0 348.0,95.0 348.5,102.2 349.0,114.0 349.5,111.4 350.0,109.8 350.5,130.7 351.0,132.1 351.5,131.0 352.0,127.4 352.5,121.7 353.0,136.0 353.5,137.5 354.0,138.8 354.5,137.9 355.0,146.4 355.5,153.3 356.0,150.8 356.5,149.9 357.0,153.1 357.5,157.0 358.0,156.3 358.5,143.9 359.0,143.4 359.5,141.7 360.0,139.2 360.5,133.8 361.0,119.2 361.5,126.5 362.0,125.6 362.5,117.2 363.0,119.0 363.5,120.9 364.0,127.4 364.5,145.4 365.0,133.9 365.5,134.5 366.0,132.8 366.5,134.3 367.0,139.8 367.5,132.7 368.0,130.1 368.5,128.1 369.0,138.1 369.5,138.9 370.0,144.8 370.5,143.0 371.0,148.4 371.5,145.2 372.0,152.9 372.5,140.1 373.0,139.2 373.5,137.3 374.0,130.2 374.5,123.4 375.0,114.6 375.5,108.2 376.0,95.0 376.5,95.0 377.0,95.0 377.5,95.0 378.0,95.0 378.5,95.0 379.0,97.7 379.5,111.9 380.0,118.6 380.5,129.1 381.0,133.9 381.5,139.8 382.0,137.6 382.5,150.7 383.0,150.8 383.5,146.4 384.0,143.1 384.5,140.4 385.0,141.5 385.5,134.1 386.0,128.0 386.5,135.5 387.0,133.7 387.5,128.3 388.0,137.1 388.5,135.3 389.0,144.6 389.5,161.9 390.0,156.5 390.5,163.5 391.0,169.4 391.5,173.6 392.0,175.4 392.5,179.7 393.0,170.6 393.5,182.8 394.0,174.8 394.5,181.6 395.0,183.2 395.5,182.6 396.0,178.6 396.5,185.6 397.0,171.4 397.5,169.4 398.0,165.8 398.5,157.3 399.0,153.8 399.5,160.0 400.0,139.8 400.5,141.0 401.0,136.2 401.5,135.7 402.0,129.1 402.5,126.8 403.0,119.1 403.5,118.2 404.0,110.9 404.5,121.1 405.0,109.9 405.5,105.4 406.0,103.6 406.5,111.6 407.0,111.4 407.5,129.6 408.0,123.7 408.5,110.7 409.0,118.8 409.5,129.6 410.0,128.8 410.5,132.9 411.0,133.5 411.5,143.0 412.0,161.8 412.5,163.7 413.0,150.9 413.5,153.1 414.0,160.3 414.5,167.7 415.0,167.2 415.5,177.4 416.0,178.8 416.5,188.5 417.0,183.9 417.5,161.5 418.0,148.4 418.5,156.8 419.0,141.9 419.5,140.1 420.0,137.2 420.5,143.5 421.0,148.0 421.5,158.6 422.0,145.9 422.5,162.6 423.0,174.7 423.5,176.2 424.0,173.9 424.5,168.2 425.0,159.2 425.5,172.6 426.0,165.9 426.5,151.0 427.0,152.8 427.5,155.0 428.0,156.5 428.5,156.5 429.0,162.5 429.5,173.2 430.0,154.1 430.5,150.1 431.0,165.5 431.5,137.9 432.0,124.6 432.5,122.2 433.0,108.0 433.5,96.4 434.0,95.0 434.5,95.0 435.0,95.0 435.5,97.0 436.0,95.0 436.5,102.6 437.0,111.5 437.5,116.7 438.0,122.6 438.5,132.6 439.0,134.5 439.5,146.7 440.0,149.4 440.5,150.5 441.0,155.7 441.5,152.9 442.0,149.1 442.5,152.2 443.0,149.3 443.5,147.6 444.0,145.3 444.5,150.9 445.0,150.1 445.5,155.5 446.0,160.2 446.5,158.8 447.0,162.4 447.5,162.2 448.0,155.8 448.5,162.7 449.0,163.5 449.5,166.6 450.0,169.5 450.5,174.7 451.0,177.2 451.5,167.3 452.0,156.0 452.5,171.1 453.0,161.0 453.5,147.3 454.0,138.4 454.5,139.7 455.0,139.4 455.5,125.6 456.0,114.5 456.5,110.5 457.0,113.3 457.5,113.5 458.0,122.8 458.5,134.6 459.0,139.3 459.5,151.3 460.0,152.0 460.5,156.3 461.0,157.5" fill="none" stroke="#e8e800" stroke-width="1.5"/><path d="M174.5 127.9V136.6M177.5 165.2V189.5M178.0 162.7V182.5M180.5 147.9V157.1M191.0 154.9V179.6M192.5 137.1V171.0M198.5 95.0V123.9M204.0 142.8V119.8M229.0 114.5V120.0M234.0 124.1V134.8M255.0 131.7V121.3M256.5 95.0V110.4M262.5 131.7V125.7M271.0 158.4V167.6M275.0 144.3V155.9M275.5 163.0V182.2M276.5 162.6V174.3M314.0 97.1V126.2M317.0 96.5V101.1M321.5 107.9V124.3M327.5 147.3V142.0M334.0 122.3V151.9M344.0 115.5V100.7M344.5 107.6V95.0M351.5 131.0V142.5M382.5 150.7V140.8M400.5 141.0V153.2M401.0 136.2V119.3M405.0 109.9V99.7M411.5 143.0V159.8M418.5 156.8V143.9M429.5 173.2V163.7M432.0 124.6V116.2M439.0 134.5V138.5M455.0 139.4V131.1" stroke="#b8b800" stroke-width="0.9"/><polyline points="173.0,231.6 173.5,230.3 174.0,232.2 174.5,232.6 175.0,229.3 175.5,230.8 176.0,233.0 176.5,234.0 177.0,236.8 177.5,236.5 178.0,234.8 178.5,234.7 179.0,233.3 179.5,234.1 180.0,237.5 180.5,236.6 181.0,239.3 181.5,242.2 182.0,241.7 182.5,241.0 183.0,240.0 183.5,239.4 184.0,237.8 184.5,235.8 185.0,236.9 185.5,238.6 186.0,239.0 186.5,238.1 187.0,240.4 187.5,240.2 188.0,238.3 188.5,239.3 189.0,238.6 189.5,237.4 190.0,240.0 190.5,240.8 191.0,241.1 191.5,241.0 192.0,240.6 192.5,240.7 193.0,240.3 193.5,240.7 194.0,239.6 194.5,240.0 195.0,235.0 195.5,232.2 196.0,231.2 196.5,229.5 197.0,228.4 197.5,224.0 198.0,222.7 198.5,223.5 199.0,225.6 199.5,226.9 200.0,226.5 200.5,228.2 201.0,227.9 201.5,227.1 202.0,225.6 202.5,228.6 203.0,231.1 203.5,230.4 204.0,229.8 204.5,229.9 205.0,232.0 205.5,232.7 206.0,231.7 206.5,230.6 207.0,232.7 207.5,233.9 208.0,234.6 208.5,234.7 209.0,232.8 209.5,234.2 210.0,235.0 210.5,235.9 211.0,239.4 211.5,238.6 212.0,237.4 212.5,236.5 213.0,236.1 213.5,236.2 214.0,235.5 214.5,236.5 215.0,238.4 215.5,239.4 216.0,236.1 216.5,238.0 217.0,240.9 217.5,237.1 218.0,236.1 218.5,239.0 219.0,239.2 219.5,237.7 220.0,236.0 220.5,238.1 221.0,239.8 221.5,238.0 222.0,238.2 222.5,237.0 223.0,239.7 223.5,243.0 224.0,240.6 224.5,235.5 225.0,233.2 225.5,234.6 226.0,230.3 226.5,229.3 227.0,228.6 227.5,226.9 228.0,227.7 228.5,227.5 229.0,226.7 229.5,228.0 230.0,230.9 230.5,232.6 231.0,231.7 231.5,230.5 232.0,230.8 232.5,232.0 233.0,233.3 233.5,231.2 234.0,231.3 234.5,231.9 235.0,230.9 235.5,232.1 236.0,234.4 236.5,234.7 237.0,232.1 237.5,232.5 238.0,234.8 238.5,238.1 239.0,239.5 239.5,239.0 240.0,235.7 240.5,233.7 241.0,236.1 241.5,237.6 242.0,236.9 242.5,237.4 243.0,236.7 243.5,236.6 244.0,239.7 244.5,239.8 245.0,235.4 245.5,235.5 246.0,236.8 246.5,237.2 247.0,237.2 247.5,235.2 248.0,235.7 248.5,237.6 249.0,240.8 249.5,239.9 250.0,238.4 250.5,239.7 251.0,237.0 251.5,233.4 252.0,236.8 252.5,236.8 253.0,234.3 253.5,236.6 254.0,233.9 254.5,232.9 255.0,232.5 255.5,230.7 256.0,228.8 256.5,223.9 257.0,223.3 257.5,223.7 258.0,225.0 258.5,223.7 259.0,223.1 259.5,223.8 260.0,225.5 260.5,227.6 261.0,228.3 261.5,227.2 262.0,229.2 262.5,229.6 263.0,226.5 263.5,227.9 264.0,231.0 264.5,230.7 265.0,232.2 265.5,235.7 266.0,236.2 266.5,235.1 267.0,233.4 267.5,233.5 268.0,234.1 268.5,231.8 269.0,231.7 269.5,235.3 270.0,237.4 270.5,235.8 271.0,234.7 271.5,234.7 272.0,235.9 272.5,236.0 273.0,236.2 273.5,236.2 274.0,235.2 274.5,234.6 275.0,234.7 275.5,236.4 276.0,236.4 276.5,237.7 277.0,235.2 277.5,234.7 278.0,234.7 278.5,236.3 279.0,236.6 279.5,236.3 280.0,237.7 280.5,236.0 281.0,235.4 281.5,235.6 282.0,236.7 282.5,236.4 283.0,236.7 283.5,236.0 284.0,233.6 284.5,232.5 285.0,232.2 285.5,230.8 286.0,228.8 286.5,228.3 287.0,224.7 287.5,222.7 288.0,226.1 288.5,229.8 289.0,229.8 289.5,229.0 290.0,228.5 290.5,228.6 291.0,231.0 291.5,230.2 292.0,232.5 292.5,233.6 293.0,232.5 293.5,230.5 294.0,232.0 294.5,234.8 295.0,236.2 295.5,236.0 296.0,234.9 296.5,235.4 297.0,236.7 297.5,237.8 298.0,237.7 298.5,238.4 299.0,236.6 299.5,236.5 300.0,240.1 300.5,241.9 301.0,242.5 301.5,241.9 302.0,241.1 302.5,240.5 303.0,241.0 303.5,240.2 304.0,240.7 304.5,242.5 305.0,243.6 305.5,243.1 306.0,240.0 306.5,240.4 307.0,239.9 307.5,236.8 308.0,238.2 308.5,240.5 309.0,240.8 309.5,240.5 310.0,239.6 310.5,239.9 311.0,239.3 311.5,237.2 312.0,238.0 312.5,238.8 313.0,239.6 313.5,236.7 314.0,236.1 314.5,233.8 315.0,230.8 315.5,231.0 316.0,226.9 316.5,225.3 317.0,225.7 317.5,223.9 318.0,225.5 318.5,227.4 319.0,228.1 319.5,228.4 320.0,227.5 320.5,227.1 321.0,225.5 321.5,225.0 322.0,225.4 322.5,227.1 323.0,229.2 323.5,228.4 324.0,229.2 324.5,231.8 325.0,230.6 325.5,230.2 326.0,232.5 326.5,233.1 327.0,232.3 327.5,235.3 328.0,236.2 328.5,236.9 329.0,237.4 329.5,237.8 330.0,235.9 330.5,234.1 331.0,237.1 331.5,238.1 332.0,238.8 332.5,239.4 333.0,237.7 333.5,237.2 334.0,238.6 334.5,239.2 335.0,236.1 335.5,235.2 336.0,235.3 336.5,237.5 337.0,237.8 337.5,236.7 338.0,236.8 338.5,236.2 339.0,236.3 339.5,237.3 340.0,238.2 340.5,238.9 341.0,240.3 341.5,238.7 342.0,237.6 342.5,239.2 343.0,239.0 343.5,235.8 344.0,230.7 344.5,227.6 345.0,227.4 345.5,228.6 346.0,228.7 346.5,224.5 347.0,222.4 347.5,222.2 348.0,223.7 348.5,223.3 349.0,222.5 349.5,225.1 350.0,228.4 350.5,226.2 351.0,226.2 351.5,227.8 352.0,225.8 352.5,228.5 353.0,231.4 353.5,230.3 354.0,230.0 354.5,229.8 355.0,228.0 355.5,227.0 356.0,230.0 356.5,229.4 357.0,230.4 357.5,233.1 358.0,231.5 358.5,232.3 359.0,235.6 359.5,235.6 360.0,235.9 360.5,239.2 361.0,236.7 361.5,234.9 362.0,236.5 362.5,236.2 363.0,237.2 363.5,237.7 364.0,237.2 364.5,233.0 365.0,232.7 365.5,234.9 366.0,237.7 366.5,238.6 367.0,238.8 367.5,237.5 368.0,236.3 368.5,237.5 369.0,237.6 369.5,238.1 370.0,239.4 370.5,239.1 371.0,239.7 371.5,241.9 372.0,241.0 372.5,240.4 373.0,237.8 373.5,234.4 374.0,232.9 374.5,231.9 375.0,230.4 375.5,227.0 376.0,227.3 376.5,226.4 377.0,225.3 377.5,227.7 378.0,226.3 378.5,226.7 379.0,226.0 379.5,226.4 380.0,230.4 380.5,233.1 381.0,227.7 381.5,227.1 382.0,227.7 382.5,229.7 383.0,232.9 383.5,235.8 384.0,233.7 384.5,231.0 385.0,233.7 385.5,235.2 386.0,233.7 386.5,236.2 387.0,237.0 387.5,233.2 388.0,231.1 388.5,233.0 389.0,234.2 389.5,234.7 390.0,238.5 390.5,240.6 391.0,238.5 391.5,236.7 392.0,235.8 392.5,234.9 393.0,237.4 393.5,239.5 394.0,239.2 394.5,237.5 395.0,238.7 395.5,240.4 396.0,240.2 396.5,236.6 397.0,238.0 397.5,238.7 398.0,238.0 398.5,236.5 399.0,236.2 399.5,235.8 400.0,236.1 400.5,239.2 401.0,240.0 401.5,241.6 402.0,242.2 402.5,238.0 403.0,234.9 403.5,235.2 404.0,232.9 404.5,232.4 405.0,231.6 405.5,227.7 406.0,224.2 406.5,224.2 407.0,223.5 407.5,221.1 408.0,223.6 408.5,225.4 409.0,227.0 409.5,230.0 410.0,228.2 410.5,225.6 411.0,226.5 411.5,227.5 412.0,229.4 412.5,228.4 413.0,226.9 413.5,228.4 414.0,232.9 414.5,231.8 415.0,230.2 415.5,230.3 416.0,231.2 416.5,230.4 417.0,230.8 417.5,234.1 418.0,236.8 418.5,238.4 419.0,237.9 419.5,237.6 420.0,236.6 420.5,237.6 421.0,237.8 421.5,237.8 422.0,240.3 422.5,239.5 423.0,240.3 423.5,239.6 424.0,237.6 424.5,239.4 425.0,238.5 425.5,238.4 426.0,240.1 426.5,241.3 427.0,242.6 427.5,242.1 428.0,240.3 428.5,240.6 429.0,240.0 429.5,242.7 430.0,244.3 430.5,244.1 431.0,241.2 431.5,239.5 432.0,241.2 432.5,240.1 433.0,236.7 433.5,234.1 434.0,233.2 434.5,233.8 435.0,230.6 435.5,226.0 436.0,224.4 436.5,222.5 437.0,222.8 437.5,225.1 438.0,224.8 438.5,224.7 439.0,226.2 439.5,226.6 440.0,226.7 440.5,226.4 441.0,225.3 441.5,226.8 442.0,226.8 442.5,228.9 443.0,231.8 443.5,228.5 444.0,228.9 444.5,232.5 445.0,231.0 445.5,229.0 446.0,233.1 446.5,232.8 447.0,232.4 447.5,234.8 448.0,234.5 448.5,234.4 449.0,235.5 449.5,235.7 450.0,235.8 450.5,236.0 451.0,234.7 451.5,233.4 452.0,235.5 452.5,237.4 453.0,238.5 453.5,237.9 454.0,234.6 454.5,233.4 455.0,236.5 455.5,236.7 456.0,237.6 456.5,237.7 457.0,236.9 457.5,237.5 458.0,236.3 458.5,237.3 459.0,237.7 459.5,238.9 460.0,239.5 460.5,237.4 461.0,232.0" fill="none" stroke="#00f0f0" stroke-width="2.6"/><path d="M173.5 230.3V244.1M192.0 240.6V238.2M219.0 239.2V236.3M226.0 230.3V226.4M228.5 227.5V233.1M231.0 231.7V237.7M247.5 235.2V211.3M271.5 234.7V249.3M287.0 224.7V232.8M287.5 222.7V234.3M312.0 238.0V241.3M337.0 237.8V253.1M344.0 230.7V232.9M351.0 226.2V233.3M354.0 230.0V234.8M357.0 230.4V221.9M366.5 238.6V243.3M368.5 237.5V246.9M370.0 239.4V244.7M372.5 240.4V248.2M379.0 226.0V233.9M383.5 235.8V240.2M395.0 238.7V235.2M401.5 241.6V247.9M404.5 232.4V239.5M406.5 224.2V227.5M407.0 223.5V228.8M426.5 241.3V250.5" stroke="#00b8b8" stroke-width="0.9"/><path d="M317.5 213V222" stroke="#00ffff" stroke-width="1"/><path d="M315 213H320" stroke="#00ffff" stroke-width="0.8"/><path d="M173 137.8H461" stroke="#00d000" stroke-width="1" stroke-dasharray="9 4"/><path d="M173 195.5H461" stroke="#00a000" stroke-width="1.6"/><path d="M245.5 81V92M245.5 86.5H389M389 81V92" fill="none" stroke="#b8b800" stroke-width="1"/><path d="M313.5 78H320.5V90L317 95L313.5 90Z" fill="#000" stroke="#c0c000" stroke-width="1"/><path d="M315 81H319M317 81V88" stroke="#c0c000" stroke-width="0.8"/></g></svg>
<div class="t" style="left:173px;top:92.00px;height:17.0px;line-height:17.0px;font-size:8.5px;transform:scaleX(0.88);transform-origin:0 50%;color:#10e010;font-weight:bold">dY:20.0 mv</div>
<div class="t" style="left:173px;top:101.00px;height:17.0px;line-height:17.0px;font-size:8.5px;transform:scaleX(0.88);transform-origin:0 50%;color:#10e010;font-weight:bold">Y:&nbsp;&nbsp;&nbsp;3.80 mv</div>
<div class="t" style="left:160px;top:178.00px;height:13.0px;line-height:13.0px;font-size:6.5px;color:#d8d800;font-weight:bold">1-&gt;</div>
<div class="t" style="left:160px;top:249.50px;height:13.0px;line-height:13.0px;font-size:6.5px;color:#00d8d8;font-weight:bold">2-&gt;</div>
<div class="t" style="left:173px;top:302.50px;height:17.0px;line-height:17.0px;font-size:8.5px;transform:scaleX(0.87);transform-origin:0 50%;color:#10e010;font-weight:bold">[DSO100MB]. CH1 10.0mv 4.00us</div>
<div class="t" style="left:173px;top:312.00px;height:17.0px;line-height:17.0px;font-size:8.5px;transform:scaleX(0.87);transform-origin:0 50%;color:#10e010;font-weight:bold">[DSO100MB]. CH2 10.0mv 4.00us</div>
<svg style="position:absolute;left:156px;top:340px;" width="10" height="10" viewBox="0 0 10 10"><rect x="0" y="0" width="10" height="10" fill="#e8e8f8"/><rect x="0" y="1" width="3" height="3" fill="#3030a0"/><rect x="4" y="0" width="2" height="4" fill="#3030a0"/><rect x="7" y="1" width="3" height="3" fill="#3030a0"/><path d="M0 6L3 5L6 7L10 5" stroke="#e0c020" stroke-width="1.2" fill="none"/><rect x="0" y="7" width="10" height="3" fill="#4040b0"/></svg>
<div style="left:418px;top:339.5px;width:18px;height:10px;background:linear-gradient(#d8e6f4,#c4d6ea);border:1px solid #a4b8cc;border-radius:2px;box-sizing:border-box"></div>
<div style="left:437.5px;top:339.5px;width:18px;height:10px;background:linear-gradient(#d8e6f4,#c4d6ea);border:1px solid #a4b8cc;border-radius:2px;box-sizing:border-box"></div>
<div style="left:457px;top:339.5px;width:18px;height:10px;background:linear-gradient(#d8e6f4,#c4d6ea);border:1px solid #a4b8cc;border-radius:2px;box-sizing:border-box"></div>
<svg style="position:absolute;left:423px;top:343.5px;" width="8" height="4" viewBox="0 0 8 4"><rect x="0.5" y="0.5" width="6" height="2.5" rx="1" fill="#e8e8e8" stroke="#707070" stroke-width="0.9"/></svg>
<svg style="position:absolute;left:442.5px;top:341.5px;" width="8" height="6" viewBox="0 0 8 6"><rect x="0.5" y="0.5" width="6" height="5" rx="1" fill="#e8e8e8" stroke="#707070" stroke-width="0.9"/><rect x="2" y="2" width="3" height="2" fill="#909090"/></svg>
<svg style="position:absolute;left:462px;top:341.0px;" width="8" height="7" viewBox="0 0 8 7"><path d="M1 1L7 6M7 1L1 6" stroke="#888" stroke-width="1.8"/></svg>
<svg style="position:absolute;left:156.3px;top:354px;" width="8" height="9" viewBox="0 0 8 9"><path d="M1.5 1L7 4.5L1.5 8Z" fill="#a8a8a8"/></svg>
<div style="left:170.8px;top:356px;width:5.5px;height:5.5px;background:#a00000"></div>
<div style="left:181px;top:353px;width:1px;height:12px;background:#c8c8c8"></div>
<div style="left:182px;top:353px;width:1px;height:12px;background:#fff"></div>
<div style="left:155px;top:365px;width:311px;height:1px;background:#909090"></div>
<div style="left:466px;top:366px;width:10px;height:249px;background:#f0f0f0"></div>
<div style="left:467px;top:376px;width:8px;height:239px;background:#cdcdcd"></div>
<svg style="position:absolute;left:467px;top:369px;" width="8" height="6" viewBox="0 0 8 6"><path d="M1 4.5L4 1.5L7 4.5" fill="none" stroke="#505050" stroke-width="1"/></svg>
<div style="left:163px;top:375px;width:267px;height:240px;border-top:1px solid #e4e4e4;border-left:1px solid #e4e4e4;border-right:2px solid #8c8c8c;box-sizing:border-box"></div>
<svg style="position:absolute;left:155px;top:366px;" width="311" height="249" viewBox="0 0 311 249"><g transform="translate(-155,-366)"><rect x="198" y="403" width="229" height="57" fill="#fff"/><path d="M198 417.25H427" stroke="#d0d0d0" stroke-width="1"/><path d="M198 431.50H427" stroke="#d0d0d0" stroke-width="1"/><path d="M198 445.75H427" stroke="#d0d0d0" stroke-width="1"/><path d="M249.5 403V460" stroke="#d0d0d0" stroke-width="1"/><path d="M301.5 403V460" stroke="#d0d0d0" stroke-width="1"/><path d="M353.5 403V460" stroke="#d0d0d0" stroke-width="1"/><path d="M405.5 403V460" stroke="#d0d0d0" stroke-width="1"/><path d="M198 403.5H427M198.5 403V461" stroke="#a0a0a0" stroke-width="2"/><path d="M195 403.00H198" stroke="#444" stroke-width="0.8"/><path d="M197.5 460V463" stroke="#444" stroke-width="0.8"/><path d="M195 417.25H198" stroke="#444" stroke-width="0.8"/><path d="M249.5 460V463" stroke="#444" stroke-width="0.8"/><path d="M195 431.50H198" stroke="#444" stroke-width="0.8"/><path d="M301.5 460V463" stroke="#444" stroke-width="0.8"/><path d="M195 445.75H198" stroke="#444" stroke-width="0.8"/><path d="M353.5 460V463" stroke="#444" stroke-width="0.8"/><path d="M195 460.00H198" stroke="#444" stroke-width="0.8"/><path d="M405.5 460V463" stroke="#444" stroke-width="0.8"/><polyline points="199.0,414.4 199.5,413.3 200.0,420.3 200.5,414.3 201.0,417.0 201.5,411.0 202.0,403.6 202.5,414.1 203.0,415.5 203.5,419.9 204.0,414.5 204.5,412.5 205.0,415.8 205.5,414.1 206.0,413.6 206.5,418.0 207.0,414.1 207.5,414.2 208.0,416.2 208.5,418.2 209.0,417.4 209.5,421.0 210.0,419.7 210.5,419.8 211.0,423.4 211.5,419.8 212.0,422.9 212.5,425.8 213.0,422.2 213.5,423.6 214.0,421.7 214.5,422.4 215.0,417.5 215.5,419.4 216.0,416.5 216.5,415.4 217.0,413.3 217.5,409.8 218.0,409.3 218.5,408.4 219.0,406.0 219.5,405.2 220.0,404.7 220.5,405.9 221.0,406.2 221.5,407.8 222.0,407.8 222.5,408.7 223.0,408.3 223.5,410.0 224.0,413.0 224.5,411.2 225.0,411.2 225.5,412.9 226.0,412.0 226.5,417.0 227.0,413.9 227.5,414.3 228.0,415.6 228.5,414.6 229.0,418.5 229.5,417.1 230.0,417.3 230.5,416.4 231.0,418.9 231.5,414.2 232.0,413.1 232.5,407.1 233.0,408.5 233.5,416.4 234.0,414.1 234.5,414.8 235.0,414.5 235.5,411.5 236.0,413.0 236.5,414.3 237.0,412.6 237.5,416.4 238.0,416.7 238.5,416.2 239.0,415.9 239.5,417.5 240.0,419.4 240.5,417.9 241.0,421.3 241.5,419.0 242.0,418.4 242.5,419.5 243.0,417.5 243.5,412.0 244.0,410.3 244.5,409.7 245.0,408.2 245.5,406.7 246.0,403.5 246.5,404.1 247.0,403.5 247.5,403.5 248.0,404.2 248.5,405.1 249.0,406.6 249.5,408.3 250.0,409.5 250.5,411.2 251.0,412.9 251.5,416.4 252.0,415.8 252.5,413.2 253.0,415.5 253.5,416.9 254.0,417.7 254.5,416.5 255.0,413.1 255.5,414.7 256.0,413.9 256.5,411.2 257.0,413.6 257.5,412.5 258.0,414.5 258.5,417.7 259.0,415.8 259.5,421.8 260.0,412.6 260.5,416.5 261.0,414.1 261.5,416.1 262.0,420.5 262.5,416.2 263.0,415.0 263.5,418.1 264.0,415.1 264.5,418.9 265.0,415.3 265.5,419.0 266.0,416.9 266.5,424.0 267.0,423.2 267.5,417.9 268.0,410.1 268.5,419.7 269.0,418.7 269.5,416.9 270.0,416.8 270.5,415.7 271.0,411.0 271.5,415.9 272.0,410.6 272.5,405.0 273.0,409.7 273.5,404.2 274.0,403.5 274.5,404.9 275.0,403.5 275.5,403.5 276.0,404.5 276.5,403.5 277.0,405.2 277.5,406.3 278.0,406.1 278.5,407.7 279.0,408.6 279.5,413.0 280.0,415.0 280.5,412.1 281.0,416.4 281.5,416.4 282.0,417.4 282.5,415.9 283.0,417.6 283.5,413.4 284.0,417.7 284.5,416.7 285.0,417.0 285.5,414.3 286.0,417.9 286.5,415.4 287.0,415.4 287.5,415.7 288.0,414.7 288.5,417.1 289.0,416.7 289.5,418.0 290.0,417.2 290.5,417.8 291.0,419.1 291.5,418.8 292.0,419.3 292.5,416.1 293.0,421.0 293.5,420.2 294.0,419.3 294.5,425.2 295.0,423.1 295.5,422.6 296.0,419.6 296.5,413.0 297.0,416.7 297.5,413.0 298.0,412.2 298.5,414.2 299.0,412.1 299.5,404.2 300.0,404.1 300.5,409.7 301.0,403.5 301.5,404.5 302.0,403.5 302.5,403.5 303.0,406.7 303.5,409.5 304.0,408.5 304.5,412.0 305.0,409.8 305.5,414.7 306.0,412.0 306.5,414.1 307.0,415.2 307.5,418.8 308.0,415.7 308.5,419.3 309.0,417.3 309.5,417.2 310.0,416.7 310.5,421.6 311.0,418.2 311.5,420.5 312.0,421.2 312.5,417.1 313.0,416.0 313.5,419.0 314.0,411.2 314.5,426.3 315.0,418.6 315.5,417.9 316.0,414.1 316.5,414.7 317.0,415.1 317.5,411.5 318.0,418.4 318.5,417.5 319.0,418.7 319.5,420.3 320.0,417.8 320.5,415.1 321.0,418.2 321.5,418.4 322.0,414.5 322.5,416.7 323.0,414.4 323.5,412.0 324.0,411.5 324.5,413.7 325.0,405.6 325.5,404.7 326.0,404.2 326.5,403.5 327.0,403.5 327.5,403.5 328.0,403.5 328.5,403.5 329.0,403.5 329.5,405.4 330.0,404.3 330.5,406.3 331.0,410.7 331.5,413.5 332.0,412.7 332.5,419.0 333.0,414.8 333.5,417.4 334.0,414.8 334.5,415.0 335.0,418.7 335.5,414.0 336.0,416.8 336.5,417.5 337.0,417.1 337.5,413.2 338.0,414.0 338.5,417.6 339.0,414.8 339.5,414.4 340.0,414.6 340.5,415.4 341.0,416.7 341.5,413.8 342.0,416.2 342.5,416.4 343.0,416.8 343.5,418.2 344.0,415.6 344.5,416.0 345.0,418.4 345.5,420.3 346.0,420.4 346.5,418.5 347.0,421.1 347.5,420.7 348.0,419.8 348.5,419.9 349.0,418.8 349.5,420.5 350.0,414.9 350.5,417.9 351.0,415.7 351.5,410.7 352.0,410.3 352.5,407.8 353.0,406.9 353.5,407.1 354.0,404.0 354.5,403.5 355.0,405.7 355.5,403.5 356.0,407.7 356.5,406.9 357.0,405.8 357.5,410.8 358.0,408.9 358.5,411.7 359.0,411.9 359.5,417.0 360.0,417.0 360.5,417.3 361.0,420.0 361.5,414.8 362.0,415.2 362.5,417.1 363.0,410.0 363.5,414.4 364.0,415.2 364.5,412.9 365.0,412.9 365.5,414.5 366.0,415.1 366.5,413.1 367.0,410.1 367.5,412.2 368.0,414.6 368.5,414.3 369.0,413.4 369.5,419.1 370.0,417.0 370.5,418.5 371.0,414.2 371.5,414.7 372.0,410.3 372.5,418.4 373.0,419.3 373.5,424.0 374.0,420.0 374.5,421.5 375.0,420.1 375.5,416.4 376.0,416.7 376.5,416.1 377.0,414.3 377.5,414.1 378.0,413.9 378.5,409.9 379.0,407.7 379.5,404.7 380.0,406.3 380.5,409.1 381.0,405.8 381.5,404.1 382.0,404.5 382.5,404.8 383.0,404.7 383.5,406.3 384.0,408.1 384.5,411.3 385.0,412.2 385.5,411.2 386.0,413.7 386.5,414.2 387.0,412.7 387.5,412.4 388.0,413.5 388.5,413.9 389.0,413.8 389.5,408.8 390.0,414.1 390.5,414.3 391.0,412.6 391.5,415.6 392.0,416.6 392.5,415.7 393.0,420.4 393.5,416.8 394.0,416.6 394.5,416.8 395.0,418.0 395.5,414.7 396.0,415.8 396.5,417.4 397.0,415.5 397.5,418.7 398.0,416.5 398.5,416.0 399.0,418.4 399.5,415.3 400.0,418.8 400.5,426.0 401.0,418.1 401.5,416.3 402.0,416.8 402.5,417.0 403.0,415.7 403.5,415.4 404.0,412.4 404.5,413.2 405.0,409.1 405.5,408.0 406.0,406.9 406.5,406.0 407.0,403.5 407.5,405.4 408.0,404.8 408.5,406.3 409.0,406.6 409.5,407.8 410.0,408.5 410.5,409.5 411.0,414.4 411.5,414.5 412.0,415.7 412.5,414.9 413.0,417.2 413.5,417.7 414.0,416.9 414.5,413.4 415.0,414.6 415.5,415.5 416.0,413.1 416.5,418.0 417.0,421.2 417.5,417.3 418.0,416.3 418.5,416.8 419.0,415.0 419.5,419.5 420.0,412.1 420.5,414.5 421.0,416.4 421.5,416.4 422.0,413.3 422.5,416.2 423.0,416.2 423.5,415.3 424.0,416.0 424.5,415.2 425.0,414.3 425.5,414.6 426.0,415.8 426.5,418.1" fill="none" stroke="#ff0000" stroke-width="1.1"/><rect x="198" y="494" width="229" height="68" fill="#fff"/><path d="M198 502.50H427" stroke="#d0d0d0" stroke-width="1"/><path d="M198 511.00H427" stroke="#d0d0d0" stroke-width="1"/><path d="M198 519.50H427" stroke="#d0d0d0" stroke-width="1"/><path d="M198 528.00H427" stroke="#d0d0d0" stroke-width="1"/><path d="M198 536.50H427" stroke="#d0d0d0" stroke-width="1"/><path d="M198 545.00H427" stroke="#d0d0d0" stroke-width="1"/><path d="M198 553.50H427" stroke="#d0d0d0" stroke-width="1"/><path d="M223.5 494V562" stroke="#d0d0d0" stroke-width="1"/><path d="M249.5 494V562" stroke="#d0d0d0" stroke-width="1"/><path d="M275.5 494V562" stroke="#d0d0d0" stroke-width="1"/><path d="M301.5 494V562" stroke="#d0d0d0" stroke-width="1"/><path d="M327.5 494V562" stroke="#d0d0d0" stroke-width="1"/><path d="M353.5 494V562" stroke="#d0d0d0" stroke-width="1"/><path d="M379.5 494V562" stroke="#d0d0d0" stroke-width="1"/><path d="M405.5 494V562" stroke="#d0d0d0" stroke-width="1"/><path d="M198 494.5H427M198.5 494V563" stroke="#a0a0a0" stroke-width="2"/><path d="M195 494.00H198" stroke="#444" stroke-width="0.8"/><path d="M195 502.50H198" stroke="#444" stroke-width="0.8"/><path d="M195 511.00H198" stroke="#444" stroke-width="0.8"/><path d="M195 519.50H198" stroke="#444" stroke-width="0.8"/><path d="M195 528.00H198" stroke="#444" stroke-width="0.8"/><path d="M195 536.50H198" stroke="#444" stroke-width="0.8"/><path d="M195 545.00H198" stroke="#444" stroke-width="0.8"/><path d="M195 553.50H198" stroke="#444" stroke-width="0.8"/><path d="M195 562.00H198" stroke="#444" stroke-width="0.8"/><path d="M197.5 562V565" stroke="#444" stroke-width="0.8"/><path d="M223.5 562V565" stroke="#444" stroke-width="0.8"/><path d="M249.5 562V565" stroke="#444" stroke-width="0.8"/><path d="M275.5 562V565" stroke="#444" stroke-width="0.8"/><path d="M301.5 562V565" stroke="#444" stroke-width="0.8"/><path d="M327.5 562V565" stroke="#444" stroke-width="0.8"/><path d="M353.5 562V565" stroke="#444" stroke-width="0.8"/><path d="M379.5 562V565" stroke="#444" stroke-width="0.8"/><path d="M405.5 562V565" stroke="#444" stroke-width="0.8"/><polyline points="199.0,496.9 199.6,513.3 200.1,502.8 200.7,505.8 201.2,498.1 201.8,505.1 202.3,497.0 202.9,515.1 203.4,502.0 204.0,504.5 204.5,500.4 205.1,509.0 205.6,500.1 206.2,503.6 206.7,494.7 207.3,509.9 207.8,500.7 208.4,510.5 208.9,498.9 209.5,503.2 210.0,498.1 210.6,505.4 211.1,496.1 211.7,502.8 212.2,498.8 212.8,504.8 213.3,495.8 213.9,506.8 214.4,499.1 215.0,514.3 215.5,498.6 216.1,502.6 216.6,495.1 217.2,505.6 217.7,503.6 218.3,509.8 218.8,502.2 219.4,509.2 219.9,501.2 220.5,509.9 221.0,505.2 221.6,510.4 222.1,506.3 222.7,510.5 223.2,505.2 223.8,511.6 224.3,505.8 224.9,511.1 225.4,503.9 226.0,509.4 226.5,500.9 227.1,509.6 227.6,502.7 228.2,511.0 228.7,505.4 229.3,513.2 229.8,499.9 230.4,506.0 230.9,503.1 231.5,505.6 232.0,496.5 232.6,502.2 233.1,501.8 233.7,503.6 234.2,503.0 234.8,506.3 235.3,501.5 235.9,507.8 236.4,501.6 237.0,508.7 237.5,504.7 238.1,507.2 238.6,496.4 239.2,516.5 239.7,509.0 240.3,514.0 240.8,507.8 241.4,510.4 241.9,496.2 242.5,508.1 243.0,506.4 243.6,516.4 244.1,494.8 244.7,513.0 245.2,503.1 245.8,508.9 246.3,501.5 246.9,504.7 247.4,500.3 248.0,506.4 248.5,500.5 249.1,508.1 249.6,506.6 250.2,508.3 250.7,502.5 251.3,506.7 251.8,498.3 252.4,512.4 252.9,495.8 253.5,507.7 254.0,497.7 254.6,514.5 255.1,498.7 255.7,513.6 256.2,502.3 256.8,507.2 257.3,495.1 257.9,512.3 258.4,507.4 259.0,519.5 259.5,498.7 260.1,513.9 260.6,504.8 261.2,510.5 261.7,494.5 262.3,513.5 262.8,497.9 263.4,517.1 263.9,503.6 264.5,509.1 265.0,494.5 265.6,507.6 266.1,505.2 266.7,508.0 267.2,507.3 267.8,512.8 268.3,504.0 268.9,509.6 269.4,503.2 270.0,518.2 270.5,500.5 271.1,509.6 271.6,503.0 272.2,518.9 272.7,508.6 273.3,514.8 273.8,506.8 274.4,510.8 274.9,501.7 275.5,508.3 276.0,503.2 276.6,509.6 277.1,500.9 277.7,514.2 278.2,505.7 278.8,513.6 279.3,501.0 279.9,514.3 280.4,522.0 281.0,512.5 281.5,506.0 282.1,509.0 282.6,502.6 283.2,508.8 283.7,503.5 284.3,508.7 284.8,504.6 285.4,509.1 285.9,507.6 286.5,518.5 287.0,498.8 287.6,512.8 288.1,501.4 288.7,519.2 289.2,510.9 289.8,512.2 290.3,505.9 290.9,515.1 291.4,494.5 292.0,509.3 292.5,505.8 293.1,515.5 293.6,506.4 294.2,508.8 294.7,505.6 295.3,510.0 295.8,520.3 296.4,509.7 296.9,504.2 297.5,515.5 298.0,502.5 298.6,505.3 299.1,504.0 299.7,505.3 300.2,500.1 300.8,510.1 301.3,497.5 301.9,510.8 302.4,509.0 303.0,526.2 303.5,503.8 304.1,510.1 304.6,503.7 305.2,511.3 305.7,500.4 306.3,512.0 306.8,494.5 307.4,506.7 307.9,496.6 308.5,509.9 309.0,503.9 309.6,513.6 310.1,506.6 310.7,515.0 311.2,506.8 311.8,511.9 312.3,504.1 312.9,509.7 313.4,503.9 314.0,507.3 314.5,502.2 315.1,508.1 315.6,502.4 316.2,509.1 316.7,505.1 317.3,508.7 317.8,505.6 318.4,512.4 318.9,504.2 319.5,503.3 320.0,494.5 320.6,529.3 321.1,495.8 321.7,516.4 322.2,502.6 322.8,506.7 323.3,500.3 323.9,506.3 324.4,499.7 325.0,516.9 325.5,505.7 326.1,507.6 326.6,501.7 327.2,508.7 327.7,502.8 328.3,506.4 328.8,502.4 329.4,503.2 329.9,499.4 330.5,510.2 331.0,499.4 331.6,511.5 332.1,505.9 332.7,510.1 333.2,509.3 333.8,512.3 334.3,509.3 334.9,510.0 335.4,497.2 336.0,509.4 336.5,500.0 337.1,505.0 337.6,503.6 338.2,506.0 338.7,494.5 339.3,513.3 339.8,502.4 340.4,503.6 340.9,494.9 341.5,502.0 342.0,494.5 342.6,505.6 343.1,495.3 343.7,502.8 344.2,499.7 344.8,511.4 345.3,505.4 345.9,509.9 346.4,506.2 347.0,507.1 347.5,500.4 348.1,506.2 348.6,499.7 349.2,513.9 349.7,497.0 350.3,507.3 350.8,499.9 351.4,510.3 351.9,506.6 352.5,508.4 353.0,498.6 353.6,508.7 354.1,502.6 354.7,505.7 355.2,496.1 355.8,511.4 356.3,502.7 356.9,508.1 357.4,501.8 358.0,509.3 358.5,497.9 359.1,504.5 359.6,500.6 360.2,504.2 360.7,497.1 361.3,513.2 361.8,495.3 362.4,507.7 362.9,503.6 363.5,513.3 364.0,501.9 364.6,508.0 365.1,505.5 365.7,511.1 366.2,503.1 366.8,511.8 367.3,503.0 367.9,514.8 368.4,503.1 369.0,510.9 369.5,499.5 370.1,511.2 370.6,502.4 371.2,505.0 371.7,500.0 372.3,508.3 372.8,494.5 373.4,501.8 373.9,500.1 374.5,527.3 375.0,502.6 375.6,508.5 376.1,501.4 376.7,515.4 377.2,504.7 377.8,507.6 378.3,501.3 378.9,504.8 379.4,494.5 380.0,503.6 380.5,500.1 381.1,503.8 381.6,501.1 382.2,513.3 382.7,494.5 383.3,502.6 383.8,500.4 384.4,510.5 384.9,498.4 385.5,505.6 386.0,503.6 386.6,506.9 387.1,497.1 387.7,506.1 388.2,499.1 388.8,511.9 389.3,502.4 389.9,504.5 390.4,494.5 391.0,504.9 391.5,503.1 392.1,519.1 392.6,503.3 393.2,505.2 393.7,501.3 394.3,504.8 394.8,497.1 395.4,500.8 395.9,496.7 396.5,503.4 397.0,494.5 397.6,502.1 398.1,495.7 398.7,502.7 399.2,502.4 399.8,510.4 400.3,494.5 400.9,507.1 401.4,494.5 402.0,510.8 402.5,494.5 403.1,513.5 403.6,502.0 404.2,525.5 404.7,497.2 405.3,509.0 405.8,497.1 406.4,511.5 406.9,499.9 407.5,506.6 408.0,506.5 408.6,505.8 409.1,501.8 409.7,506.8 410.2,502.2 410.8,510.0 411.3,494.6 411.9,517.8 412.4,496.9 413.0,506.4 413.5,503.1 414.1,507.5 414.6,502.2 415.2,501.7 415.7,499.8 416.3,506.9 416.8,497.1 417.4,506.2 417.9,497.3 418.5,508.2 419.0,504.4 419.6,510.3 420.1,500.9 420.7,511.0 421.2,504.5 421.8,513.4 422.3,499.7 422.9,511.1 423.4,507.9 424.0,512.5 424.5,494.5 425.1,515.1 425.6,504.7 426.2,508.9 426.7,503.2" fill="none" stroke="#1010ff" stroke-width="0.8"/></g></svg>
<div class="t" style="left:199px;top:388.50px;height:15.0px;line-height:15.0px;font-size:7.5px;transform:scaleX(0.91);transform-origin:0 50%;font-weight:bold;color:#111">Input Signal</div>
<div class="t" style="left:199px;top:479.10px;height:15.0px;line-height:15.0px;font-size:7.5px;transform:scaleX(0.93);transform-origin:0 50%;font-weight:bold;color:#111">Power Spectrum</div>
<div class="t" style="left:154.00px;top:396.50px;width:40px;text-align:right;height:13.0px;line-height:13.0px;font-size:6.5px;font-weight:bold;color:#111;letter-spacing:-0.3px">40m</div>
<div class="t" style="left:154.00px;top:410.75px;width:40px;text-align:right;height:13.0px;line-height:13.0px;font-size:6.5px;font-weight:bold;color:#111;letter-spacing:-0.3px">20m</div>
<div class="t" style="left:154.00px;top:425.00px;width:40px;text-align:right;height:13.0px;line-height:13.0px;font-size:6.5px;font-weight:bold;color:#111;letter-spacing:-0.3px">0m</div>
<div class="t" style="left:154.00px;top:439.25px;width:40px;text-align:right;height:13.0px;line-height:13.0px;font-size:6.5px;font-weight:bold;color:#111;letter-spacing:-0.3px">-20m</div>
<div class="t" style="left:154.00px;top:453.50px;width:40px;text-align:right;height:13.0px;line-height:13.0px;font-size:6.5px;font-weight:bold;color:#111;letter-spacing:-0.3px">-40m</div>
<div class="t" style="left:178.00px;top:463.50px;width:40px;text-align:center;height:13.0px;line-height:13.0px;font-size:6.5px;font-weight:bold;color:#111;letter-spacing:-0.3px">0n</div>
<div class="t" style="left:230.00px;top:463.50px;width:40px;text-align:center;height:13.0px;line-height:13.0px;font-size:6.5px;font-weight:bold;color:#111;letter-spacing:-0.3px">4u</div>
<div class="t" style="left:282.00px;top:463.50px;width:40px;text-align:center;height:13.0px;line-height:13.0px;font-size:6.5px;font-weight:bold;color:#111;letter-spacing:-0.3px">8u</div>
<div class="t" style="left:334.00px;top:463.50px;width:40px;text-align:center;height:13.0px;line-height:13.0px;font-size:6.5px;font-weight:bold;color:#111;letter-spacing:-0.3px">12u</div>
<div class="t" style="left:386.00px;top:463.50px;width:40px;text-align:center;height:13.0px;line-height:13.0px;font-size:6.5px;font-weight:bold;color:#111;letter-spacing:-0.3px">16u</div>
<div class="t" style="left:154.00px;top:487.50px;width:40px;text-align:right;height:13.0px;line-height:13.0px;font-size:6.5px;font-weight:bold;color:#111;letter-spacing:-0.3px">-21</div>
<div class="t" style="left:154.00px;top:496.00px;width:40px;text-align:right;height:13.0px;line-height:13.0px;font-size:6.5px;font-weight:bold;color:#111;letter-spacing:-0.3px">-31</div>
<div class="t" style="left:154.00px;top:504.50px;width:40px;text-align:right;height:13.0px;line-height:13.0px;font-size:6.5px;font-weight:bold;color:#111;letter-spacing:-0.3px">-41</div>
<div class="t" style="left:154.00px;top:513.00px;width:40px;text-align:right;height:13.0px;line-height:13.0px;font-size:6.5px;font-weight:bold;color:#111;letter-spacing:-0.3px">-51</div>
<div class="t" style="left:154.00px;top:521.50px;width:40px;text-align:right;height:13.0px;line-height:13.0px;font-size:6.5px;font-weight:bold;color:#111;letter-spacing:-0.3px">-61</div>
<div class="t" style="left:154.00px;top:530.00px;width:40px;text-align:right;height:13.0px;line-height:13.0px;font-size:6.5px;font-weight:bold;color:#111;letter-spacing:-0.3px">-71</div>
<div class="t" style="left:154.00px;top:538.50px;width:40px;text-align:right;height:13.0px;line-height:13.0px;font-size:6.5px;font-weight:bold;color:#111;letter-spacing:-0.3px">-81</div>
<div class="t" style="left:154.00px;top:547.00px;width:40px;text-align:right;height:13.0px;line-height:13.0px;font-size:6.5px;font-weight:bold;color:#111;letter-spacing:-0.3px">-91</div>
<div class="t" style="left:154.00px;top:555.50px;width:40px;text-align:right;height:13.0px;line-height:13.0px;font-size:6.5px;font-weight:bold;color:#111;letter-spacing:-0.3px">-101</div>
<div class="t" style="left:178.00px;top:565.50px;width:40px;text-align:center;height:13.0px;line-height:13.0px;font-size:6.5px;font-weight:bold;color:#111;letter-spacing:-0.4px">0M</div>
<div class="t" style="left:204.00px;top:565.50px;width:40px;text-align:center;height:13.0px;line-height:13.0px;font-size:6.5px;font-weight:bold;color:#111;letter-spacing:-0.4px">250M</div>
<div class="t" style="left:230.00px;top:565.50px;width:40px;text-align:center;height:13.0px;line-height:13.0px;font-size:6.5px;font-weight:bold;color:#111;letter-spacing:-0.4px">500M</div>
<div class="t" style="left:256.00px;top:565.50px;width:40px;text-align:center;height:13.0px;line-height:13.0px;font-size:6.5px;font-weight:bold;color:#111;letter-spacing:-0.4px">750M</div>
<div class="t" style="left:282.00px;top:565.50px;width:40px;text-align:center;height:13.0px;line-height:13.0px;font-size:6.5px;font-weight:bold;color:#111;letter-spacing:-0.4px">1G</div>
<div class="t" style="left:308.00px;top:565.50px;width:40px;text-align:center;height:13.0px;line-height:13.0px;font-size:6.5px;font-weight:bold;color:#111;letter-spacing:-0.4px">1.25G</div>
<div class="t" style="left:334.00px;top:565.50px;width:40px;text-align:center;height:13.0px;line-height:13.0px;font-size:6.5px;font-weight:bold;color:#111;letter-spacing:-0.4px">1.5G</div>
<div class="t" style="left:360.00px;top:565.50px;width:40px;text-align:center;height:13.0px;line-height:13.0px;font-size:6.5px;font-weight:bold;color:#111;letter-spacing:-0.4px">1.75G</div>
<div class="t" style="left:386.00px;top:565.50px;width:40px;text-align:center;height:13.0px;line-height:13.0px;font-size:6.5px;font-weight:bold;color:#111;letter-spacing:-0.4px">2G</div>
<div class="t" style="left:422.00px;top:565.50px;width:10px;text-align:center;height:13.0px;line-height:13.0px;font-size:6.5px;font-weight:bold;color:#111;">2</div>
<div class="t" style="left:298.00px;top:474.00px;width:60px;text-align:center;height:16px;line-height:16px;font-size:8px;color:#a05a5a;transform:scaleX(0.93)">Time(s)</div>
<div class="t" style="left:300.00px;top:576.30px;width:80px;text-align:center;height:16px;line-height:16px;font-size:8px;color:#a05a5a;transform:scaleX(0.94)">Frequency(Hz)</div>
<div class="t" style="left:137px;top:421.5px;width:60px;height:12px;line-height:12px;text-align:center;font-size:7.5px;color:#b07070;transform:rotate(-90deg)">Amplitude(V)</div>
<div class="t" style="left:137px;top:514px;width:60px;height:12px;line-height:12px;text-align:center;font-size:7.5px;color:#b07070;transform:rotate(-90deg)">Magnitude(dB)</div>
<div class="t" style="left:201px;top:580.50px;height:14px;line-height:14px;font-size:7px;transform:scaleX(0.86);transform-origin:0 50%;color:#222">Input</div>
<div style="left:222px;top:582px;width:1px;height:12px;background:#909090"></div>
<div class="t" style="left:225.5px;top:582.00px;height:14px;line-height:14px;font-size:7px;transform:scaleX(0.86);transform-origin:0 50%;color:#222">Config</div>
<div style="left:246px;top:583px;width:1px;height:11px;background:#909090"></div>
<div style="left:197px;top:594px;width:189px;height:21px;border-top:1px solid #e8e8e8;border-right:2px solid #808080;box-sizing:border-box"></div>
<div style="left:205px;top:604px;width:124px;height:11px;border:1px solid #b0b0b0;border-bottom:none;box-sizing:border-box"></div>
<svg style="position:absolute;left:487px;top:51px;" width="9" height="9" viewBox="0 0 9 9"><rect x="0.5" y="0.5" width="10" height="9" fill="#e8e8e0" stroke="#444" stroke-width="0.8"/><rect x="1" y="1" width="9" height="2" fill="#e03030"/><rect x="1" y="4" width="9" height="2" fill="#30b030"/><rect x="1" y="7" width="9" height="2" fill="#b0b0b0"/></svg>
<div class="t" style="left:498.3px;top:47.90px;height:17.2px;line-height:17.2px;font-size:8.6px;transform:scaleX(0.72);transform-origin:0 50%;color:#1a2838;-webkit-text-stroke:0.25px #1a2838">Bus_1</div>
<div style="left:705.8px;top:50.5px;width:18px;height:10px;background:linear-gradient(#d8e6f4,#c4d6ea);border:1px solid #a4b8cc;border-radius:2px;box-sizing:border-box"></div>
<div style="left:725.3px;top:50.5px;width:18px;height:10px;background:linear-gradient(#d8e6f4,#c4d6ea);border:1px solid #a4b8cc;border-radius:2px;box-sizing:border-box"></div>
<div style="left:744.8px;top:50.5px;width:18px;height:10px;background:linear-gradient(#e49888,#c85a4a);border:1px solid #a04030;border-radius:2px;box-sizing:border-box"></div>
<svg style="position:absolute;left:710.8px;top:54.5px;" width="8" height="4" viewBox="0 0 8 4"><rect x="0.5" y="0.5" width="6" height="2.5" rx="1" fill="#e8e8e8" stroke="#707070" stroke-width="0.9"/></svg>
<svg style="position:absolute;left:730.3px;top:52.5px;" width="8" height="6" viewBox="0 0 8 6"><rect x="0.5" y="0.5" width="6" height="5" rx="1" fill="#e8e8e8" stroke="#707070" stroke-width="0.9"/><rect x="2" y="2" width="3" height="2" fill="#909090"/></svg>
<svg style="position:absolute;left:749.8px;top:52.0px;" width="8" height="7" viewBox="0 0 8 7"><path d="M1 1L7 6M7 1L1 6" stroke="#fff" stroke-width="1.8"/></svg>
<svg style="position:absolute;left:487.5px;top:66px;" width="8" height="9" viewBox="0 0 8 9"><path d="M1.5 1L7 4.5L1.5 8Z" fill="#a8a8a8"/></svg>
<div style="left:502.0px;top:68px;width:5.5px;height:5.5px;background:#a00000"></div>
<div style="left:512px;top:65px;width:1px;height:12px;background:#c8c8c8"></div>
<div style="left:513px;top:65px;width:1px;height:12px;background:#fff"></div>
<div style="left:515px;top:64px;width:14px;height:13px;background:#fff;border:1px solid #c8d0d8;box-sizing:border-box"></div>
<svg style="position:absolute;left:517px;top:66px;" width="10" height="9" viewBox="0 0 10 9"><rect x="0.5" y="0.5" width="9" height="8" fill="#fff" stroke="#303880" stroke-width="1"/><rect x="0.5" y="0.5" width="9" height="2" fill="#3050c0"/><rect x="4" y="4" width="5.5" height="4.5" fill="#f0e060"/></svg>
<div style="left:486px;top:77px;width:277px;height:1px;background:#909090"></div>
<svg style="position:absolute;left:486px;top:78px;" width="277" height="537" viewBox="0 0 277 537"><g transform="translate(-486,-78)"><rect x="516" y="90" width="247" height="226" fill="#000"/><path d="M613.5 90V316" stroke="#5a5a5a" stroke-width="1"/><path d="M711.5 90V316" stroke="#5a5a5a" stroke-width="1"/><path d="M516 147.5H763" stroke="#5a5a5a" stroke-width="1"/><path d="M516 203.5H763" stroke="#5a5a5a" stroke-width="1"/><path d="M516 260.5H763" stroke="#5a5a5a" stroke-width="1"/><path d="M517.5 90V316" stroke="#10c010" stroke-width="1.6"/><polyline points="518.0,96.0 518.5,95.2 519.0,96.4 519.5,97.2 520.0,98.3 520.5,98.4 521.0,99.6 521.5,98.5 522.0,99.8 522.5,99.1 523.0,100.1 523.5,100.3 524.0,99.7 524.5,98.7 525.0,101.7 525.5,101.5 526.0,101.5 526.5,101.0 527.0,101.4 527.5,102.2 528.0,102.0 528.5,103.1 529.0,102.3 529.5,101.7 530.0,103.0 530.5,102.1 531.0,102.8 531.5,101.3 532.0,102.6 532.5,109.9 533.0,102.5 533.5,109.2 534.0,103.6 534.5,103.2 535.0,104.7 535.5,103.1 536.0,103.2 536.5,103.3 537.0,101.9 537.5,102.3 538.0,104.0 538.5,103.4 539.0,104.8 539.5,103.7 540.0,103.6 540.5,104.7 541.0,104.1 541.5,105.2 542.0,94.7 542.5,104.4 543.0,106.3 543.5,104.5 544.0,105.1 544.5,105.0 545.0,104.3 545.5,103.8 546.0,105.1 546.5,100.8 547.0,105.2 547.5,105.5 548.0,104.6 548.5,103.8 549.0,91.0 549.5,105.2 550.0,109.9 550.5,105.6 551.0,104.8 551.5,104.9 552.0,104.3 552.5,104.8 553.0,105.8 553.5,104.7 554.0,104.7 554.5,104.4 555.0,105.7 555.5,103.9 556.0,104.6 556.5,105.9 557.0,106.3 557.5,105.1 558.0,106.0 558.5,103.7 559.0,106.0 559.5,105.6 560.0,104.4 560.5,104.0 561.0,105.1 561.5,105.7 562.0,108.3 562.5,105.7 563.0,106.3 563.5,106.3 564.0,104.6 564.5,105.5 565.0,105.4 565.5,106.7 566.0,105.5 566.5,106.7 567.0,106.0 567.5,107.9 568.0,106.0 568.5,106.1 569.0,106.0 569.5,106.3 570.0,108.1 570.5,105.8 571.0,105.6 571.5,108.3 572.0,106.9 572.5,105.6 573.0,107.1 573.5,100.3 574.0,117.4 574.5,107.3 575.0,105.9 575.5,106.4 576.0,106.0 576.5,107.7 577.0,108.0 577.5,106.5 578.0,106.8 578.5,105.3 579.0,106.4 579.5,107.2 580.0,107.2 580.5,107.1 581.0,107.7 581.5,107.1 582.0,106.8 582.5,102.3 583.0,116.4 583.5,106.3 584.0,106.7 584.5,106.7 585.0,106.7 585.5,107.2 586.0,106.8 586.5,107.4 587.0,107.9 587.5,107.5 588.0,107.6 588.5,106.8 589.0,106.7 589.5,107.4 590.0,108.4 590.5,108.0 591.0,108.6 591.5,108.6 592.0,108.7 592.5,107.2 593.0,108.9 593.5,108.4 594.0,109.2 594.5,107.6 595.0,106.7 595.5,105.6 596.0,104.9 596.5,102.6 597.0,102.9 597.5,102.2 598.0,135.2 598.5,99.9 599.0,99.7 599.5,100.2 600.0,97.4 600.5,97.6 601.0,95.7 601.5,95.2 602.0,94.7 602.5,94.2 603.0,92.3 603.5,91.2 604.0,92.7 604.5,91.3 605.0,91.6 605.5,91.7 606.0,91.6 606.5,91.0 607.0,91.0 607.5,91.0 608.0,91.0 608.5,91.0 609.0,91.0 609.5,92.5 610.0,91.6 610.5,91.1 611.0,91.0 611.5,91.6 612.0,92.2 612.5,91.0 613.0,91.5 613.5,91.1 614.0,91.9 614.5,92.4 615.0,92.3 615.5,94.1 616.0,94.0 616.5,97.1 617.0,97.4 617.5,97.2 618.0,98.0 618.5,98.3 619.0,98.8 619.5,99.2 620.0,102.9 620.5,99.6 621.0,99.0 621.5,99.6 622.0,100.1 622.5,101.0 623.0,100.8 623.5,102.8 624.0,101.3 624.5,101.3 625.0,102.1 625.5,102.7 626.0,103.5 626.5,103.0 627.0,101.8 627.5,102.3 628.0,103.3 628.5,102.8 629.0,103.3 629.5,102.7 630.0,104.1 630.5,104.1 631.0,103.9 631.5,103.2 632.0,101.9 632.5,102.2 633.0,103.5 633.5,103.9 634.0,101.1 634.5,103.1 635.0,104.4 635.5,104.3 636.0,103.2 636.5,104.2 637.0,107.1 637.5,103.6 638.0,104.7 638.5,104.7 639.0,103.5 639.5,103.2 640.0,103.0 640.5,102.9 641.0,105.1 641.5,121.4 642.0,108.4 642.5,105.0 643.0,103.7 643.5,104.2 644.0,105.0 644.5,122.8 645.0,104.4 645.5,103.2 646.0,102.9 646.5,104.2 647.0,108.6 647.5,104.6 648.0,104.2 648.5,104.5 649.0,104.8 649.5,105.2 650.0,104.9 650.5,104.4 651.0,104.7 651.5,105.6 652.0,104.8 652.5,104.2 653.0,104.3 653.5,105.3 654.0,105.6 654.5,106.1 655.0,104.9 655.5,106.3 656.0,105.0 656.5,105.1 657.0,104.9 657.5,105.8 658.0,106.2 658.5,105.4 659.0,105.1 659.5,104.3 660.0,105.7 660.5,105.3 661.0,105.5 661.5,105.2 662.0,105.0 662.5,105.4 663.0,106.2 663.5,106.6 664.0,105.9 664.5,106.2 665.0,105.8 665.5,113.1 666.0,105.0 666.5,106.8 667.0,106.6 667.5,107.3 668.0,105.7 668.5,106.3 669.0,105.5 669.5,113.6 670.0,110.0 670.5,109.4 671.0,125.7 671.5,107.0 672.0,105.1 672.5,107.0 673.0,98.1 673.5,92.8 674.0,122.7 674.5,107.0 675.0,105.6 675.5,114.9 676.0,106.9 676.5,106.8 677.0,105.3 677.5,105.6 678.0,106.4 678.5,107.2 679.0,107.2 679.5,107.9 680.0,108.0 680.5,109.0 681.0,106.1 681.5,107.2 682.0,108.1 682.5,106.3 683.0,106.2 683.5,107.5 684.0,108.3 684.5,108.4 685.0,106.1 685.5,106.6 686.0,107.5 686.5,107.2 687.0,107.9 687.5,107.8 688.0,109.1 688.5,107.7 689.0,107.9 689.5,107.9 690.0,108.7 690.5,107.1 691.0,108.2 691.5,107.1 692.0,106.2 692.5,107.7 693.0,106.5 693.5,106.3 694.0,104.5 694.5,103.9 695.0,102.7 695.5,102.1 696.0,100.5 696.5,101.3 697.0,98.4 697.5,99.6 698.0,97.2 698.5,97.2 699.0,95.7 699.5,95.1 700.0,95.0 700.5,93.1 701.0,91.5 701.5,91.9 702.0,91.8 702.5,91.0 703.0,91.8 703.5,91.9 704.0,91.0 704.5,91.0 705.0,91.7 705.5,91.0 706.0,91.0 706.5,91.0 707.0,91.5 707.5,91.9 708.0,91.0 708.5,91.1 709.0,91.8 709.5,91.5 710.0,91.0 710.5,92.1 711.0,91.0 711.5,91.9 712.0,91.0 712.5,92.9 713.0,94.3 713.5,95.0 714.0,97.6 714.5,96.9 715.0,97.3 715.5,98.9 716.0,98.9 716.5,97.1 717.0,99.0 717.5,99.9 718.0,99.2 718.5,100.2 719.0,99.9 719.5,100.8 720.0,99.5 720.5,99.5 721.0,100.8 721.5,114.4 722.0,102.6 722.5,101.5 723.0,101.3 723.5,102.7 724.0,102.2 724.5,103.7 725.0,102.3 725.5,101.0 726.0,102.0 726.5,101.9 727.0,101.7 727.5,102.2 728.0,102.4 728.5,102.8 729.0,102.6 729.5,103.5 730.0,103.5 730.5,103.4 731.0,103.5 731.5,101.9 732.0,102.1 732.5,102.8 733.0,103.7 733.5,102.4 734.0,103.3 734.5,103.9 735.0,105.3 735.5,104.0 736.0,117.1 736.5,104.7 737.0,104.1 737.5,103.7 738.0,104.9 738.5,103.3 739.0,104.2 739.5,104.2 740.0,104.9 740.5,103.3 741.0,103.2 741.5,91.0 742.0,104.1 742.5,104.4 743.0,104.1 743.5,104.8 744.0,105.0 744.5,121.5 745.0,103.7 745.5,105.5 746.0,103.4 746.5,104.5 747.0,105.4 747.5,104.3 748.0,104.6 748.5,106.4 749.0,106.1 749.5,105.3 750.0,105.7 750.5,104.6 751.0,103.9 751.5,105.4 752.0,105.2 752.5,105.3 753.0,105.0 753.5,103.7 754.0,105.6 754.5,105.5 755.0,107.0 755.5,105.9 756.0,105.5 756.5,106.1 757.0,106.0 757.5,105.5 758.0,105.3 758.5,104.4 759.0,105.7 759.5,107.0 760.0,104.2 760.5,105.0 761.0,106.4 761.5,106.0 762.0,106.2 762.5,104.4" fill="none" stroke="#f0f000" stroke-width="1.4"/><polyline points="518.0,265.4 518.5,267.6 519.0,265.8 519.5,264.7 520.0,264.3 520.5,265.0 521.0,266.2 521.5,263.7 522.0,266.6 522.5,266.3 523.0,266.0 523.5,264.8 524.0,264.8 524.5,265.2 525.0,263.6 525.5,266.0 526.0,264.5 526.5,265.7 527.0,265.8 527.5,266.6 528.0,272.9 528.5,265.1 529.0,266.3 529.5,269.2 530.0,266.1 530.5,266.7 531.0,267.3 531.5,267.7 532.0,265.9 532.5,268.0 533.0,268.1 533.5,270.6 534.0,268.6 534.5,268.3 535.0,269.1 535.5,266.5 536.0,269.8 536.5,271.5 537.0,269.8 537.5,270.2 538.0,270.4 538.5,271.0 539.0,269.5 539.5,272.2 540.0,270.5 540.5,270.8 541.0,273.1 541.5,272.3 542.0,272.2 542.5,274.4 543.0,272.7 543.5,273.0 544.0,276.0 544.5,270.1 545.0,272.1 545.5,273.5 546.0,271.5 546.5,272.2 547.0,271.5 547.5,272.0 548.0,272.0 548.5,273.0 549.0,273.0 549.5,272.0 550.0,273.2 550.5,273.1 551.0,272.6 551.5,272.6 552.0,269.4 552.5,272.7 553.0,272.6 553.5,270.7 554.0,275.2 554.5,273.7 555.0,272.7 555.5,272.9 556.0,274.0 556.5,273.6 557.0,271.6 557.5,272.7 558.0,273.8 558.5,273.6 559.0,273.9 559.5,272.1 560.0,272.9 560.5,273.9 561.0,272.7 561.5,273.3 562.0,271.8 562.5,272.4 563.0,273.0 563.5,273.6 564.0,272.8 564.5,272.0 565.0,271.4 565.5,272.3 566.0,271.1 566.5,270.4 567.0,271.6 567.5,273.4 568.0,273.6 568.5,272.8 569.0,273.5 569.5,271.9 570.0,278.3 570.5,271.0 571.0,271.5 571.5,274.1 572.0,272.9 572.5,272.8 573.0,274.8 573.5,274.0 574.0,271.8 574.5,273.1 575.0,271.8 575.5,273.6 576.0,271.0 576.5,271.7 577.0,272.1 577.5,274.6 578.0,271.0 578.5,274.1 579.0,273.9 579.5,272.8 580.0,273.5 580.5,275.4 581.0,272.7 581.5,271.9 582.0,273.2 582.5,272.9 583.0,271.0 583.5,272.5 584.0,272.1 584.5,271.1 585.0,271.3 585.5,271.6 586.0,270.6 586.5,272.5 587.0,271.8 587.5,269.5 588.0,271.0 588.5,271.4 589.0,270.1 589.5,271.2 590.0,272.1 590.5,270.3 591.0,271.5 591.5,269.4 592.0,273.0 592.5,271.1 593.0,270.3 593.5,269.8 594.0,269.8 594.5,272.8 595.0,270.8 595.5,271.2 596.0,271.2 596.5,270.1 597.0,272.4 597.5,269.3 598.0,272.8 598.5,270.9 599.0,271.3 599.5,271.6 600.0,271.8 600.5,269.2 601.0,271.3 601.5,271.0 602.0,270.8 602.5,270.7 603.0,271.8 603.5,270.9 604.0,271.5 604.5,271.0 605.0,267.7 605.5,269.3 606.0,269.9 606.5,268.3 607.0,267.8 607.5,266.9 608.0,271.2 608.5,268.3 609.0,269.9 609.5,268.2 610.0,269.8 610.5,271.0 611.0,267.8 611.5,269.0 612.0,267.7 612.5,266.6 613.0,267.3 613.5,268.4 614.0,269.9 614.5,269.5 615.0,267.6 615.5,265.8 616.0,268.7 616.5,267.3 617.0,267.3 617.5,266.0 618.0,266.8 618.5,267.0 619.0,267.5 619.5,267.4 620.0,266.8 620.5,265.8 621.0,266.3 621.5,266.5 622.0,267.3 622.5,266.6 623.0,266.4 623.5,268.3 624.0,266.6 624.5,268.2 625.0,267.7 625.5,268.5 626.0,268.5 626.5,269.1 627.0,269.0 627.5,267.1 628.0,267.2 628.5,269.2 629.0,271.1 629.5,268.7 630.0,268.6 630.5,271.9 631.0,263.0 631.5,269.2 632.0,269.0 632.5,269.5 633.0,269.4 633.5,271.1 634.0,270.2 634.5,270.1 635.0,268.4 635.5,271.5 636.0,270.7 636.5,270.9 637.0,271.6 637.5,271.6 638.0,271.1 638.5,271.7 639.0,270.9 639.5,270.7 640.0,270.8 640.5,273.0 641.0,271.0 641.5,272.3 642.0,273.7 642.5,274.5 643.0,272.0 643.5,276.0 644.0,272.9 644.5,271.6 645.0,272.3 645.5,275.3 646.0,272.4 646.5,274.5 647.0,273.6 647.5,274.6 648.0,274.1 648.5,273.0 649.0,273.8 649.5,274.1 650.0,273.0 650.5,273.0 651.0,273.5 651.5,271.7 652.0,272.5 652.5,272.2 653.0,270.7 653.5,270.6 654.0,271.8 654.5,270.2 655.0,273.3 655.5,273.8 656.0,272.8 656.5,273.0 657.0,265.3 657.5,272.6 658.0,273.5 658.5,273.5 659.0,274.2 659.5,273.4 660.0,275.4 660.5,271.5 661.0,274.6 661.5,274.6 662.0,272.8 662.5,272.5 663.0,274.4 663.5,269.4 664.0,273.1 664.5,274.3 665.0,272.7 665.5,272.9 666.0,273.0 666.5,273.1 667.0,276.2 667.5,275.1 668.0,275.3 668.5,271.7 669.0,270.9 669.5,271.9 670.0,274.5 670.5,274.4 671.0,271.4 671.5,271.8 672.0,274.4 672.5,274.3 673.0,274.1 673.5,274.5 674.0,272.9 674.5,274.0 675.0,273.4 675.5,274.5 676.0,273.0 676.5,271.9 677.0,274.9 677.5,275.3 678.0,274.4 678.5,273.4 679.0,272.7 679.5,274.4 680.0,272.4 680.5,273.7 681.0,274.0 681.5,272.8 682.0,264.5 682.5,273.5 683.0,272.2 683.5,271.8 684.0,271.6 684.5,273.6 685.0,272.8 685.5,273.5 686.0,270.7 686.5,273.0 687.0,273.9 687.5,272.2 688.0,271.5 688.5,271.7 689.0,273.2 689.5,271.9 690.0,271.0 690.5,269.6 691.0,272.2 691.5,272.0 692.0,270.3 692.5,272.6 693.0,270.2 693.5,271.1 694.0,268.9 694.5,269.1 695.0,270.4 695.5,271.1 696.0,271.2 696.5,269.6 697.0,270.1 697.5,270.3 698.0,270.2 698.5,269.9 699.0,270.9 699.5,276.7 700.0,268.1 700.5,271.6 701.0,270.7 701.5,271.3 702.0,271.1 702.5,271.4 703.0,271.2 703.5,268.9 704.0,268.3 704.5,268.9 705.0,270.1 705.5,269.8 706.0,267.9 706.5,268.9 707.0,268.3 707.5,267.3 708.0,270.3 708.5,268.1 709.0,267.4 709.5,269.5 710.0,268.0 710.5,267.6 711.0,265.5 711.5,267.8 712.0,267.7 712.5,268.3 713.0,265.0 713.5,267.3 714.0,267.8 714.5,266.8 715.0,265.7 715.5,263.5 716.0,270.0 716.5,264.4 717.0,263.7 717.5,266.6 718.0,265.5 718.5,265.7 719.0,268.3 719.5,265.7 720.0,264.1 720.5,264.0 721.0,266.5 721.5,266.5 722.0,266.7 722.5,265.6 723.0,266.8 723.5,266.3 724.0,267.3 724.5,266.7 725.0,267.4 725.5,268.2 726.0,267.6 726.5,269.6 727.0,266.0 727.5,268.4 728.0,271.0 728.5,269.9 729.0,268.5 729.5,269.6 730.0,269.3 730.5,269.6 731.0,271.3 731.5,269.4 732.0,269.3 732.5,268.1 733.0,268.3 733.5,267.9 734.0,268.8 734.5,268.9 735.0,269.2 735.5,269.7 736.0,263.1 736.5,270.7 737.0,269.7 737.5,271.2 738.0,270.8 738.5,271.7 739.0,270.3 739.5,271.8 740.0,270.7 740.5,269.1 741.0,271.2 741.5,271.3 742.0,269.9 742.5,270.4 743.0,271.3 743.5,273.8 744.0,272.1 744.5,273.8 745.0,272.7 745.5,272.9 746.0,272.1 746.5,269.8 747.0,272.8 747.5,270.3 748.0,271.5 748.5,271.4 749.0,273.6 749.5,272.9 750.0,274.0 750.5,272.3 751.0,276.6 751.5,272.2 752.0,274.4 752.5,272.9 753.0,271.8 753.5,270.9 754.0,271.2 754.5,272.2 755.0,273.3 755.5,273.2 756.0,272.6 756.5,272.7 757.0,273.7 757.5,274.2 758.0,273.8 758.5,273.9 759.0,273.5 759.5,274.2 760.0,270.8 760.5,271.9 761.0,272.7 761.5,272.8 762.0,273.9 762.5,270.5" fill="none" stroke="#18c8c8" stroke-width="1.3"/><rect x="516" y="336" width="247" height="269.5" fill="#000"/><path d="M601.5 336V605.5" stroke="#5a5a5a" stroke-width="1"/><path d="M686.5 336V605.5" stroke="#5a5a5a" stroke-width="1"/><path d="M516 371.5H763" stroke="#5a5a5a" stroke-width="1"/><path d="M516 406.5H763" stroke="#5a5a5a" stroke-width="1"/><path d="M516 441.5H763" stroke="#5a5a5a" stroke-width="1"/><path d="M516 476.5H763" stroke="#5a5a5a" stroke-width="1"/><path d="M516 511.5H763" stroke="#5a5a5a" stroke-width="1"/><path d="M516 546.5H763" stroke="#5a5a5a" stroke-width="1"/><path d="M516 582.5H763" stroke="#5a5a5a" stroke-width="1"/><path d="M516.50 317V321" stroke="#333" stroke-width="0.9"/><path d="M536.04 317V319.5" stroke="#333" stroke-width="0.9"/><path d="M555.58 317V319.5" stroke="#333" stroke-width="0.9"/><path d="M575.12 317V319.5" stroke="#333" stroke-width="0.9"/><path d="M594.66 317V319.5" stroke="#333" stroke-width="0.9"/><path d="M614.20 317V321" stroke="#333" stroke-width="0.9"/><path d="M633.74 317V319.5" stroke="#333" stroke-width="0.9"/><path d="M653.28 317V319.5" stroke="#333" stroke-width="0.9"/><path d="M672.82 317V319.5" stroke="#333" stroke-width="0.9"/><path d="M692.36 317V319.5" stroke="#333" stroke-width="0.9"/><path d="M711.90 317V321" stroke="#333" stroke-width="0.9"/><path d="M731.44 317V319.5" stroke="#333" stroke-width="0.9"/><path d="M750.98 317V319.5" stroke="#333" stroke-width="0.9"/></g></svg>
<div class="t" style="left:501.00px;top:320.50px;width:30px;text-align:center;height:15.0px;line-height:15.0px;font-size:7.5px;font-family:'Liberation Serif',serif;color:#222">0ns</div>
<div class="t" style="left:598.50px;top:320.50px;width:30px;text-align:center;height:15.0px;line-height:15.0px;font-size:7.5px;font-family:'Liberation Serif',serif;color:#222">4us</div>
<div class="t" style="left:696.50px;top:320.50px;width:30px;text-align:center;height:15.0px;line-height:15.0px;font-size:7.5px;font-family:'Liberation Serif',serif;color:#222">8us</div>
<svg style="position:absolute;left:498px;top:141.5px;" width="19" height="11" viewBox="0 0 19 11"><path d="M0 0H14L18 5.5L14 11H0Z" fill="#ffff00"/></svg>
<div class="t" style="left:498px;top:141.5px;width:15px;height:11px;line-height:11px;text-align:center;font-size:5.5px;font-weight:bold;color:#707000">SDA</div>
<svg style="position:absolute;left:498px;top:255.0px;" width="19" height="11" viewBox="0 0 19 11"><path d="M0 0H14L18 5.5L14 11H0Z" fill="#20c8c8"/></svg>
<div class="t" style="left:498px;top:255.0px;width:15px;height:11px;line-height:11px;text-align:center;font-size:5.5px;font-weight:bold;color:#106060">SCL</div>
<svg style="position:absolute;left:498px;top:364.5px;" width="19" height="11" viewBox="0 0 19 11"><path d="M0 0H14L18 5.5L14 11H0Z" fill="#ffff00"/></svg>
<div class="t" style="left:498px;top:364.5px;width:15px;height:11px;line-height:11px;text-align:center;font-size:5.5px;font-weight:bold;color:#707000">SDA</div>
<svg style="position:absolute;left:498px;top:435.0px;" width="19" height="11" viewBox="0 0 19 11"><path d="M0 0H14L18 5.5L14 11H0Z" fill="#20c8c8"/></svg>
<div class="t" style="left:498px;top:435.0px;width:15px;height:11px;line-height:11px;text-align:center;font-size:5.5px;font-weight:bold;color:#106060">SCL</div>
<svg style="position:absolute;left:498px;top:505.5px;" width="19" height="11" viewBox="0 0 19 11"><path d="M0 0H14L18 5.5L14 11H0Z" fill="#ff1010"/></svg>
<div class="t" style="left:498px;top:505.5px;width:16px;height:11px;line-height:11px;text-align:center;font-size:6px;color:#700;font-family:'Liberation Serif'">Res1</div>
<svg style="position:absolute;left:498px;top:576.5px;" width="19" height="11" viewBox="0 0 19 11"><path d="M0 0H14L18 5.5L14 11H0Z" fill="#10f0f0"/></svg>
<div class="t" style="left:498px;top:576.5px;width:16px;height:11px;line-height:11px;text-align:center;font-size:6px;color:#066;font-family:'Liberation Serif'">Res2</div>
<div style="left:486px;top:606px;width:277px;height:9px;background:#f0f0f0"></div>
<div style="left:497px;top:607px;width:133px;height:7px;background:#cdcdcd"></div>
<svg style="position:absolute;left:488px;top:607px;" width="7" height="7" viewBox="0 0 7 7"><path d="M4.5 1L1.5 3.5L4.5 6" fill="none" stroke="#505050" stroke-width="1"/></svg>
<svg style="position:absolute;left:755px;top:607px;" width="7" height="7" viewBox="0 0 7 7"><path d="M2 1L5 3.5L2 6" fill="none" stroke="#505050" stroke-width="1"/></svg>
<svg style="position:absolute;left:773px;top:50px;" width="10" height="10" viewBox="0 0 10 10"><rect x="0" y="9" width="10" height="1" fill="#333"/><rect x="0" y="0" width="1" height="10" fill="#333"/><rect x="1.5" y="3" width="2" height="6" fill="#e02020"/><rect x="3.5" y="1" width="2" height="8" fill="#2040e0"/><rect x="5.5" y="4" width="2" height="5" fill="#e020e0"/><rect x="7.5" y="2" width="2" height="7" fill="#20a020"/></svg>
<div class="t" style="left:784.5px;top:48.40px;height:15.2px;line-height:15.2px;font-size:7.6px;transform:scaleX(0.83);transform-origin:0 50%;color:#a8b0b8">Measure_1</div>
<div style="left:1015.5px;top:50.5px;width:18px;height:10px;background:linear-gradient(#d8e6f4,#c4d6ea);border:1px solid #a4b8cc;border-radius:2px;box-sizing:border-box"></div>
<div style="left:1035.0px;top:50.5px;width:18px;height:10px;background:linear-gradient(#d8e6f4,#c4d6ea);border:1px solid #a4b8cc;border-radius:2px;box-sizing:border-box"></div>
<div style="left:1054.5px;top:50.5px;width:18px;height:10px;background:linear-gradient(#d8e6f4,#c4d6ea);border:1px solid #a4b8cc;border-radius:2px;box-sizing:border-box"></div>
<svg style="position:absolute;left:1020.5px;top:54.5px;" width="8" height="4" viewBox="0 0 8 4"><rect x="0.5" y="0.5" width="6" height="2.5" rx="1" fill="#e8e8e8" stroke="#707070" stroke-width="0.9"/></svg>
<svg style="position:absolute;left:1040.0px;top:52.5px;" width="8" height="6" viewBox="0 0 8 6"><rect x="0.5" y="0.5" width="6" height="5" rx="1" fill="#e8e8e8" stroke="#707070" stroke-width="0.9"/><rect x="2" y="2" width="3" height="2" fill="#909090"/></svg>
<svg style="position:absolute;left:1059.5px;top:52.0px;" width="8" height="7" viewBox="0 0 8 7"><path d="M1 1L7 6M7 1L1 6" stroke="#888" stroke-width="1.8"/></svg>
<svg style="position:absolute;left:773.5px;top:65px;" width="8" height="9" viewBox="0 0 8 9"><path d="M1.5 1L7 4.5L1.5 8Z" fill="#a8a8a8"/></svg>
<div style="left:788.0px;top:67px;width:5.5px;height:5.5px;background:#a00000"></div>
<div style="left:799px;top:64px;width:1px;height:11px;background:#c8c8c8"></div>
<div style="left:800px;top:64px;width:1px;height:11px;background:#fff"></div>
<svg style="position:absolute;left:801px;top:65px;" width="8" height="8" viewBox="0 0 8 8"><circle cx="4" cy="4" r="3.3" fill="#fff" stroke="#888" stroke-width="0.8"/><circle cx="4" cy="4" r="1.5" fill="#111"/></svg>
<div class="t" style="left:812.5px;top:61.00px;height:17.0px;line-height:17.0px;font-size:8.5px;transform:scaleX(0.85);transform-origin:0 50%;color:#111;font-weight:bold">CH1</div>
<svg style="position:absolute;left:830px;top:65px;" width="8" height="8" viewBox="0 0 8 8"><path d="M6.5 1.5A3.3 3.3 0 1 0 6.5 6.5" fill="none" stroke="#888" stroke-width="0.8"/></svg>
<div class="t" style="left:841px;top:61.00px;height:17.0px;line-height:17.0px;font-size:8.5px;transform:scaleX(0.85);transform-origin:0 50%;color:#111;font-weight:bold">CH2</div>
<div style="left:858px;top:64px;width:1px;height:11px;background:#c8c8c8"></div>
<div style="left:859px;top:64px;width:1px;height:11px;background:#fff"></div>
<div style="left:772px;top:75.5px;width:302px;height:1px;background:#a8a8a8"></div>
<div style="left:772px;top:76.5px;width:302px;height:217px;background:#f0f0f0"></div>
<svg style="position:absolute;left:772px;top:76px;" width="302" height="218" viewBox="0 0 302 218"><g transform="translate(-772,-76)"><rect x="806.5" y="99.7" width="221.5" height="193.3" fill="#ffffe0"/><path d="M772.5 99.70H1028" stroke="#888" stroke-width="1.2"/><path d="M772.5 111.22H1028" stroke="#888" stroke-width="1.2"/><path d="M772.5 122.74H1028" stroke="#888" stroke-width="1.2"/><path d="M772.5 134.26H1028" stroke="#888" stroke-width="1.2"/><path d="M772.5 145.78H1028" stroke="#888" stroke-width="1.2"/><path d="M772.5 157.30H1028" stroke="#888" stroke-width="1.2"/><path d="M772.5 168.82H1028" stroke="#888" stroke-width="1.2"/><path d="M772.5 180.34H1028" stroke="#888" stroke-width="1.2"/><path d="M772.5 191.86H1028" stroke="#888" stroke-width="1.2"/><path d="M772.5 203.38H1028" stroke="#888" stroke-width="1.2"/><path d="M772.5 214.90H1028" stroke="#888" stroke-width="1.2"/><path d="M772.5 226.42H1028" stroke="#888" stroke-width="1.2"/><path d="M772.5 237.94H1028" stroke="#888" stroke-width="1.2"/><path d="M772.5 249.46H1028" stroke="#888" stroke-width="1.2"/><path d="M772.5 260.98H1028" stroke="#888" stroke-width="1.2"/><path d="M772.5 272.50H1028" stroke="#888" stroke-width="1.2"/><path d="M772.5 284.02H1028" stroke="#888" stroke-width="1.2"/><path d="M772.5 77H1028M807.0 88.5H1028M772.5 88.5H806.5" stroke="#a0a0a0" stroke-width="1"/><path d="M772.5 99.2H1028" stroke="#404040" stroke-width="1.6"/><path d="M772.5 77V293M806.5 77V293M807.7 77V293M917.5 88.5V293M1028 77V293" stroke="#909090" stroke-width="1.1"/><path d="M1028 77V293" stroke="#707070" stroke-width="1.8"/><rect x="774.5" y="100.50" width="31" height="10.20" rx="2" fill="#0000a0"/><g transform="translate(774.5,100.50)"><path d="M4 6.5H9V2.5H16V6.5H19V2.5H26V6.5H29M9 1V9M16 1V9M9.5 8.5H16" fill="none" stroke="#e0e0f0" stroke-width="0.8"/><circle cx="9" cy="8.5" r="1" fill="#f0f0c0"/><circle cx="16" cy="8.5" r="1" fill="#f0f0c0"/></g><rect x="774.5" y="112.02" width="31" height="10.20" rx="2" fill="#0000a0"/><g transform="translate(774.5,112.02)"><path d="M4 7H8V2.5H13V7H18V2.5H23V7H28M8 9H18" fill="none" stroke="#e0e0f0" stroke-width="0.8"/><circle cx="8" cy="9" r="1" fill="#f0f0c0"/><circle cx="18" cy="9" r="1" fill="#f0f0c0"/></g><rect x="774.5" y="123.54" width="31" height="10.20" rx="2" fill="#0000a0"/><g transform="translate(774.5,123.54)"><path d="M10 6Q13 0.5 16 5.5T22 5.5T28 4.5" fill="none" stroke="#e0e0f0" stroke-width="0.8"/><path d="M6 6.5V9" stroke="#e8e8f0" stroke-width="0.9"/><circle cx="6" cy="6.5" r="1" fill="#f0f0c0"/><circle cx="6" cy="9" r="1" fill="#f0f0c0"/></g><rect x="774.5" y="135.06" width="31" height="10.20" rx="2" fill="#0000a0"/><g transform="translate(774.5,135.06)"><path d="M7 8.3H9.5V2.8H16.5V8.3H19.5V2.8H26.5V8.3H29" fill="none" stroke="#e0e0f0" stroke-width="0.8"/><path d="M4 2.5V7.8" stroke="#e8e8f0" stroke-width="0.9"/><circle cx="4" cy="2.5" r="1" fill="#f0f0c0"/><circle cx="4" cy="7.8" r="1" fill="#f0f0c0"/></g><rect x="774.5" y="146.58" width="31" height="10.20" rx="2" fill="#0000a0"/><g transform="translate(774.5,146.58)"><path d="M11 7Q14 0.5 17 5.5T23 5.5T29 4.5" fill="none" stroke="#e0e0f0" stroke-width="0.8"/><path d="M8.5 4.5V9" stroke="#e8e8f0" stroke-width="0.9"/><circle cx="8.5" cy="4.5" r="1" fill="#f0f0c0"/><circle cx="8.5" cy="9" r="1" fill="#f0f0c0"/></g><rect x="774.5" y="158.10" width="31" height="10.20" rx="2" fill="#0000a0"/><g transform="translate(774.5,158.10)"><path d="M7 8.3H9.5V3.5L12 2.8H16.5V8.3H19.5V3.5L22 2.8H26.5V8.3H29" fill="none" stroke="#e0e0f0" stroke-width="0.8"/><circle cx="4.5" cy="8.5" r="1" fill="#f0f0c0"/></g><rect x="774.5" y="169.62" width="31" height="10.20" rx="2" fill="#0000a0"/><g transform="translate(774.5,169.62)"><path d="M7 8.3H9.5V3.5L12 2.8H16.5V8.3H19.5V3.5L22 2.8H26.5V8.3H29" fill="none" stroke="#e0e0f0" stroke-width="0.8"/><path d="M4.5 2V8.5" stroke="#e8e8f0" stroke-width="0.9"/><circle cx="4.5" cy="2" r="1" fill="#f0f0c0"/><circle cx="4.5" cy="8.5" r="1" fill="#f0f0c0"/></g><rect x="774.5" y="181.14" width="31" height="10.20" rx="2" fill="#0000a0"/><g transform="translate(774.5,181.14)"><path d="M6 8.5H13L20 3H28M6 9.2H16" fill="none" stroke="#e0e0f0" stroke-width="0.8"/><circle cx="15" cy="8.5" r="1" fill="#f0f0c0"/></g><rect x="774.5" y="192.66" width="31" height="10.20" rx="2" fill="#0000a0"/><g transform="translate(774.5,192.66)"><path d="M6 2H13L20 8.5H28M12 9.2H22" fill="none" stroke="#e0e0f0" stroke-width="0.8"/><circle cx="15" cy="9" r="1" fill="#f0f0c0"/></g><rect x="774.5" y="204.18" width="31" height="10.20" rx="2" fill="#0000a0"/><g transform="translate(774.5,204.18)"><path d="M4 6H10V2.5H20V6H28" fill="none" stroke="#e0e0f0" stroke-width="0.8"/><circle cx="11" cy="8.5" r="1" fill="#f0f0c0"/><circle cx="19" cy="8.5" r="1" fill="#f0f0c0"/><path d="M11 8.5H19" stroke="#e0e0f0" stroke-width="0.7"/></g><rect x="774.5" y="215.70" width="31" height="10.20" rx="2" fill="#0000a0"/><g transform="translate(774.5,215.70)"><path d="M4 2.5H10V7.5H20V2.5H28" fill="none" stroke="#e0e0f0" stroke-width="0.8"/><circle cx="11" cy="8.8" r="1" fill="#f0f0c0"/><circle cx="19" cy="8.8" r="1" fill="#f0f0c0"/><path d="M11 8.8H19" stroke="#e0e0f0" stroke-width="0.7"/></g><rect x="774.5" y="227.22" width="31" height="10.20" rx="2" fill="#0000a0"/><g transform="translate(774.5,227.22)"><path d="M4 6.5H10V2.5H17V6.5H22V2.5H28" fill="none" stroke="#e0e0f0" stroke-width="0.8"/><circle cx="10" cy="8.5" r="1" fill="#f0f0c0"/><circle cx="17" cy="8.5" r="1" fill="#f0f0c0"/><path d="M10 8.5H17" stroke="#e0e0f0" stroke-width="0.7"/></g><rect x="774.5" y="238.74" width="31" height="10.20" rx="2" fill="#0000a0"/><g transform="translate(774.5,238.74)"><path d="M4 2.5H10V7.5H17V2.5H22V7.5H28" fill="none" stroke="#e0e0f0" stroke-width="0.8"/><circle cx="10" cy="8.8" r="1" fill="#f0f0c0"/><circle cx="17" cy="8.8" r="1" fill="#f0f0c0"/></g><rect x="774.5" y="250.26" width="31" height="10.20" rx="2" fill="#0000a0"/><g transform="translate(774.5,250.26)"><path d="M7 8.3H9.5V2.8H16.5V8.3H19.5V2.8H26.5V8.3H29" fill="none" stroke="#e0e0f0" stroke-width="0.8"/><path d="M4 2V8.5" stroke="#e8e8f0" stroke-width="0.9"/><circle cx="4" cy="2" r="1" fill="#f0f0c0"/><circle cx="4" cy="8.5" r="1" fill="#f0f0c0"/></g><rect x="774.5" y="261.78" width="31" height="10.20" rx="2" fill="#0000a0"/><g transform="translate(774.5,261.78)"><path d="M7 8.3H9.5V3.5L12 2.8H16.5V8.3H19.5V3.5L22 2.8H26.5V8.3H29" fill="none" stroke="#e0e0f0" stroke-width="0.8"/><path d="M4.5 2V8.5" stroke="#e8e8f0" stroke-width="0.9"/><circle cx="4.5" cy="2" r="1" fill="#f0f0c0"/><circle cx="4.5" cy="8.5" r="1" fill="#f0f0c0"/></g><rect x="774.5" y="273.30" width="31" height="10.20" rx="2" fill="#0000a0"/><g transform="translate(774.5,273.30)"><path d="M7 8.3H9.5V3.5L12 2.8H16.5V8.3H19.5V3.5L22 2.8H26.5V8.3H29" fill="none" stroke="#e0e0f0" stroke-width="0.8"/><circle cx="4.5" cy="9" r="1" fill="#f0f0c0"/></g><rect x="774.5" y="284.82" width="31" height="7.78" rx="2" fill="#0000a0"/><g transform="translate(774.5,284.82)"><path d="M7 5.5H12L13 2.5L14 8L15 4L16 6H29" fill="none" stroke="#e0e0f0" stroke-width="0.8"/><path d="M4.5 2V4" stroke="#e8e8f0" stroke-width="0.9"/><circle cx="4.5" cy="2" r="1" fill="#f0f0c0"/><circle cx="4.5" cy="4" r="1" fill="#f0f0c0"/></g></g></svg>
<div class="t" style="left:857.50px;top:73.00px;width:120px;text-align:center;height:22px;line-height:22px;font-size:11px;font-family:'Liberation Mono',monospace;color:#505a70;transform:scaleX(0.87);-webkit-text-stroke:0">Digital Scope</div>
<div class="t" style="left:769.50px;top:87.80px;width:40px;text-align:center;height:14px;line-height:14px;font-size:7px;font-family:'Liberation Mono',monospace;font-weight:bold;color:#000">Figure</div>
<div class="t" style="left:842.00px;top:87.80px;width:40px;text-align:center;height:14px;line-height:14px;font-size:7px;font-family:'Liberation Mono',monospace;font-weight:bold;color:#000">Type</div>
<div class="t" style="left:952.00px;top:87.80px;width:40px;text-align:center;height:14px;line-height:14px;font-size:7px;font-family:'Liberation Mono',monospace;font-weight:bold;color:#000">Value</div>
<div class="t" style="left:809px;top:99.16px;height:14px;line-height:14px;font-size:7px;transform:scaleX(0.83);transform-origin:0 50%;font-family:'Liberation Mono',monospace;color:#000">Frequency</div>
<div class="t" style="left:932px;top:99.16px;width:80px;height:14px;line-height:14px;text-align:center;font-size:7px;font-family:'Liberation Mono',monospace;color:#000;transform:scaleX(0.83);transform-origin:50% 50%">425.21 kHz</div>
<div class="t" style="left:809px;top:110.68px;height:14px;line-height:14px;font-size:7px;transform:scaleX(0.83);transform-origin:0 50%;font-family:'Liberation Mono',monospace;color:#000">Period</div>
<div class="t" style="left:932px;top:110.68px;width:80px;height:14px;line-height:14px;text-align:center;font-size:7px;font-family:'Liberation Mono',monospace;color:#000;transform:scaleX(0.83);transform-origin:50% 50%">2.352 us</div>
<div class="t" style="left:809px;top:122.20px;height:14px;line-height:14px;font-size:7px;transform:scaleX(0.83);transform-origin:0 50%;font-family:'Liberation Mono',monospace;color:#000">Vavg</div>
<div class="t" style="left:932px;top:122.20px;width:80px;height:14px;line-height:14px;text-align:center;font-size:7px;font-family:'Liberation Mono',monospace;color:#000;transform:scaleX(0.83);transform-origin:50% 50%">17.3 mv</div>
<div class="t" style="left:809px;top:133.72px;height:14px;line-height:14px;font-size:7px;transform:scaleX(0.83);transform-origin:0 50%;font-family:'Liberation Mono',monospace;color:#000">Vpp</div>
<div class="t" style="left:932px;top:133.72px;width:80px;height:14px;line-height:14px;text-align:center;font-size:7px;font-family:'Liberation Mono',monospace;color:#000;transform:scaleX(0.83);transform-origin:50% 50%">42.8 mv</div>
<div class="t" style="left:809px;top:145.24px;height:14px;line-height:14px;font-size:7px;transform:scaleX(0.83);transform-origin:0 50%;font-family:'Liberation Mono',monospace;color:#000">Vrms</div>
<div class="t" style="left:932px;top:145.24px;width:80px;height:14px;line-height:14px;text-align:center;font-size:7px;font-family:'Liberation Mono',monospace;color:#000;transform:scaleX(0.83);transform-origin:50% 50%">18.5 mv</div>
<div class="t" style="left:809px;top:156.76px;height:14px;line-height:14px;font-size:7px;transform:scaleX(0.83);transform-origin:0 50%;font-family:'Liberation Mono',monospace;color:#000">Vmin</div>
<div class="t" style="left:932px;top:156.76px;width:80px;height:14px;line-height:14px;text-align:center;font-size:7px;font-family:'Liberation Mono',monospace;color:#000;transform:scaleX(0.83);transform-origin:50% 50%">-1.20 mv</div>
<div class="t" style="left:809px;top:168.28px;height:14px;line-height:14px;font-size:7px;transform:scaleX(0.83);transform-origin:0 50%;font-family:'Liberation Mono',monospace;color:#000">Vmax</div>
<div class="t" style="left:932px;top:168.28px;width:80px;height:14px;line-height:14px;text-align:center;font-size:7px;font-family:'Liberation Mono',monospace;color:#000;transform:scaleX(0.83);transform-origin:50% 50%">41.6 mv</div>
<div class="t" style="left:809px;top:179.80px;height:14px;line-height:14px;font-size:7px;transform:scaleX(0.83);transform-origin:0 50%;font-family:'Liberation Mono',monospace;color:#000">Rise Time</div>
<div class="t" style="left:932px;top:179.80px;width:80px;height:14px;line-height:14px;text-align:center;font-size:7px;font-family:'Liberation Mono',monospace;color:#000;transform:scaleX(0.83);transform-origin:50% 50%">663.3 ns</div>
<div class="t" style="left:809px;top:191.32px;height:14px;line-height:14px;font-size:7px;transform:scaleX(0.83);transform-origin:0 50%;font-family:'Liberation Mono',monospace;color:#000">Fall Time</div>
<div class="t" style="left:932px;top:191.32px;width:80px;height:14px;line-height:14px;text-align:center;font-size:7px;font-family:'Liberation Mono',monospace;color:#000;transform:scaleX(0.83);transform-origin:50% 50%">1.005 us</div>
<div class="t" style="left:809px;top:202.84px;height:14px;line-height:14px;font-size:7px;transform:scaleX(0.83);transform-origin:0 50%;font-family:'Liberation Mono',monospace;color:#000">Pos.PulseWidth</div>
<div class="t" style="left:932px;top:202.84px;width:80px;height:14px;line-height:14px;text-align:center;font-size:7px;font-family:'Liberation Mono',monospace;color:#000;transform:scaleX(0.83);transform-origin:50% 50%">80.40 ns</div>
<div class="t" style="left:809px;top:214.36px;height:14px;line-height:14px;font-size:7px;transform:scaleX(0.83);transform-origin:0 50%;font-family:'Liberation Mono',monospace;color:#000">Neg.PulseWidth</div>
<div class="t" style="left:932px;top:214.36px;width:80px;height:14px;line-height:14px;text-align:center;font-size:7px;font-family:'Liberation Mono',monospace;color:#000;transform:scaleX(0.83);transform-origin:50% 50%">2.271 us</div>
<div class="t" style="left:809px;top:225.88px;height:14px;line-height:14px;font-size:7px;transform:scaleX(0.83);transform-origin:0 50%;font-family:'Liberation Mono',monospace;color:#000">Pos.Duty</div>
<div class="t" style="left:932px;top:225.88px;width:80px;height:14px;line-height:14px;text-align:center;font-size:7px;font-family:'Liberation Mono',monospace;color:#000;transform:scaleX(0.83);transform-origin:50% 50%">3 %</div>
<div class="t" style="left:809px;top:237.40px;height:14px;line-height:14px;font-size:7px;transform:scaleX(0.83);transform-origin:0 50%;font-family:'Liberation Mono',monospace;color:#000">Neg.Duty</div>
<div class="t" style="left:932px;top:237.40px;width:80px;height:14px;line-height:14px;text-align:center;font-size:7px;font-family:'Liberation Mono',monospace;color:#000;transform:scaleX(0.83);transform-origin:50% 50%">97 %</div>
<div class="t" style="left:809px;top:248.92px;height:14px;line-height:14px;font-size:7px;transform:scaleX(0.83);transform-origin:0 50%;font-family:'Liberation Mono',monospace;color:#000">Vamp</div>
<div class="t" style="left:932px;top:248.92px;width:80px;height:14px;line-height:14px;text-align:center;font-size:7px;font-family:'Liberation Mono',monospace;color:#000;transform:scaleX(0.83);transform-origin:50% 50%">22.8 mv</div>
<div class="t" style="left:809px;top:260.44px;height:14px;line-height:14px;font-size:7px;transform:scaleX(0.83);transform-origin:0 50%;font-family:'Liberation Mono',monospace;color:#000">Vtop</div>
<div class="t" style="left:932px;top:260.44px;width:80px;height:14px;line-height:14px;text-align:center;font-size:7px;font-family:'Liberation Mono',monospace;color:#000;transform:scaleX(0.83);transform-origin:50% 50%">30.8 mv</div>
<div class="t" style="left:809px;top:271.96px;height:14px;line-height:14px;font-size:7px;transform:scaleX(0.83);transform-origin:0 50%;font-family:'Liberation Mono',monospace;color:#000">Vbase</div>
<div class="t" style="left:932px;top:271.96px;width:80px;height:14px;line-height:14px;text-align:center;font-size:7px;font-family:'Liberation Mono',monospace;color:#000;transform:scaleX(0.83);transform-origin:50% 50%">8.00 mv</div>
<div class="t" style="left:809px;top:283.48px;height:14px;line-height:14px;font-size:7px;transform:scaleX(0.83);transform-origin:0 50%;font-family:'Liberation Mono',monospace;color:#000">Vover</div>
<div class="t" style="left:932px;top:283.48px;width:80px;height:14px;line-height:14px;text-align:center;font-size:7px;font-family:'Liberation Mono',monospace;color:#000;transform:scaleX(0.83);transform-origin:50% 50%">47.37 %</div>
<div style="left:1063px;top:77px;width:10px;height:216px;background:#f0f0f0"></div>
<div style="left:1063px;top:77px;width:10px;height:9px;background:#fff;border:1px solid #a0a0a0;border-width:0 1px 1px 0;box-sizing:border-box"></div>
<svg style="position:absolute;left:1065px;top:79px;" width="6" height="4" viewBox="0 0 6 4"><path d="M0.5 3.5L3 0.5L5.5 3.5Z" fill="#111"/></svg>
<div style="left:1063px;top:86px;width:10px;height:11px;background:#f4f4f4;border:1px solid #a0a0a0;border-width:0 1px 1px 0;box-sizing:border-box"></div>
<div style="left:1063px;top:284px;width:10px;height:9px;background:#fff;border:1px solid #a0a0a0;border-width:0 1px 1px 0;box-sizing:border-box"></div>
<svg style="position:absolute;left:1065px;top:287px;" width="6" height="4" viewBox="0 0 6 4"><path d="M0.5 0.5L3 3.5L5.5 0.5Z" fill="#111"/></svg>
<div style="left:772px;top:294px;width:302px;height:1px;background:#b8b8b8"></div>
<div style="left:772px;top:295px;width:302px;height:11px;background:#f0f0f0"></div>
<svg style="position:absolute;left:1066px;top:297px;" width="8" height="8" viewBox="0 0 8 8"><path d="M7.5 1L1 7.5M7.5 4L4 7.5" stroke="#a0a0a0" stroke-width="0.9"/></svg>
<div class="t" style="left:167.6px;top:48.40px;height:15.2px;line-height:15.2px;font-size:7.6px;transform:scaleX(0.81);transform-origin:0 50%;color:#a8b0b8">Wave_1</div>
<div class="t" style="left:167px;top:337.90px;height:15.2px;line-height:15.2px;font-size:7.6px;transform:scaleX(0.81);transform-origin:0 50%;color:#a8b0b8">Power_1</div>
<svg style="position:absolute;left:774px;top:317px;" width="10" height="10" viewBox="0 0 10 10"><rect x="0.5" y="0.5" width="9" height="9" fill="#fff" stroke="#444" stroke-width="0.8"/><path d="M1 4L4 2L6 5L9 2" stroke="#20b020" stroke-width="1.1" fill="none"/><path d="M1 6L4 4L6 7L9 4" stroke="#e03030" stroke-width="1.1" fill="none"/><path d="M1 8L4 6L6 8.5L9 6" stroke="#3040e0" stroke-width="1.1" fill="none"/></svg>
<div class="t" style="left:786px;top:314.90px;height:15.2px;line-height:15.2px;font-size:7.6px;transform:scaleX(0.81);transform-origin:0 50%;color:#a8b0b8">Arith_1</div>
<div style="left:1017px;top:316px;width:18px;height:10px;background:linear-gradient(#d8e6f4,#c4d6ea);border:1px solid #a4b8cc;border-radius:2px;box-sizing:border-box"></div>
<div style="left:1036.5px;top:316px;width:18px;height:10px;background:linear-gradient(#d8e6f4,#c4d6ea);border:1px solid #a4b8cc;border-radius:2px;box-sizing:border-box"></div>
<div style="left:1056px;top:316px;width:18px;height:10px;background:linear-gradient(#d8e6f4,#c4d6ea);border:1px solid #a4b8cc;border-radius:2px;box-sizing:border-box"></div>
<svg style="position:absolute;left:1022px;top:320px;" width="8" height="4" viewBox="0 0 8 4"><rect x="0.5" y="0.5" width="6" height="2.5" rx="1" fill="#e8e8e8" stroke="#707070" stroke-width="0.9"/></svg>
<svg style="position:absolute;left:1041.5px;top:318px;" width="8" height="6" viewBox="0 0 8 6"><rect x="0.5" y="0.5" width="6" height="5" rx="1" fill="#e8e8e8" stroke="#707070" stroke-width="0.9"/><rect x="2" y="2" width="3" height="2" fill="#909090"/></svg>
<svg style="position:absolute;left:1061px;top:317.5px;" width="8" height="7" viewBox="0 0 8 7"><path d="M1 1L7 6M7 1L1 6" stroke="#888" stroke-width="1.8"/></svg>
<svg style="position:absolute;left:775px;top:331.5px;" width="8" height="9" viewBox="0 0 8 9"><path d="M1.5 1L7 4.5L1.5 8Z" fill="#a8a8a8"/></svg>
<div style="left:789.5px;top:333.5px;width:5.5px;height:5.5px;background:#a00000"></div>
<div style="left:799px;top:330px;width:1px;height:12px;background:#c8c8c8"></div>
<div style="left:800px;top:330px;width:1px;height:12px;background:#fff"></div>
<div style="left:773px;top:342px;width:301px;height:1px;background:#909090"></div>
<div style="left:781px;top:352px;width:292px;height:263px;border-top:1px solid #e2e2e2;border-left:1px solid #e2e2e2;box-sizing:border-box"></div>
<svg style="position:absolute;left:774px;top:343px;" width="300" height="272" viewBox="0 0 300 272"><g transform="translate(-774,-343)"><rect x="824" y="364.5" width="241.5" height="72.0" fill="#fff"/><path d="M824 382.50H1065.5" stroke="#c8c8c8" stroke-width="1"/><path d="M824 400.50H1065.5" stroke="#c8c8c8" stroke-width="1"/><path d="M824 418.50H1065.5" stroke="#c8c8c8" stroke-width="1"/><path d="M848.15 364.5V436.5" stroke="#c8c8c8" stroke-width="1"/><path d="M872.30 364.5V436.5" stroke="#c8c8c8" stroke-width="1"/><path d="M896.45 364.5V436.5" stroke="#c8c8c8" stroke-width="1"/><path d="M920.60 364.5V436.5" stroke="#c8c8c8" stroke-width="1"/><path d="M944.75 364.5V436.5" stroke="#c8c8c8" stroke-width="1"/><path d="M968.90 364.5V436.5" stroke="#c8c8c8" stroke-width="1"/><path d="M993.05 364.5V436.5" stroke="#c8c8c8" stroke-width="1"/><path d="M1017.20 364.5V436.5" stroke="#c8c8c8" stroke-width="1"/><path d="M1041.35 364.5V436.5" stroke="#c8c8c8" stroke-width="1"/><path d="M824 365.5H1065.5" stroke="#8a8a8a" stroke-width="2"/><path d="M824 364.5V436.5" stroke="#8a8a8a" stroke-width="2"/><path d="M817 364.50H824" stroke="#444" stroke-width="0.9"/><path d="M817 382.50H824" stroke="#444" stroke-width="0.9"/><path d="M817 400.50H824" stroke="#444" stroke-width="0.9"/><path d="M817 418.50H824" stroke="#444" stroke-width="0.9"/><path d="M817 436.50H824" stroke="#444" stroke-width="0.9"/><path d="M824.00 436.5V441.5" stroke="#444" stroke-width="0.9"/><path d="M848.15 436.5V441.5" stroke="#444" stroke-width="0.9"/><path d="M872.30 436.5V441.5" stroke="#444" stroke-width="0.9"/><path d="M896.45 436.5V441.5" stroke="#444" stroke-width="0.9"/><path d="M920.60 436.5V441.5" stroke="#444" stroke-width="0.9"/><path d="M944.75 436.5V441.5" stroke="#444" stroke-width="0.9"/><path d="M968.90 436.5V441.5" stroke="#444" stroke-width="0.9"/><path d="M993.05 436.5V441.5" stroke="#444" stroke-width="0.9"/><path d="M1017.20 436.5V441.5" stroke="#444" stroke-width="0.9"/><path d="M1041.35 436.5V441.5" stroke="#444" stroke-width="0.9"/><path d="M1065.50 436.5V441.5" stroke="#444" stroke-width="0.9"/><rect x="824" y="466.5" width="241.5" height="71.0" fill="#fff"/><path d="M824 484.25H1065.5" stroke="#c8c8c8" stroke-width="1"/><path d="M824 502.00H1065.5" stroke="#c8c8c8" stroke-width="1"/><path d="M824 519.75H1065.5" stroke="#c8c8c8" stroke-width="1"/><path d="M848.15 466.5V537.5" stroke="#c8c8c8" stroke-width="1"/><path d="M872.30 466.5V537.5" stroke="#c8c8c8" stroke-width="1"/><path d="M896.45 466.5V537.5" stroke="#c8c8c8" stroke-width="1"/><path d="M920.60 466.5V537.5" stroke="#c8c8c8" stroke-width="1"/><path d="M944.75 466.5V537.5" stroke="#c8c8c8" stroke-width="1"/><path d="M968.90 466.5V537.5" stroke="#c8c8c8" stroke-width="1"/><path d="M993.05 466.5V537.5" stroke="#c8c8c8" stroke-width="1"/><path d="M1017.20 466.5V537.5" stroke="#c8c8c8" stroke-width="1"/><path d="M1041.35 466.5V537.5" stroke="#c8c8c8" stroke-width="1"/><path d="M824 467.5H1065.5" stroke="#8a8a8a" stroke-width="2"/><path d="M824 466.5V537.5" stroke="#8a8a8a" stroke-width="2"/><path d="M817 466.50H824" stroke="#444" stroke-width="0.9"/><path d="M817 484.25H824" stroke="#444" stroke-width="0.9"/><path d="M817 502.00H824" stroke="#444" stroke-width="0.9"/><path d="M817 519.75H824" stroke="#444" stroke-width="0.9"/><path d="M817 537.50H824" stroke="#444" stroke-width="0.9"/><path d="M824.00 537.5V542.5" stroke="#444" stroke-width="0.9"/><path d="M848.15 537.5V542.5" stroke="#444" stroke-width="0.9"/><path d="M872.30 537.5V542.5" stroke="#444" stroke-width="0.9"/><path d="M896.45 537.5V542.5" stroke="#444" stroke-width="0.9"/><path d="M920.60 537.5V542.5" stroke="#444" stroke-width="0.9"/><path d="M944.75 537.5V542.5" stroke="#444" stroke-width="0.9"/><path d="M968.90 537.5V542.5" stroke="#444" stroke-width="0.9"/><path d="M993.05 537.5V542.5" stroke="#444" stroke-width="0.9"/><path d="M1017.20 537.5V542.5" stroke="#444" stroke-width="0.9"/><path d="M1041.35 537.5V542.5" stroke="#444" stroke-width="0.9"/><path d="M1065.50 537.5V542.5" stroke="#444" stroke-width="0.9"/><polyline points="825.0,365.9 825.5,368.1 826.0,366.1 826.5,367.1 827.0,370.3 827.5,367.8 828.0,367.8 828.5,367.7 829.0,368.5 829.5,372.0 830.0,374.1 830.5,375.0 831.0,372.0 831.5,372.6 832.0,373.5 832.5,377.0 833.0,377.8 833.5,378.3 834.0,375.0 834.5,375.6 835.0,378.0 835.5,376.3 836.0,374.1 836.5,373.9 837.0,374.5 837.5,375.7 838.0,365.7 838.5,377.2 839.0,375.3 839.5,373.4 840.0,374.7 840.5,372.5 841.0,370.0 841.5,372.3 842.0,374.3 842.5,372.3 843.0,371.8 843.5,369.9 844.0,368.8 844.5,368.2 845.0,366.4 845.5,367.5 846.0,367.0 846.5,365.7 847.0,365.0 847.5,365.0 848.0,365.0 848.5,365.0 849.0,365.1 849.5,365.0 850.0,365.8 850.5,368.4 851.0,368.1 851.5,368.4 852.0,368.4 852.5,379.7 853.0,366.8 853.5,369.9 854.0,365.0 854.5,370.8 855.0,369.5 855.5,371.7 856.0,372.3 856.5,372.2 857.0,374.8 857.5,376.7 858.0,378.6 858.5,374.8 859.0,375.7 859.5,377.1 860.0,375.4 860.5,374.6 861.0,376.1 861.5,377.1 862.0,391.2 862.5,375.9 863.0,376.1 863.5,377.1 864.0,383.3 864.5,372.9 865.0,372.9 865.5,371.7 866.0,371.8 866.5,370.6 867.0,371.4 867.5,368.9 868.0,368.4 868.5,370.0 869.0,368.8 869.5,370.8 870.0,365.0 870.5,365.0 871.0,365.0 871.5,365.0 872.0,365.0 872.5,365.7 873.0,365.0 873.5,365.0 874.0,365.0 874.5,367.1 875.0,365.6 875.5,365.0 876.0,367.9 876.5,370.9 877.0,370.8 877.5,366.1 878.0,365.0 878.5,371.5 879.0,375.0 879.5,377.3 880.0,381.2 880.5,374.8 881.0,375.7 881.5,376.8 882.0,375.5 882.5,375.2 883.0,377.2 883.5,375.7 884.0,372.9 884.5,373.7 885.0,375.3 885.5,374.3 886.0,373.5 886.5,375.3 887.0,385.2 887.5,378.7 888.0,377.7 888.5,378.1 889.0,374.2 889.5,367.9 890.0,371.7 890.5,371.2 891.0,370.0 891.5,370.8 892.0,370.1 892.5,368.5 893.0,376.0 893.5,365.5 894.0,369.4 894.5,368.7 895.0,366.7 895.5,368.8 896.0,366.9 896.5,366.0 897.0,366.6 897.5,366.5 898.0,365.0 898.5,365.0 899.0,366.4 899.5,365.0 900.0,367.8 900.5,368.0 901.0,367.9 901.5,369.2 902.0,372.7 902.5,373.0 903.0,374.7 903.5,374.4 904.0,371.8 904.5,375.0 905.0,376.7 905.5,375.5 906.0,374.8 906.5,375.3 907.0,375.9 907.5,378.1 908.0,378.2 908.5,376.1 909.0,376.5 909.5,376.2 910.0,376.4 910.5,375.8 911.0,376.2 911.5,377.5 912.0,377.9 912.5,377.9 913.0,376.9 913.5,372.1 914.0,371.3 914.5,372.9 915.0,372.8 915.5,372.3 916.0,380.9 916.5,369.8 917.0,367.5 917.5,365.4 918.0,365.8 918.5,367.0 919.0,365.0 919.5,365.0 920.0,365.0 920.5,366.2 921.0,368.1 921.5,365.0 922.0,365.0 922.5,366.3 923.0,367.9 923.5,368.6 924.0,367.4 924.5,368.5 925.0,369.0 925.5,366.8 926.0,380.5 926.5,370.3 927.0,388.2 927.5,375.8 928.0,374.2 928.5,373.2 929.0,374.0 929.5,373.2 930.0,371.1 930.5,372.9 931.0,376.4 931.5,376.0 932.0,372.2 932.5,373.3 933.0,387.0 933.5,375.0 934.0,375.0 934.5,374.8 935.0,376.2 935.5,376.9 936.0,374.9 936.5,374.2 937.0,374.6 937.5,371.9 938.0,370.4 938.5,371.6 939.0,369.1 939.5,367.7 940.0,369.0 940.5,369.2 941.0,369.9 941.5,372.4 942.0,368.7 942.5,366.8 943.0,369.3 943.5,367.8 944.0,365.0 944.5,365.0 945.0,365.0 945.5,365.0 946.0,365.0 946.5,366.4 947.0,367.2 947.5,369.2 948.0,368.9 948.5,368.7 949.0,369.7 949.5,384.0 950.0,369.9 950.5,372.3 951.0,373.8 951.5,373.6 952.0,376.1 952.5,377.5 953.0,375.0 953.5,372.7 954.0,373.5 954.5,374.7 955.0,376.1 955.5,385.1 956.0,373.5 956.5,381.6 957.0,377.5 957.5,379.3 958.0,376.0 958.5,373.4 959.0,373.8 959.5,381.5 960.0,377.4 960.5,375.5 961.0,373.3 961.5,373.1 962.0,374.8 962.5,372.9 963.0,371.3 963.5,372.4 964.0,372.7 964.5,380.4 965.0,369.7 965.5,381.0 966.0,365.0 966.5,365.0 967.0,370.5 967.5,365.0 968.0,365.0 968.5,365.8 969.0,366.0 969.5,365.0 970.0,365.0 970.5,365.0 971.0,366.3 971.5,368.3 972.0,366.6 972.5,368.7 973.0,370.1 973.5,371.2 974.0,372.6 974.5,372.2 975.0,374.4 975.5,375.8 976.0,374.9 976.5,374.4 977.0,374.3 977.5,374.2 978.0,375.4 978.5,375.9 979.0,375.2 979.5,376.8 980.0,376.7 980.5,376.6 981.0,378.0 981.5,376.2 982.0,374.8 982.5,377.9 983.0,386.3 983.5,381.6 984.0,376.1 984.5,375.0 985.0,374.3 985.5,372.1 986.0,372.2 986.5,371.5 987.0,372.1 987.5,373.4 988.0,377.3 988.5,371.6 989.0,371.9 989.5,371.9 990.0,369.3 990.5,366.3 991.0,366.3 991.5,368.7 992.0,367.7 992.5,368.0 993.0,368.0 993.5,366.6 994.0,366.5 994.5,380.8 995.0,368.6 995.5,367.2 996.0,367.6 996.5,368.0 997.0,371.2 997.5,374.9 998.0,370.5 998.5,369.2 999.0,370.2 999.5,371.0 1000.0,371.7 1000.5,374.1 1001.0,373.6 1001.5,374.3 1002.0,374.2 1002.5,377.8 1003.0,380.3 1003.5,388.5 1004.0,380.4 1004.5,378.2 1005.0,375.6 1005.5,376.4 1006.0,376.2 1006.5,377.2 1007.0,381.7 1007.5,377.4 1008.0,378.7 1008.5,382.8 1009.0,375.7 1009.5,374.3 1010.0,370.0 1010.5,371.2 1011.0,374.7 1011.5,374.5 1012.0,371.6 1012.5,369.9 1013.0,365.0 1013.5,373.3 1014.0,365.0 1014.5,369.0 1015.0,368.6 1015.5,369.7 1016.0,366.2 1016.5,380.0 1017.0,365.1 1017.5,365.0 1018.0,365.0 1018.5,366.8 1019.0,366.1 1019.5,365.5 1020.0,368.8 1020.5,370.1 1021.0,370.2 1021.5,370.7 1022.0,369.7 1022.5,371.9 1023.0,373.8 1023.5,379.0 1024.0,370.3 1024.5,372.3 1025.0,376.1 1025.5,376.5 1026.0,375.1 1026.5,376.9 1027.0,377.3 1027.5,375.8 1028.0,377.7 1028.5,379.9 1029.0,375.0 1029.5,389.3 1030.0,378.8 1030.5,378.3 1031.0,376.9 1031.5,376.8 1032.0,379.0 1032.5,395.3 1033.0,378.4 1033.5,377.0 1034.0,375.0 1034.5,373.7 1035.0,370.9 1035.5,371.8 1036.0,373.2 1036.5,369.4 1037.0,368.1 1037.5,368.0 1038.0,365.0 1038.5,365.0 1039.0,365.2 1039.5,365.0 1040.0,365.0 1040.5,365.0 1041.0,365.0 1041.5,365.0 1042.0,365.0 1042.5,365.0 1043.0,365.0 1043.5,365.0 1044.0,365.0 1044.5,365.0 1045.0,365.0 1045.5,365.0 1046.0,368.9 1046.5,372.4 1047.0,373.4 1047.5,372.8 1048.0,370.7 1048.5,372.2 1049.0,374.2 1049.5,374.1 1050.0,371.7 1050.5,378.9 1051.0,378.0 1051.5,378.5 1052.0,372.7 1052.5,376.8 1053.0,377.3 1053.5,376.7 1054.0,378.3 1054.5,378.8 1055.0,377.9 1055.5,377.4 1056.0,375.8 1056.5,371.4 1057.0,374.8 1057.5,375.1 1058.0,374.8 1058.5,372.2 1059.0,372.2 1059.5,373.3 1060.0,389.3 1060.5,368.4 1061.0,369.8 1061.5,367.3 1062.0,368.9 1062.5,367.3 1063.0,366.6 1063.5,368.5 1064.0,366.5 1064.5,365.0" fill="none" stroke="#ff0000" stroke-width="0.9"/><polyline points="825.0,401.6 825.5,396.4 826.0,400.9 826.5,400.3 827.0,401.6 827.5,401.5 828.0,403.6 828.5,402.8 829.0,403.4 829.5,404.8 830.0,405.2 830.5,402.6 831.0,406.9 831.5,403.8 832.0,404.5 832.5,405.4 833.0,405.0 833.5,407.7 834.0,406.0 834.5,404.8 835.0,405.6 835.5,405.2 836.0,405.3 836.5,406.4 837.0,406.6 837.5,405.9 838.0,404.7 838.5,405.4 839.0,407.0 839.5,406.6 840.0,405.7 840.5,406.8 841.0,404.1 841.5,405.3 842.0,406.0 842.5,406.2 843.0,406.9 843.5,405.8 844.0,405.9 844.5,405.5 845.0,404.0 845.5,404.6 846.0,405.8 846.5,404.6 847.0,403.0 847.5,402.8 848.0,404.0 848.5,408.3 849.0,403.3 849.5,402.5 850.0,400.9 850.5,400.9 851.0,399.7 851.5,402.9 852.0,403.2 852.5,404.7 853.0,402.3 853.5,405.3 854.0,404.6 854.5,404.7 855.0,405.2 855.5,404.1 856.0,405.4 856.5,404.7 857.0,405.3 857.5,406.6 858.0,405.5 858.5,406.7 859.0,399.8 859.5,405.5 860.0,405.5 860.5,406.3 861.0,406.4 861.5,407.1 862.0,405.8 862.5,405.4 863.0,406.4 863.5,407.9 864.0,407.0 864.5,404.2 865.0,406.2 865.5,405.7 866.0,405.9 866.5,406.8 867.0,406.0 867.5,405.8 868.0,404.1 868.5,405.4 869.0,404.5 869.5,405.2 870.0,405.6 870.5,401.3 871.0,403.4 871.5,403.7 872.0,400.9 872.5,401.3 873.0,400.2 873.5,400.7 874.0,401.0 874.5,400.8 875.0,402.7 875.5,402.3 876.0,402.1 876.5,403.5 877.0,404.9 877.5,403.1 878.0,403.8 878.5,404.8 879.0,405.9 879.5,403.2 880.0,405.4 880.5,408.4 881.0,405.9 881.5,407.9 882.0,408.5 882.5,406.8 883.0,408.4 883.5,406.2 884.0,404.4 884.5,405.7 885.0,407.6 885.5,408.9 886.0,406.8 886.5,404.5 887.0,406.2 887.5,404.2 888.0,406.2 888.5,407.8 889.0,405.2 889.5,405.2 890.0,405.6 890.5,405.7 891.0,406.6 891.5,406.3 892.0,406.6 892.5,404.6 893.0,406.6 893.5,405.7 894.0,403.6 894.5,403.7 895.0,403.1 895.5,401.5 896.0,404.7 896.5,402.9 897.0,401.8 897.5,402.6 898.0,401.1 898.5,401.0 899.0,402.6 899.5,400.5 900.0,401.0 900.5,400.6 901.0,402.1 901.5,404.4 902.0,403.3 902.5,405.9 903.0,404.2 903.5,405.4 904.0,404.3 904.5,406.4 905.0,407.9 905.5,405.6 906.0,404.4 906.5,406.0 907.0,406.8 907.5,405.3 908.0,408.1 908.5,404.8 909.0,406.7 909.5,407.6 910.0,406.4 910.5,407.4 911.0,406.6 911.5,405.7 912.0,405.6 912.5,408.0 913.0,404.0 913.5,406.3 914.0,405.3 914.5,405.6 915.0,406.8 915.5,405.0 916.0,404.2 916.5,406.8 917.0,406.7 917.5,405.1 918.0,403.8 918.5,403.3 919.0,404.2 919.5,403.8 920.0,403.3 920.5,403.0 921.0,401.8 921.5,402.1 922.0,401.1 922.5,401.4 923.0,400.9 923.5,401.6 924.0,400.7 924.5,401.8 925.0,401.4 925.5,403.7 926.0,403.0 926.5,403.4 927.0,403.9 927.5,404.1 928.0,404.2 928.5,406.1 929.0,409.2 929.5,406.7 930.0,405.3 930.5,406.2 931.0,404.0 931.5,406.9 932.0,405.0 932.5,407.3 933.0,406.7 933.5,408.2 934.0,406.6 934.5,405.4 935.0,408.3 935.5,407.4 936.0,407.2 936.5,407.9 937.0,406.0 937.5,403.7 938.0,405.8 938.5,405.4 939.0,406.6 939.5,405.5 940.0,406.4 940.5,404.8 941.0,406.6 941.5,405.8 942.0,404.1 942.5,405.9 943.0,405.6 943.5,404.1 944.0,402.4 944.5,402.8 945.0,402.1 945.5,401.1 946.0,401.2 946.5,401.0 947.0,399.7 947.5,401.2 948.0,400.5 948.5,401.9 949.0,402.2 949.5,403.8 950.0,403.0 950.5,404.1 951.0,403.0 951.5,406.0 952.0,407.4 952.5,405.3 953.0,406.2 953.5,406.5 954.0,405.7 954.5,406.9 955.0,405.5 955.5,405.9 956.0,406.0 956.5,405.4 957.0,404.7 957.5,407.1 958.0,406.2 958.5,405.3 959.0,404.9 959.5,405.9 960.0,405.1 960.5,406.6 961.0,406.1 961.5,406.5 962.0,407.1 962.5,406.2 963.0,406.6 963.5,407.1 964.0,406.3 964.5,403.4 965.0,406.7 965.5,408.0 966.0,405.5 966.5,406.2 967.0,403.9 967.5,404.1 968.0,401.0 968.5,404.1 969.0,403.3 969.5,401.4 970.0,401.1 970.5,401.7 971.0,399.2 971.5,403.1 972.0,401.6 972.5,401.7 973.0,403.7 973.5,403.7 974.0,403.8 974.5,402.9 975.0,405.4 975.5,405.0 976.0,404.2 976.5,405.2 977.0,405.9 977.5,405.0 978.0,406.7 978.5,405.4 979.0,406.9 979.5,406.3 980.0,406.5 980.5,405.0 981.0,406.2 981.5,406.7 982.0,406.4 982.5,405.7 983.0,406.4 983.5,405.7 984.0,406.0 984.5,407.3 985.0,407.7 985.5,407.8 986.0,406.6 986.5,405.4 987.0,405.7 987.5,407.0 988.0,406.0 988.5,407.3 989.0,405.2 989.5,406.2 990.0,403.7 990.5,404.4 991.0,404.8 991.5,404.2 992.0,403.4 992.5,401.6 993.0,402.3 993.5,401.5 994.0,400.7 994.5,401.4 995.0,400.2 995.5,400.5 996.0,403.5 996.5,402.0 997.0,403.4 997.5,402.1 998.0,402.7 998.5,402.3 999.0,402.8 999.5,403.3 1000.0,405.4 1000.5,404.3 1001.0,404.6 1001.5,405.1 1002.0,406.5 1002.5,405.5 1003.0,406.5 1003.5,404.9 1004.0,406.6 1004.5,406.0 1005.0,406.6 1005.5,404.9 1006.0,404.3 1006.5,406.0 1007.0,405.3 1007.5,406.6 1008.0,406.1 1008.5,406.5 1009.0,405.4 1009.5,406.2 1010.0,404.6 1010.5,406.7 1011.0,404.6 1011.5,405.2 1012.0,405.9 1012.5,406.2 1013.0,405.7 1013.5,403.3 1014.0,403.8 1014.5,403.9 1015.0,404.2 1015.5,402.5 1016.0,402.5 1016.5,403.2 1017.0,402.4 1017.5,402.3 1018.0,401.8 1018.5,399.6 1019.0,399.9 1019.5,401.0 1020.0,401.5 1020.5,400.9 1021.0,402.8 1021.5,401.6 1022.0,402.3 1022.5,403.4 1023.0,404.1 1023.5,403.7 1024.0,402.9 1024.5,404.1 1025.0,405.1 1025.5,407.0 1026.0,404.5 1026.5,407.3 1027.0,405.2 1027.5,407.1 1028.0,406.1 1028.5,404.8 1029.0,405.8 1029.5,410.2 1030.0,406.2 1030.5,412.1 1031.0,406.9 1031.5,405.7 1032.0,405.4 1032.5,405.1 1033.0,403.7 1033.5,407.3 1034.0,407.1 1034.5,406.2 1035.0,407.2 1035.5,407.8 1036.0,407.3 1036.5,404.0 1037.0,404.8 1037.5,405.7 1038.0,406.1 1038.5,403.6 1039.0,406.7 1039.5,403.3 1040.0,402.5 1040.5,400.9 1041.0,403.4 1041.5,403.0 1042.0,402.5 1042.5,401.5 1043.0,401.4 1043.5,401.1 1044.0,403.0 1044.5,402.1 1045.0,402.9 1045.5,400.6 1046.0,401.1 1046.5,404.5 1047.0,404.5 1047.5,404.8 1048.0,404.6 1048.5,405.4 1049.0,404.9 1049.5,406.2 1050.0,404.0 1050.5,405.9 1051.0,405.2 1051.5,405.1 1052.0,405.7 1052.5,405.8 1053.0,405.9 1053.5,407.7 1054.0,404.8 1054.5,405.0 1055.0,406.0 1055.5,406.0 1056.0,406.4 1056.5,406.9 1057.0,406.3 1057.5,405.1 1058.0,408.3 1058.5,406.2 1059.0,406.0 1059.5,406.0 1060.0,405.0 1060.5,403.3 1061.0,405.7 1061.5,405.7 1062.0,405.8 1062.5,403.9 1063.0,405.3 1063.5,403.1 1064.0,404.8 1064.5,405.8" fill="none" stroke="#0000ff" stroke-width="1.6"/><polyline points="825.0,467.0 825.5,479.0 826.0,472.4 826.5,470.6 827.0,471.9 827.5,470.8 828.0,471.1 828.5,473.3 829.0,467.0 829.5,474.4 830.0,474.4 830.5,476.1 831.0,474.6 831.5,477.1 832.0,476.9 832.5,477.2 833.0,474.8 833.5,474.9 834.0,474.3 834.5,476.8 835.0,475.4 835.5,477.7 836.0,476.2 836.5,475.1 837.0,476.2 837.5,477.4 838.0,476.4 838.5,480.6 839.0,477.1 839.5,476.3 840.0,472.1 840.5,476.7 841.0,473.8 841.5,475.4 842.0,474.7 842.5,475.6 843.0,475.8 843.5,474.8 844.0,474.9 844.5,471.3 845.0,473.0 845.5,473.9 846.0,467.0 846.5,470.8 847.0,471.6 847.5,471.4 848.0,479.7 848.5,469.0 849.0,470.2 849.5,470.9 850.0,468.7 850.5,473.2 851.0,471.8 851.5,469.5 852.0,474.8 852.5,471.3 853.0,474.7 853.5,472.0 854.0,473.6 854.5,474.7 855.0,473.8 855.5,473.7 856.0,475.8 856.5,477.9 857.0,476.5 857.5,469.5 858.0,479.3 858.5,475.8 859.0,477.0 859.5,478.0 860.0,478.4 860.5,476.1 861.0,479.1 861.5,476.8 862.0,477.2 862.5,473.1 863.0,478.7 863.5,475.5 864.0,474.9 864.5,478.5 865.0,476.4 865.5,475.1 866.0,475.6 866.5,475.0 867.0,474.4 867.5,476.8 868.0,475.3 868.5,467.0 869.0,472.2 869.5,473.9 870.0,471.7 870.5,470.6 871.0,471.3 871.5,472.8 872.0,473.9 872.5,469.1 873.0,471.7 873.5,469.2 874.0,471.4 874.5,470.2 875.0,470.2 875.5,471.3 876.0,469.6 876.5,470.4 877.0,469.2 877.5,474.4 878.0,469.9 878.5,474.7 879.0,477.2 879.5,479.1 880.0,481.8 880.5,475.8 881.0,467.0 881.5,476.5 882.0,477.4 882.5,477.2 883.0,475.2 883.5,477.1 884.0,475.1 884.5,471.7 885.0,469.0 885.5,477.6 886.0,477.0 886.5,477.6 887.0,474.5 887.5,479.4 888.0,476.3 888.5,478.5 889.0,476.2 889.5,475.9 890.0,476.6 890.5,482.3 891.0,475.8 891.5,474.9 892.0,475.6 892.5,471.6 893.0,475.3 893.5,472.4 894.0,472.1 894.5,471.2 895.0,469.8 895.5,472.3 896.0,469.6 896.5,469.6 897.0,471.1 897.5,471.4 898.0,469.8 898.5,470.3 899.0,471.3 899.5,471.3 900.0,472.3 900.5,471.2 901.0,472.7 901.5,472.1 902.0,475.6 902.5,475.4 903.0,475.7 903.5,475.7 904.0,471.7 904.5,474.1 905.0,475.2 905.5,477.3 906.0,470.3 906.5,478.9 907.0,477.2 907.5,475.9 908.0,477.4 908.5,480.0 909.0,477.4 909.5,480.0 910.0,476.9 910.5,475.9 911.0,477.5 911.5,475.2 912.0,473.4 912.5,474.2 913.0,478.6 913.5,476.3 914.0,473.4 914.5,477.5 915.0,473.7 915.5,474.3 916.0,477.0 916.5,473.2 917.0,475.6 917.5,472.6 918.0,473.2 918.5,473.7 919.0,471.9 919.5,471.3 920.0,471.2 920.5,468.4 921.0,470.4 921.5,470.2 922.0,468.9 922.5,469.9 923.0,471.8 923.5,471.5 924.0,469.2 924.5,471.1 925.0,472.7 925.5,473.9 926.0,472.9 926.5,473.7 927.0,475.7 927.5,476.2 928.0,475.0 928.5,475.5 929.0,477.2 929.5,475.4 930.0,477.2 930.5,477.4 931.0,474.1 931.5,482.7 932.0,478.9 932.5,478.1 933.0,478.5 933.5,477.1 934.0,478.4 934.5,477.0 935.0,474.9 935.5,477.0 936.0,477.3 936.5,476.7 937.0,475.9 937.5,475.6 938.0,475.5 938.5,476.0 939.0,473.5 939.5,475.6 940.0,474.7 940.5,475.8 941.0,472.5 941.5,473.6 942.0,472.6 942.5,471.8 943.0,472.4 943.5,471.9 944.0,472.2 944.5,472.7 945.0,472.0 945.5,468.7 946.0,467.0 946.5,469.5 947.0,470.3 947.5,471.9 948.0,472.8 948.5,472.7 949.0,471.5 949.5,471.4 950.0,473.8 950.5,477.3 951.0,474.1 951.5,473.2 952.0,476.4 952.5,475.8 953.0,476.2 953.5,477.7 954.0,476.3 954.5,473.6 955.0,475.5 955.5,476.6 956.0,478.2 956.5,483.3 957.0,477.8 957.5,478.6 958.0,479.1 958.5,475.9 959.0,477.0 959.5,477.1 960.0,476.5 960.5,479.1 961.0,476.2 961.5,478.1 962.0,475.7 962.5,477.3 963.0,478.1 963.5,477.7 964.0,474.8 964.5,474.4 965.0,475.1 965.5,475.5 966.0,473.0 966.5,473.9 967.0,469.8 967.5,472.0 968.0,471.9 968.5,468.9 969.0,470.2 969.5,468.3 970.0,467.8 970.5,469.3 971.0,468.2 971.5,473.6 972.0,468.8 972.5,469.2 973.0,473.2 973.5,473.7 974.0,471.9 974.5,475.2 975.0,476.2 975.5,474.1 976.0,476.6 976.5,481.4 977.0,475.8 977.5,473.6 978.0,475.9 978.5,480.2 979.0,473.2 979.5,477.3 980.0,476.0 980.5,478.4 981.0,479.3 981.5,477.2 982.0,476.0 982.5,476.3 983.0,478.5 983.5,479.3 984.0,478.7 984.5,475.8 985.0,475.7 985.5,476.5 986.0,476.7 986.5,474.6 987.0,475.0 987.5,474.7 988.0,474.4 988.5,473.6 989.0,475.0 989.5,472.0 990.0,471.5 990.5,474.2 991.0,471.4 991.5,470.3 992.0,470.4 992.5,471.0 993.0,471.0 993.5,472.4 994.0,470.3 994.5,467.2 995.0,469.9 995.5,468.3 996.0,470.9 996.5,471.3 997.0,470.0 997.5,474.6 998.0,474.0 998.5,475.7 999.0,472.5 999.5,476.3 1000.0,475.8 1000.5,477.1 1001.0,477.0 1001.5,475.8 1002.0,475.1 1002.5,477.2 1003.0,477.1 1003.5,474.9 1004.0,474.7 1004.5,480.8 1005.0,476.3 1005.5,474.9 1006.0,482.2 1006.5,475.5 1007.0,477.2 1007.5,475.3 1008.0,477.5 1008.5,475.8 1009.0,474.3 1009.5,478.4 1010.0,477.6 1010.5,476.6 1011.0,477.8 1011.5,475.3 1012.0,475.9 1012.5,472.7 1013.0,472.2 1013.5,467.0 1014.0,472.2 1014.5,473.5 1015.0,473.8 1015.5,467.4 1016.0,469.6 1016.5,470.4 1017.0,471.0 1017.5,471.9 1018.0,471.1 1018.5,468.3 1019.0,471.9 1019.5,468.4 1020.0,470.3 1020.5,470.4 1021.0,470.5 1021.5,469.1 1022.0,470.2 1022.5,473.4 1023.0,473.2 1023.5,476.4 1024.0,474.7 1024.5,474.5 1025.0,476.1 1025.5,474.0 1026.0,477.9 1026.5,476.7 1027.0,479.2 1027.5,474.9 1028.0,474.2 1028.5,474.2 1029.0,477.7 1029.5,476.4 1030.0,477.9 1030.5,475.4 1031.0,474.8 1031.5,475.7 1032.0,476.3 1032.5,477.4 1033.0,480.0 1033.5,478.2 1034.0,486.6 1034.5,475.5 1035.0,474.8 1035.5,474.0 1036.0,474.9 1036.5,473.5 1037.0,476.7 1037.5,474.8 1038.0,471.2 1038.5,472.0 1039.0,476.4 1039.5,472.1 1040.0,472.5 1040.5,471.2 1041.0,470.0 1041.5,467.0 1042.0,469.5 1042.5,467.1 1043.0,471.0 1043.5,470.5 1044.0,470.8 1044.5,473.1 1045.0,472.4 1045.5,467.0 1046.0,473.8 1046.5,472.9 1047.0,477.1 1047.5,473.4 1048.0,475.3 1048.5,474.6 1049.0,475.6 1049.5,476.5 1050.0,486.3 1050.5,474.5 1051.0,475.6 1051.5,477.6 1052.0,476.9 1052.5,476.7 1053.0,474.9 1053.5,478.1 1054.0,474.7 1054.5,478.7 1055.0,474.4 1055.5,479.3 1056.0,476.4 1056.5,475.7 1057.0,478.3 1057.5,475.6 1058.0,477.2 1058.5,476.8 1059.0,469.7 1059.5,474.9 1060.0,475.5 1060.5,473.5 1061.0,474.8 1061.5,475.6 1062.0,472.7 1062.5,473.5 1063.0,472.5 1063.5,470.4 1064.0,471.8 1064.5,476.1" fill="none" stroke="#00c030" stroke-width="1.5"/><polyline points="984,362 992,354.5 1000,362 1009,354.5" fill="none" stroke="#ff3030" stroke-width="0.9"/><polyline points="1042,362 1050,354.5 1058,362 1067,354.5" fill="none" stroke="#3040ff" stroke-width="0.9"/><polyline points="1040,465 1049,459 1058,465 1067,459" fill="none" stroke="#20e040" stroke-width="0.9"/></g></svg>
<div class="t" style="left:823px;top:351.30px;height:15.0px;line-height:15.0px;font-size:7.5px;transform:scaleX(0.8);transform-origin:0 50%;color:#111">Input Signals</div>
<div class="t" style="left:823px;top:453.00px;height:15.0px;line-height:15.0px;font-size:7.5px;transform:scaleX(0.8);transform-origin:0 50%;color:#111">Output Signal</div>
<div class="t" style="left:954.5px;top:350.50px;height:15.0px;line-height:15.0px;font-size:7.5px;font-family:'Liberation Serif',serif;color:#222">Signal1</div>
<div class="t" style="left:1012px;top:350.50px;height:15.0px;line-height:15.0px;font-size:7.5px;font-family:'Liberation Serif',serif;color:#222">Signal2</div>
<div class="t" style="left:989px;top:453.50px;height:15.0px;line-height:15.0px;font-size:7.5px;font-family:'Liberation Serif',serif;color:#222">Output Signal</div>
<div class="t" style="left:767.00px;top:357.50px;width:50px;text-align:right;height:14px;line-height:14px;font-size:7px;font-family:'Liberation Serif',serif;color:#111;letter-spacing:-0.35px">40. 00mv</div>
<div class="t" style="left:767.00px;top:375.50px;width:50px;text-align:right;height:14px;line-height:14px;font-size:7px;font-family:'Liberation Serif',serif;color:#111;letter-spacing:-0.35px">20. 00mv</div>
<div class="t" style="left:767.00px;top:393.50px;width:50px;text-align:right;height:14px;line-height:14px;font-size:7px;font-family:'Liberation Serif',serif;color:#111;letter-spacing:-0.35px">0mv</div>
<div class="t" style="left:767.00px;top:411.50px;width:50px;text-align:right;height:14px;line-height:14px;font-size:7px;font-family:'Liberation Serif',serif;color:#111;letter-spacing:-0.35px">-20. 00mv</div>
<div class="t" style="left:767.00px;top:429.50px;width:50px;text-align:right;height:14px;line-height:14px;font-size:7px;font-family:'Liberation Serif',serif;color:#111;letter-spacing:-0.35px">-40. 00mv</div>
<div class="t" style="left:767.00px;top:459.50px;width:50px;text-align:right;height:14px;line-height:14px;font-size:7px;font-family:'Liberation Serif',serif;color:#111;letter-spacing:-0.35px">54. 80mv</div>
<div class="t" style="left:767.00px;top:477.25px;width:50px;text-align:right;height:14px;line-height:14px;font-size:7px;font-family:'Liberation Serif',serif;color:#111;letter-spacing:-0.35px">27. 40mv</div>
<div class="t" style="left:767.00px;top:495.00px;width:50px;text-align:right;height:14px;line-height:14px;font-size:7px;font-family:'Liberation Serif',serif;color:#111;letter-spacing:-0.35px">0mv</div>
<div class="t" style="left:767.00px;top:512.75px;width:50px;text-align:right;height:14px;line-height:14px;font-size:7px;font-family:'Liberation Serif',serif;color:#111;letter-spacing:-0.35px">-27. 40mv</div>
<div class="t" style="left:767.00px;top:530.50px;width:50px;text-align:right;height:14px;line-height:14px;font-size:7px;font-family:'Liberation Serif',serif;color:#111;letter-spacing:-0.35px">-54. 80mv</div>
<div class="t" style="left:809.00px;top:438.50px;width:30px;text-align:center;height:15.0px;line-height:15.0px;font-size:7.5px;font-family:'Liberation Serif',serif;color:#111">0us</div>
<div class="t" style="left:809.00px;top:540.20px;width:30px;text-align:center;height:15.0px;line-height:15.0px;font-size:7.5px;font-family:'Liberation Serif',serif;color:#111">0us</div>
<div class="t" style="left:833.15px;top:438.50px;width:30px;text-align:center;height:15.0px;line-height:15.0px;font-size:7.5px;font-family:'Liberation Serif',serif;color:#111">4us</div>
<div class="t" style="left:833.15px;top:540.20px;width:30px;text-align:center;height:15.0px;line-height:15.0px;font-size:7.5px;font-family:'Liberation Serif',serif;color:#111">4us</div>
<div class="t" style="left:857.30px;top:438.50px;width:30px;text-align:center;height:15.0px;line-height:15.0px;font-size:7.5px;font-family:'Liberation Serif',serif;color:#111">8us</div>
<div class="t" style="left:857.30px;top:540.20px;width:30px;text-align:center;height:15.0px;line-height:15.0px;font-size:7.5px;font-family:'Liberation Serif',serif;color:#111">8us</div>
<div class="t" style="left:881.45px;top:438.50px;width:30px;text-align:center;height:15.0px;line-height:15.0px;font-size:7.5px;font-family:'Liberation Serif',serif;color:#111">12us</div>
<div class="t" style="left:881.45px;top:540.20px;width:30px;text-align:center;height:15.0px;line-height:15.0px;font-size:7.5px;font-family:'Liberation Serif',serif;color:#111">12us</div>
<div class="t" style="left:905.60px;top:438.50px;width:30px;text-align:center;height:15.0px;line-height:15.0px;font-size:7.5px;font-family:'Liberation Serif',serif;color:#111">16us</div>
<div class="t" style="left:905.60px;top:540.20px;width:30px;text-align:center;height:15.0px;line-height:15.0px;font-size:7.5px;font-family:'Liberation Serif',serif;color:#111">16us</div>
<div class="t" style="left:929.75px;top:438.50px;width:30px;text-align:center;height:15.0px;line-height:15.0px;font-size:7.5px;font-family:'Liberation Serif',serif;color:#111">20us</div>
<div class="t" style="left:929.75px;top:540.20px;width:30px;text-align:center;height:15.0px;line-height:15.0px;font-size:7.5px;font-family:'Liberation Serif',serif;color:#111">20us</div>
<div class="t" style="left:953.90px;top:438.50px;width:30px;text-align:center;height:15.0px;line-height:15.0px;font-size:7.5px;font-family:'Liberation Serif',serif;color:#111">24us</div>
<div class="t" style="left:953.90px;top:540.20px;width:30px;text-align:center;height:15.0px;line-height:15.0px;font-size:7.5px;font-family:'Liberation Serif',serif;color:#111">24us</div>
<div class="t" style="left:978.05px;top:438.50px;width:30px;text-align:center;height:15.0px;line-height:15.0px;font-size:7.5px;font-family:'Liberation Serif',serif;color:#111">28us</div>
<div class="t" style="left:978.05px;top:540.20px;width:30px;text-align:center;height:15.0px;line-height:15.0px;font-size:7.5px;font-family:'Liberation Serif',serif;color:#111">28us</div>
<div class="t" style="left:1002.20px;top:438.50px;width:30px;text-align:center;height:15.0px;line-height:15.0px;font-size:7.5px;font-family:'Liberation Serif',serif;color:#111">32us</div>
<div class="t" style="left:1002.20px;top:540.20px;width:30px;text-align:center;height:15.0px;line-height:15.0px;font-size:7.5px;font-family:'Liberation Serif',serif;color:#111">32us</div>
<div class="t" style="left:1026.35px;top:438.50px;width:30px;text-align:center;height:15.0px;line-height:15.0px;font-size:7.5px;font-family:'Liberation Serif',serif;color:#111">36us</div>
<div class="t" style="left:1026.35px;top:540.20px;width:30px;text-align:center;height:15.0px;line-height:15.0px;font-size:7.5px;font-family:'Liberation Serif',serif;color:#111">36us</div>
<div class="t" style="left:1050.50px;top:438.50px;width:30px;text-align:center;height:15.0px;line-height:15.0px;font-size:7.5px;font-family:'Liberation Serif',serif;color:#111">40us</div>
<div class="t" style="left:1050.50px;top:540.20px;width:30px;text-align:center;height:15.0px;line-height:15.0px;font-size:7.5px;font-family:'Liberation Serif',serif;color:#111">40us</div>
<div style="left:796px;top:562px;width:277px;height:53px;border-top:1px solid #d8d8d8;box-sizing:border-box"></div>
<div style="left:804px;top:571px;width:159px;height:44px;border:1px solid #d0d0d0;border-bottom:none;box-sizing:border-box"></div>
<div style="left:807px;top:567px;width:18px;height:8px;background:#f0f0f0"></div>
<div class="t" style="left:809px;top:563.50px;height:14px;line-height:14px;font-size:7px;transform:scaleX(0.86);transform-origin:0 50%;color:#222">Input</div>
<div class="t" style="left:807px;top:576.00px;height:14px;line-height:14px;font-size:7px;transform:scaleX(0.86);transform-origin:0 50%;color:#222">Input Signal 1:</div>
<div class="t" style="left:807px;top:593.00px;height:14px;line-height:14px;font-size:7px;transform:scaleX(0.86);transform-origin:0 50%;color:#222">Input Signal 2:</div>
<div style="left:870px;top:578px;width:79px;height:12px;background:#fff;border:1px solid #a8a8a8;border-top-color:#808080;border-left-color:#808080;box-sizing:border-box"></div>
<div class="t" style="left:872px;top:577.20px;height:13.6px;line-height:13.6px;font-size:6.8px;transform:scaleX(0.86);transform-origin:0 50%;color:#111">CH1</div>
<div style="left:938px;top:579px;width:10px;height:10px;background:#f4f4f4;border-right:1px solid #606060;border-bottom:1px solid #606060;box-sizing:border-box"></div>
<svg style="position:absolute;left:940px;top:582.5px;" width="6" height="4" viewBox="0 0 6 4"><path d="M0.5 0.5H5.5L3 3.5Z" fill="#111"/></svg>
<div style="left:870px;top:596px;width:79px;height:12px;background:#fff;border:1px solid #a8a8a8;border-top-color:#808080;border-left-color:#808080;box-sizing:border-box"></div>
<div class="t" style="left:872px;top:595.20px;height:13.6px;line-height:13.6px;font-size:6.8px;transform:scaleX(0.86);transform-origin:0 50%;color:#111">CH2</div>
<div style="left:938px;top:597px;width:10px;height:10px;background:#f4f4f4;border-right:1px solid #606060;border-bottom:1px solid #606060;box-sizing:border-box"></div>
<svg style="position:absolute;left:940px;top:600.5px;" width="6" height="4" viewBox="0 0 6 4"><path d="M0.5 0.5H5.5L3 3.5Z" fill="#111"/></svg>
<div style="left:966px;top:571px;width:102px;height:44px;border:1px solid #d0d0d0;border-bottom:none;box-sizing:border-box"></div>
<div style="left:969px;top:567px;width:55px;height:8px;background:#f0f0f0"></div>
<div class="t" style="left:971px;top:563.50px;height:14px;line-height:14px;font-size:7px;transform:scaleX(0.86);transform-origin:0 50%;color:#222">Operation Setup</div>
<div class="t" style="left:972px;top:578.00px;height:14px;line-height:14px;font-size:7px;transform:scaleX(0.86);transform-origin:0 50%;color:#222">Operation:</div>
<div style="left:972px;top:593px;width:91px;height:12px;background:#fff;border:1px solid #a8a8a8;border-top-color:#808080;border-left-color:#808080;box-sizing:border-box"></div>
<div class="t" style="left:974px;top:592.20px;height:13.6px;line-height:13.6px;font-size:6.8px;transform:scaleX(0.86);transform-origin:0 50%;color:#111">Subtract</div>
<div style="left:1052px;top:594px;width:10px;height:10px;background:#f4f4f4;border-right:1px solid #606060;border-bottom:1px solid #606060;box-sizing:border-box"></div>
<svg style="position:absolute;left:1054px;top:597.5px;" width="6" height="4" viewBox="0 0 6 4"><path d="M0.5 0.5H5.5L3 3.5Z" fill="#111"/></svg>
<div style="left:1072px;top:564px;width:1.5px;height:51px;background:#808080"></div>
<div style="left:1012px;top:616px;width:16px;height:9px;border:1px solid #d0d0d0;border-bottom:none;box-sizing:border-box"></div>
<div style="left:1029px;top:616px;width:20px;height:9px;border:1px solid #d0d0d0;border-bottom:none;box-sizing:border-box"></div>
<div class="t" style="left:1030.7px;top:613.00px;height:15.0px;line-height:15.0px;font-size:7.5px;transform:scaleX(0.95);transform-origin:0 50%;color:#222">NUM</div>
<div style="left:1050px;top:616px;width:18px;height:9px;border:1px solid #d0d0d0;border-bottom:none;box-sizing:border-box"></div>
</body></html>
